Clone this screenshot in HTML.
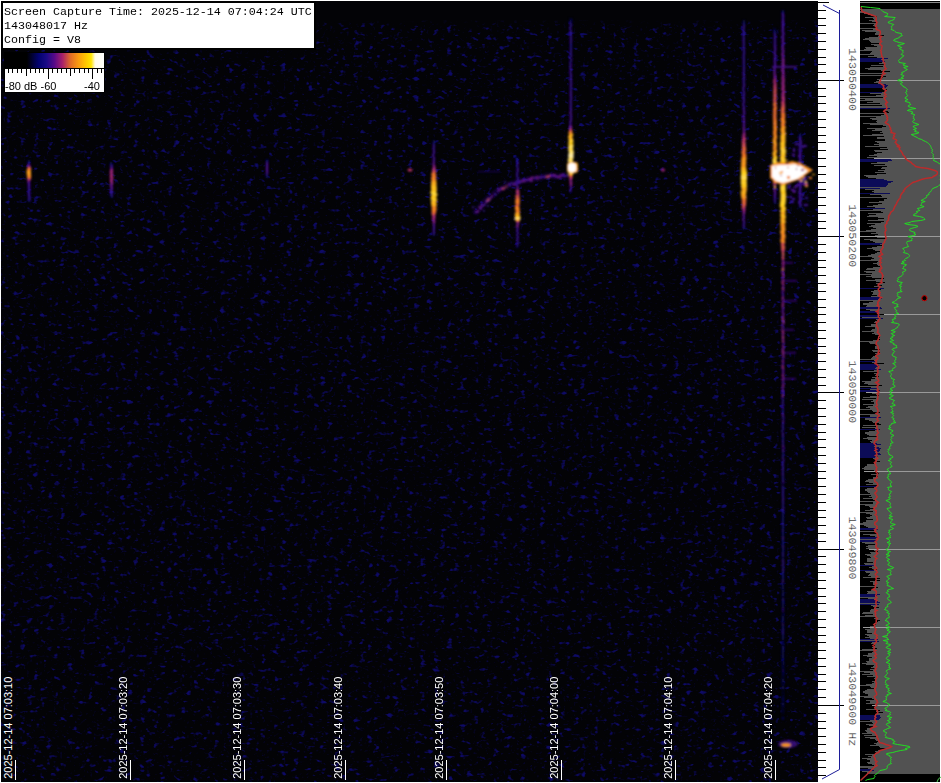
<!DOCTYPE html><html><head><meta charset="utf-8"><style>
html,body{margin:0;padding:0;width:941px;height:783px;overflow:hidden;background:#fff}
</style></head><body>
<svg width="941" height="783" viewBox="0 0 941 783" style="position:absolute;left:0;top:0;display:block"><defs>
<filter id="nz" x="1" y="12" width="817" height="770" filterUnits="userSpaceOnUse" color-interpolation-filters="sRGB">
<feTurbulence type="fractalNoise" baseFrequency="0.15 0.22" numOctaves="2" seed="3" result="t"/>
<feColorMatrix in="t" type="matrix" values="0 0 0 0 0  0 0 0 0 0  0 0 0 0 0  5.0 0 0 0 -3.1" result="a"/>
<feComponentTransfer in="a" result="b"><feFuncA type="table" tableValues="0 0.3 0.6 0.85 1"/></feComponentTransfer>
<feFlood flood-color="#0e0a66" result="f"/>
<feComposite in="f" in2="b" operator="in" result="c"/>
<feGaussianBlur in="c" stdDeviation="0.55" result="c2"/>
<feTurbulence type="fractalNoise" baseFrequency="0.3 0.38" numOctaves="1" seed="9" result="t2"/>
<feColorMatrix in="t2" type="matrix" values="0 0 0 0 0  0 0 0 0 0  0 0 0 0 0  4.0 0 0 0 -2.45" result="d"/>
<feFlood flood-color="#080634" result="f2"/>
<feComposite in="f2" in2="d" operator="in" result="e"/>
<feMerge><feMergeNode in="e"/><feMergeNode in="c2"/></feMerge>
</filter>
<linearGradient id="topfade" x1="0" y1="0" x2="0" y2="1">
<stop offset="0" stop-color="#030306" stop-opacity="1"/><stop offset="0.75" stop-color="#030306" stop-opacity="1"/><stop offset="1" stop-color="#030306" stop-opacity="0"/>
</linearGradient>
<filter id="b1" x="-20%" y="-20%" width="140%" height="140%"><feGaussianBlur stdDeviation="0.85"/></filter>
<filter id="b2" x="-20%" y="-20%" width="140%" height="140%"><feGaussianBlur stdDeviation="1.2"/></filter>
<linearGradient id="cbar" x1="0" y1="0" x2="1" y2="0">
<stop offset="0" stop-color="#000"/><stop offset="0.22" stop-color="#000"/>
<stop offset="0.34" stop-color="#020270"/><stop offset="0.42" stop-color="#1a0a86"/>
<stop offset="0.50" stop-color="#580a88"/><stop offset="0.58" stop-color="#a8206a"/>
<stop offset="0.66" stop-color="#e06a28"/><stop offset="0.74" stop-color="#fa9a10"/>
<stop offset="0.82" stop-color="#ffc800"/><stop offset="0.87" stop-color="#ffe400"/><stop offset="0.91" stop-color="#fffbe8"/><stop offset="1" stop-color="#fff"/>
</linearGradient>
</defs><rect x="0" y="0" width="941" height="783" fill="#fff"/><rect x="1" y="1" width="817" height="781" fill="#030306"/><rect x="1" y="12" width="817" height="770" fill="#000" filter="url(#nz)"/><rect x="1" y="1" width="817" height="25" fill="url(#topfade)"/><g filter="url(#b1)"><rect x="28.2" y="160" width="2.4" height="1" fill="#09093f"/><rect x="27.6" y="161" width="2.4" height="1" fill="#0d0d68"/><rect x="27.6" y="162" width="2.4" height="1" fill="#111082"/><rect x="27.8" y="163" width="2.4" height="1" fill="#27108d"/><rect x="27.2" y="164" width="2.4" height="1" fill="#3c1097"/><rect x="27.8" y="165" width="2.4" height="1" fill="#641598"/><rect x="27.5" y="166" width="2.9" height="1" fill="#932184"/><rect x="27.5" y="167" width="3.4" height="1" fill="#bd3866"/><rect x="27.0" y="168" width="3.9" height="1" fill="#eb7127"/><rect x="27.2" y="169" width="4.0" height="1" fill="#f07a20"/><rect x="26.5" y="170" width="4.1" height="1" fill="#f28620"/><rect x="26.6" y="171" width="4.4" height="1" fill="#f69e1f"/><rect x="26.6" y="172" width="4.4" height="1" fill="#f79f1f"/><rect x="26.5" y="173" width="4.4" height="1" fill="#f69e1f"/><rect x="26.9" y="174" width="4.2" height="1" fill="#f48d20"/><rect x="26.8" y="175" width="4.3" height="1" fill="#f4921f"/><rect x="27.1" y="176" width="4.1" height="1" fill="#f17e20"/><rect x="26.9" y="177" width="4.1" height="1" fill="#f17d20"/><rect x="27.5" y="178" width="3.6" height="1" fill="#d45547"/><rect x="27.2" y="179" width="3.2" height="1" fill="#b12a76"/><rect x="27.7" y="180" width="2.8" height="1" fill="#8d1f87"/><rect x="27.4" y="181" width="2.5" height="1" fill="#691696"/><rect x="27.5" y="182" width="2.4" height="1" fill="#5110a0"/><rect x="27.8" y="183" width="2.4" height="1" fill="#46109b"/><rect x="27.6" y="184" width="2.4" height="1" fill="#46109b"/><rect x="28.0" y="185" width="2.4" height="1" fill="#421099"/><rect x="27.9" y="186" width="2.4" height="1" fill="#381095"/><rect x="27.4" y="187" width="2.4" height="1" fill="#391095"/><rect x="28.0" y="188" width="2.4" height="1" fill="#371094"/><rect x="27.9" y="189" width="2.4" height="1" fill="#2e1090"/><rect x="28.0" y="190" width="2.4" height="1" fill="#321092"/><rect x="27.8" y="191" width="2.4" height="1" fill="#301091"/><rect x="27.5" y="192" width="2.4" height="1" fill="#321092"/><rect x="27.8" y="193" width="2.4" height="1" fill="#321092"/><rect x="27.6" y="194" width="2.4" height="1" fill="#311091"/><rect x="28.0" y="195" width="2.4" height="1" fill="#321092"/><rect x="28.0" y="196" width="2.4" height="1" fill="#2d108f"/><rect x="28.3" y="197" width="2.4" height="1" fill="#301091"/><rect x="28.1" y="198" width="2.4" height="1" fill="#26108c"/><rect x="27.8" y="199" width="2.4" height="1" fill="#2c108f"/><rect x="28.2" y="200" width="2.4" height="1" fill="#26108c"/><rect x="28.0" y="201" width="2.4" height="1" fill="#0d0d62"/><rect x="109.8" y="162" width="2.4" height="1" fill="#0a0a46"/><rect x="109.9" y="163" width="2.4" height="1" fill="#0d0d61"/><rect x="110.8" y="164" width="2.4" height="1" fill="#141084"/><rect x="109.8" y="165" width="2.4" height="1" fill="#2e1090"/><rect x="110.5" y="166" width="2.4" height="1" fill="#3b1096"/><rect x="110.4" y="167" width="2.4" height="1" fill="#53119f"/><rect x="110.4" y="168" width="2.4" height="1" fill="#641598"/><rect x="110.1" y="169" width="2.7" height="1" fill="#861d8a"/><rect x="110.2" y="170" width="2.9" height="1" fill="#a0247f"/><rect x="110.0" y="171" width="3.0" height="1" fill="#a6257c"/><rect x="109.6" y="172" width="2.9" height="1" fill="#a3257e"/><rect x="110.4" y="173" width="2.9" height="1" fill="#a1247e"/><rect x="109.6" y="174" width="2.9" height="1" fill="#a3257d"/><rect x="110.2" y="175" width="3.0" height="1" fill="#ac277a"/><rect x="110.0" y="176" width="3.1" height="1" fill="#b02977"/><rect x="109.6" y="177" width="2.9" height="1" fill="#a1247e"/><rect x="110.8" y="178" width="3.0" height="1" fill="#ac277a"/><rect x="109.9" y="179" width="2.9" height="1" fill="#9f247f"/><rect x="109.8" y="180" width="3.0" height="1" fill="#a8267c"/><rect x="110.0" y="181" width="2.8" height="1" fill="#982282"/><rect x="110.4" y="182" width="2.8" height="1" fill="#902085"/><rect x="110.4" y="183" width="2.7" height="1" fill="#851d8a"/><rect x="110.3" y="184" width="2.6" height="1" fill="#771a90"/><rect x="109.9" y="185" width="2.4" height="1" fill="#631598"/><rect x="110.1" y="186" width="2.5" height="1" fill="#6a1695"/><rect x="110.5" y="187" width="2.4" height="1" fill="#5e139a"/><rect x="110.5" y="188" width="2.4" height="1" fill="#58129d"/><rect x="110.3" y="189" width="2.4" height="1" fill="#4e109f"/><rect x="110.1" y="190" width="2.4" height="1" fill="#43109a"/><rect x="110.0" y="191" width="2.4" height="1" fill="#3e1098"/><rect x="110.3" y="192" width="2.4" height="1" fill="#381095"/><rect x="110.2" y="193" width="2.4" height="1" fill="#351094"/><rect x="110.3" y="194" width="2.4" height="1" fill="#29108e"/><rect x="110.6" y="195" width="2.4" height="1" fill="#2a108e"/><rect x="110.1" y="196" width="2.4" height="1" fill="#111082"/><rect x="110.9" y="197" width="2.4" height="1" fill="#0a0a4d"/><rect x="266.5" y="159" width="2.0" height="1" fill="#0b0b50"/><rect x="265.8" y="160" width="2.0" height="1" fill="#101082"/><rect x="266.1" y="161" width="2.0" height="1" fill="#22108a"/><rect x="266.2" y="162" width="2.0" height="1" fill="#3a1096"/><rect x="266.1" y="163" width="2.0" height="1" fill="#51109f"/><rect x="266.0" y="164" width="2.0" height="1" fill="#4b109e"/><rect x="266.0" y="165" width="2.0" height="1" fill="#4e109f"/><rect x="266.2" y="166" width="2.0" height="1" fill="#4f109f"/><rect x="266.1" y="167" width="2.0" height="1" fill="#55119e"/><rect x="266.0" y="168" width="2.0" height="1" fill="#52109f"/><rect x="266.0" y="169" width="2.0" height="1" fill="#4f109f"/><rect x="266.1" y="170" width="2.0" height="1" fill="#4e109f"/><rect x="266.2" y="171" width="2.0" height="1" fill="#5010a0"/><rect x="266.3" y="172" width="2.0" height="1" fill="#4c109e"/><rect x="265.8" y="173" width="2.0" height="1" fill="#3a1096"/><rect x="265.8" y="174" width="2.0" height="1" fill="#28108d"/><rect x="265.8" y="175" width="2.0" height="1" fill="#161085"/><rect x="265.7" y="176" width="2.0" height="1" fill="#0d0d62"/><rect x="266.0" y="177" width="2.0" height="1" fill="#0a0a4c"/><ellipse cx="410" cy="170" rx="2.5" ry="1.5" fill="#b9336b"/><rect x="432.9" y="140" width="1.9" height="1" fill="#0a0a4d"/><rect x="433.4" y="141" width="1.9" height="1" fill="#0c0c5d"/><rect x="433.0" y="142" width="1.9" height="1" fill="#0e0e72"/><rect x="432.4" y="143" width="1.9" height="1" fill="#201089"/><rect x="433.1" y="144" width="1.9" height="1" fill="#2a108e"/><rect x="432.9" y="145" width="1.9" height="1" fill="#361094"/><rect x="432.9" y="146" width="1.9" height="1" fill="#3b1096"/><rect x="432.8" y="147" width="1.9" height="1" fill="#391095"/><rect x="432.6" y="148" width="1.9" height="1" fill="#3d1097"/><rect x="432.7" y="149" width="1.9" height="1" fill="#3f1098"/><rect x="433.0" y="150" width="1.9" height="1" fill="#351093"/><rect x="433.1" y="151" width="1.9" height="1" fill="#49109d"/><rect x="433.1" y="152" width="1.9" height="1" fill="#3c1097"/><rect x="432.8" y="153" width="1.9" height="1" fill="#3f1098"/><rect x="432.2" y="154" width="1.9" height="1" fill="#44109a"/><rect x="432.5" y="155" width="1.9" height="1" fill="#46109c"/><rect x="432.4" y="156" width="1.9" height="1" fill="#43109a"/><rect x="432.6" y="157" width="1.9" height="1" fill="#3f1098"/><rect x="433.3" y="158" width="1.9" height="1" fill="#5010a0"/><rect x="433.2" y="159" width="1.9" height="1" fill="#4c109e"/><rect x="432.3" y="160" width="1.9" height="1" fill="#4d109e"/><rect x="433.0" y="161" width="1.9" height="1" fill="#52109f"/><rect x="432.9" y="162" width="1.9" height="1" fill="#56119e"/><rect x="432.5" y="163" width="2.1" height="1" fill="#6d1794"/><rect x="432.8" y="164" width="1.9" height="1" fill="#601499"/><rect x="432.5" y="165" width="2.3" height="1" fill="#7a1b8e"/><rect x="433.0" y="166" width="2.7" height="1" fill="#942184"/><rect x="432.7" y="167" width="2.6" height="1" fill="#8e1f86"/><rect x="432.5" y="168" width="3.1" height="1" fill="#a9267b"/><rect x="432.0" y="169" width="3.4" height="1" fill="#b7316e"/><rect x="432.6" y="170" width="3.5" height="1" fill="#c03c62"/><rect x="431.7" y="171" width="3.8" height="1" fill="#cc4b52"/><rect x="432.2" y="172" width="4.0" height="1" fill="#d65744"/><rect x="431.5" y="173" width="4.2" height="1" fill="#df6338"/><rect x="431.1" y="174" width="4.7" height="1" fill="#f17f20"/><rect x="431.5" y="175" width="4.6" height="1" fill="#f07820"/><rect x="432.0" y="176" width="4.4" height="1" fill="#e56a2f"/><rect x="431.1" y="177" width="4.8" height="1" fill="#f28320"/><rect x="431.2" y="178" width="4.9" height="1" fill="#f38d20"/><rect x="431.3" y="179" width="4.5" height="1" fill="#ec7325"/><rect x="431.5" y="180" width="5.1" height="1" fill="#f5951f"/><rect x="431.2" y="181" width="5.1" height="1" fill="#f69a1f"/><rect x="431.1" y="182" width="5.3" height="1" fill="#f7a51f"/><rect x="431.1" y="183" width="5.5" height="1" fill="#fab41f"/><rect x="431.2" y="184" width="5.5" height="1" fill="#f9af1f"/><rect x="430.9" y="185" width="5.3" height="1" fill="#f7a41f"/><rect x="430.9" y="186" width="5.9" height="1" fill="#fecc1e"/><rect x="431.1" y="187" width="5.6" height="1" fill="#fbba1f"/><rect x="431.0" y="188" width="5.7" height="1" fill="#fcbd1e"/><rect x="431.0" y="189" width="5.7" height="1" fill="#fcc01e"/><rect x="431.4" y="190" width="5.6" height="1" fill="#fbba1f"/><rect x="430.4" y="191" width="5.9" height="1" fill="#fecd1e"/><rect x="430.7" y="192" width="6.1" height="1" fill="#ffd429"/><rect x="430.3" y="193" width="6.2" height="1" fill="#ffd943"/><rect x="431.8" y="194" width="6.2" height="1" fill="#ffd940"/><rect x="431.0" y="195" width="5.8" height="1" fill="#fdc61e"/><rect x="430.9" y="196" width="5.9" height="1" fill="#fece1e"/><rect x="430.7" y="197" width="5.6" height="1" fill="#fab61f"/><rect x="430.8" y="198" width="6.0" height="1" fill="#ffcf1e"/><rect x="430.5" y="199" width="6.1" height="1" fill="#ffd632"/><rect x="431.8" y="200" width="5.8" height="1" fill="#fdc31e"/><rect x="430.8" y="201" width="5.5" height="1" fill="#fab31f"/><rect x="431.0" y="202" width="5.6" height="1" fill="#fbb81f"/><rect x="431.0" y="203" width="5.6" height="1" fill="#fbbb1f"/><rect x="431.3" y="204" width="5.2" height="1" fill="#f69d1f"/><rect x="431.3" y="205" width="5.7" height="1" fill="#fcc01e"/><rect x="431.5" y="206" width="4.5" height="1" fill="#ec7326"/><rect x="431.6" y="207" width="4.8" height="1" fill="#f28220"/><rect x="432.0" y="208" width="4.8" height="1" fill="#f28320"/><rect x="431.6" y="209" width="4.9" height="1" fill="#f38820"/><rect x="431.5" y="210" width="4.6" height="1" fill="#ef7622"/><rect x="432.0" y="211" width="4.5" height="1" fill="#ea7028"/><rect x="431.5" y="212" width="4.3" height="1" fill="#e26633"/><rect x="431.7" y="213" width="4.2" height="1" fill="#df6337"/><rect x="431.7" y="214" width="3.7" height="1" fill="#c94756"/><rect x="431.9" y="215" width="3.4" height="1" fill="#ba356a"/><rect x="432.7" y="216" width="2.8" height="1" fill="#962283"/><rect x="432.1" y="217" width="3.2" height="1" fill="#b12a76"/><rect x="432.4" y="218" width="3.1" height="1" fill="#ab277a"/><rect x="431.7" y="219" width="2.8" height="1" fill="#982282"/><rect x="432.7" y="220" width="2.5" height="1" fill="#871e89"/><rect x="433.0" y="221" width="2.7" height="1" fill="#932184"/><rect x="432.2" y="222" width="2.5" height="1" fill="#871e89"/><rect x="433.0" y="223" width="1.9" height="1" fill="#52109f"/><rect x="433.1" y="224" width="1.9" height="1" fill="#621598"/><rect x="432.9" y="225" width="1.9" height="1" fill="#56129d"/><rect x="433.0" y="226" width="1.9" height="1" fill="#45109b"/><rect x="433.0" y="227" width="1.9" height="1" fill="#47109c"/><rect x="432.8" y="228" width="1.9" height="1" fill="#48109c"/><rect x="432.8" y="229" width="1.9" height="1" fill="#42109a"/><rect x="433.0" y="230" width="1.9" height="1" fill="#411099"/><rect x="432.7" y="231" width="1.9" height="1" fill="#341093"/><rect x="432.8" y="232" width="1.9" height="1" fill="#3e1098"/><rect x="433.0" y="233" width="1.9" height="1" fill="#351093"/><rect x="432.6" y="234" width="1.9" height="1" fill="#26108c"/><rect x="432.9" y="235" width="1.9" height="1" fill="#0d0d6a"/><rect x="516.2" y="157" width="1.9" height="1" fill="#0d0d68"/><rect x="516.5" y="158" width="1.9" height="1" fill="#0c0c60"/><rect x="515.8" y="159" width="1.9" height="1" fill="#24108b"/><rect x="516.4" y="160" width="1.9" height="1" fill="#201089"/><rect x="516.4" y="161" width="1.9" height="1" fill="#2b108e"/><rect x="517.0" y="162" width="1.9" height="1" fill="#351093"/><rect x="516.7" y="163" width="1.9" height="1" fill="#351093"/><rect x="516.3" y="164" width="1.9" height="1" fill="#361094"/><rect x="516.5" y="165" width="1.9" height="1" fill="#391095"/><rect x="516.5" y="166" width="1.9" height="1" fill="#28108d"/><rect x="516.8" y="167" width="1.9" height="1" fill="#301091"/><rect x="516.4" y="168" width="1.9" height="1" fill="#331092"/><rect x="516.8" y="169" width="1.9" height="1" fill="#47109c"/><rect x="516.7" y="170" width="1.9" height="1" fill="#45109b"/><rect x="516.4" y="171" width="1.9" height="1" fill="#341093"/><rect x="516.8" y="172" width="1.9" height="1" fill="#321092"/><rect x="516.1" y="173" width="1.9" height="1" fill="#381095"/><rect x="516.1" y="174" width="1.9" height="1" fill="#361094"/><rect x="516.2" y="175" width="1.9" height="1" fill="#391095"/><rect x="516.6" y="176" width="1.9" height="1" fill="#28108d"/><rect x="516.1" y="177" width="1.9" height="1" fill="#371094"/><rect x="517.2" y="178" width="1.9" height="1" fill="#42109a"/><rect x="517.1" y="179" width="1.9" height="1" fill="#26108d"/><rect x="516.4" y="180" width="1.9" height="1" fill="#311092"/><rect x="516.1" y="181" width="1.9" height="1" fill="#381095"/><rect x="516.7" y="182" width="1.9" height="1" fill="#4c109e"/><rect x="516.5" y="183" width="1.9" height="1" fill="#321092"/><rect x="516.4" y="184" width="1.9" height="1" fill="#29108e"/><rect x="516.0" y="185" width="1.9" height="1" fill="#49109d"/><rect x="516.6" y="186" width="1.9" height="1" fill="#42109a"/><rect x="516.9" y="187" width="2.1" height="1" fill="#6e1893"/><rect x="516.3" y="188" width="1.9" height="1" fill="#5f149a"/><rect x="516.1" y="189" width="2.5" height="1" fill="#891e88"/><rect x="516.6" y="190" width="2.5" height="1" fill="#8b1f87"/><rect x="515.8" y="191" width="3.5" height="1" fill="#c84656"/><rect x="516.1" y="192" width="3.2" height="1" fill="#b62f70"/><rect x="516.2" y="193" width="2.7" height="1" fill="#962283"/><rect x="516.7" y="194" width="3.1" height="1" fill="#b12976"/><rect x="515.6" y="195" width="3.8" height="1" fill="#d75942"/><rect x="514.9" y="196" width="3.6" height="1" fill="#cc4c51"/><rect x="516.0" y="197" width="4.1" height="1" fill="#e36732"/><rect x="515.9" y="198" width="3.7" height="1" fill="#ce4e4f"/><rect x="514.9" y="199" width="4.3" height="1" fill="#ee7622"/><rect x="515.7" y="200" width="4.5" height="1" fill="#f28320"/><rect x="515.4" y="201" width="4.3" height="1" fill="#ec7326"/><rect x="514.8" y="202" width="4.5" height="1" fill="#f28220"/><rect x="515.7" y="203" width="4.2" height="1" fill="#eb7226"/><rect x="515.9" y="204" width="3.8" height="1" fill="#d45547"/><rect x="514.8" y="205" width="4.1" height="1" fill="#e46931"/><rect x="515.1" y="206" width="4.2" height="1" fill="#ea7128"/><rect x="515.0" y="207" width="4.4" height="1" fill="#f17c20"/><rect x="514.9" y="208" width="4.7" height="1" fill="#f4901f"/><rect x="515.1" y="209" width="4.4" height="1" fill="#f18020"/><rect x="515.8" y="210" width="4.2" height="1" fill="#ea7128"/><rect x="515.1" y="211" width="4.5" height="1" fill="#f38720"/><rect x="515.8" y="212" width="4.1" height="1" fill="#e76d2d"/><rect x="514.9" y="213" width="5.0" height="1" fill="#f8a81f"/><rect x="514.7" y="214" width="5.0" height="1" fill="#f7a51f"/><rect x="514.9" y="215" width="4.8" height="1" fill="#f5981f"/><rect x="514.8" y="216" width="5.5" height="1" fill="#fece1e"/><rect x="515.0" y="217" width="5.4" height="1" fill="#fdc51e"/><rect x="514.4" y="218" width="6.2" height="1" fill="#ffe991"/><rect x="514.6" y="219" width="5.5" height="1" fill="#fece1e"/><rect x="515.5" y="220" width="4.3" height="1" fill="#f07820"/><rect x="516.0" y="221" width="3.6" height="1" fill="#ca4855"/><rect x="516.8" y="222" width="2.3" height="1" fill="#801c8c"/><rect x="516.3" y="223" width="2.3" height="1" fill="#7d1b8d"/><rect x="516.7" y="224" width="1.9" height="1" fill="#601499"/><rect x="516.5" y="225" width="2.6" height="1" fill="#922085"/><rect x="515.9" y="226" width="2.2" height="1" fill="#791a8f"/><rect x="516.4" y="227" width="1.9" height="1" fill="#4a109d"/><rect x="516.9" y="228" width="1.9" height="1" fill="#401099"/><rect x="516.5" y="229" width="1.9" height="1" fill="#47109c"/><rect x="516.3" y="230" width="1.9" height="1" fill="#43109a"/><rect x="516.3" y="231" width="1.9" height="1" fill="#301091"/><rect x="516.7" y="232" width="1.9" height="1" fill="#411099"/><rect x="516.9" y="233" width="1.9" height="1" fill="#411099"/><rect x="516.4" y="234" width="1.9" height="1" fill="#27108d"/><rect x="516.1" y="235" width="1.9" height="1" fill="#391095"/><rect x="516.9" y="236" width="1.9" height="1" fill="#2f1090"/><rect x="516.9" y="237" width="1.9" height="1" fill="#43109a"/><rect x="516.5" y="238" width="1.9" height="1" fill="#341093"/><rect x="516.4" y="239" width="1.9" height="1" fill="#401098"/><rect x="516.9" y="240" width="1.9" height="1" fill="#351093"/><rect x="516.4" y="241" width="1.9" height="1" fill="#2b108f"/><rect x="516.7" y="242" width="1.9" height="1" fill="#2e1090"/><rect x="516.6" y="243" width="1.9" height="1" fill="#331093"/><rect x="516.1" y="244" width="1.9" height="1" fill="#331092"/><rect x="516.6" y="245" width="1.9" height="1" fill="#201089"/><rect x="516.1" y="246" width="1.9" height="1" fill="#1e1088"/><rect x="516.3" y="247" width="1.9" height="1" fill="#0a0a4d"/><rect x="569.5" y="18" width="1.9" height="1" fill="#09093b"/><rect x="570.4" y="19" width="1.9" height="1" fill="#0b0b55"/><rect x="570.2" y="20" width="1.9" height="1" fill="#0d0d61"/><rect x="569.5" y="21" width="1.9" height="1" fill="#0f0f7c"/><rect x="569.6" y="22" width="1.9" height="1" fill="#121083"/><rect x="569.5" y="23" width="1.9" height="1" fill="#26108c"/><rect x="570.0" y="24" width="1.9" height="1" fill="#361094"/><rect x="570.1" y="25" width="1.9" height="1" fill="#161085"/><rect x="569.6" y="26" width="1.9" height="1" fill="#391095"/><rect x="569.3" y="27" width="1.9" height="1" fill="#341093"/><rect x="569.4" y="28" width="1.9" height="1" fill="#2d1090"/><rect x="569.3" y="29" width="1.9" height="1" fill="#301091"/><rect x="570.0" y="30" width="1.9" height="1" fill="#121083"/><rect x="569.7" y="31" width="1.9" height="1" fill="#411099"/><rect x="569.9" y="32" width="1.9" height="1" fill="#341093"/><rect x="570.0" y="33" width="1.9" height="1" fill="#29108e"/><rect x="569.5" y="34" width="1.9" height="1" fill="#3c1097"/><rect x="570.0" y="35" width="1.9" height="1" fill="#321092"/><rect x="570.3" y="36" width="1.9" height="1" fill="#1f1089"/><rect x="569.6" y="37" width="1.9" height="1" fill="#401098"/><rect x="569.9" y="38" width="1.9" height="1" fill="#3e1098"/><rect x="570.3" y="39" width="1.9" height="1" fill="#2c108f"/><rect x="569.9" y="40" width="1.9" height="1" fill="#301091"/><rect x="570.2" y="41" width="1.9" height="1" fill="#3d1097"/><rect x="569.4" y="42" width="1.9" height="1" fill="#371094"/><rect x="570.2" y="43" width="1.9" height="1" fill="#201089"/><rect x="569.9" y="44" width="1.9" height="1" fill="#26108c"/><rect x="569.8" y="45" width="1.9" height="1" fill="#25108c"/><rect x="570.3" y="46" width="1.9" height="1" fill="#23108b"/><rect x="569.8" y="47" width="1.9" height="1" fill="#26108c"/><rect x="570.2" y="48" width="1.9" height="1" fill="#2e1090"/><rect x="569.8" y="49" width="1.9" height="1" fill="#23108b"/><rect x="570.0" y="50" width="1.9" height="1" fill="#2f1090"/><rect x="569.7" y="51" width="1.9" height="1" fill="#351093"/><rect x="569.7" y="52" width="1.9" height="1" fill="#331093"/><rect x="569.8" y="53" width="1.9" height="1" fill="#361094"/><rect x="569.8" y="54" width="1.9" height="1" fill="#2b108f"/><rect x="570.5" y="55" width="1.9" height="1" fill="#351094"/><rect x="569.9" y="56" width="1.9" height="1" fill="#2d1090"/><rect x="569.2" y="57" width="1.9" height="1" fill="#401099"/><rect x="569.5" y="58" width="1.9" height="1" fill="#22108a"/><rect x="570.6" y="59" width="1.9" height="1" fill="#321092"/><rect x="570.2" y="60" width="1.9" height="1" fill="#371094"/><rect x="569.1" y="61" width="1.9" height="1" fill="#311092"/><rect x="570.2" y="62" width="1.9" height="1" fill="#1d1088"/><rect x="569.5" y="63" width="1.9" height="1" fill="#361094"/><rect x="569.4" y="64" width="1.9" height="1" fill="#3f1098"/><rect x="570.3" y="65" width="1.9" height="1" fill="#3f1098"/><rect x="569.5" y="66" width="1.9" height="1" fill="#2d1090"/><rect x="569.5" y="67" width="1.9" height="1" fill="#3d1097"/><rect x="569.5" y="68" width="1.9" height="1" fill="#3d1097"/><rect x="569.9" y="69" width="1.9" height="1" fill="#3d1097"/><rect x="569.6" y="70" width="1.9" height="1" fill="#311092"/><rect x="569.3" y="71" width="1.9" height="1" fill="#381095"/><rect x="569.7" y="72" width="1.9" height="1" fill="#331093"/><rect x="569.5" y="73" width="1.9" height="1" fill="#3d1097"/><rect x="569.8" y="74" width="1.9" height="1" fill="#47109c"/><rect x="570.3" y="75" width="1.9" height="1" fill="#2c108f"/><rect x="569.8" y="76" width="1.9" height="1" fill="#47109c"/><rect x="569.9" y="77" width="1.9" height="1" fill="#2f1090"/><rect x="569.8" y="78" width="1.9" height="1" fill="#311091"/><rect x="570.0" y="79" width="1.9" height="1" fill="#47109c"/><rect x="570.0" y="80" width="1.9" height="1" fill="#391095"/><rect x="570.1" y="81" width="1.9" height="1" fill="#381095"/><rect x="569.7" y="82" width="1.9" height="1" fill="#411099"/><rect x="570.6" y="83" width="1.9" height="1" fill="#3a1096"/><rect x="569.8" y="84" width="1.9" height="1" fill="#3d1097"/><rect x="569.9" y="85" width="1.9" height="1" fill="#4d109f"/><rect x="570.1" y="86" width="1.9" height="1" fill="#2f1090"/><rect x="569.7" y="87" width="1.9" height="1" fill="#311091"/><rect x="569.8" y="88" width="1.9" height="1" fill="#3d1097"/><rect x="569.7" y="89" width="1.9" height="1" fill="#331092"/><rect x="570.2" y="90" width="1.9" height="1" fill="#351093"/><rect x="569.7" y="91" width="1.9" height="1" fill="#341093"/><rect x="569.7" y="92" width="1.9" height="1" fill="#4e109f"/><rect x="570.2" y="93" width="1.9" height="1" fill="#49109d"/><rect x="569.4" y="94" width="1.9" height="1" fill="#3a1096"/><rect x="570.1" y="95" width="1.9" height="1" fill="#401098"/><rect x="569.9" y="96" width="1.9" height="1" fill="#45109b"/><rect x="570.3" y="97" width="1.9" height="1" fill="#48109c"/><rect x="570.3" y="98" width="1.9" height="1" fill="#321092"/><rect x="569.7" y="99" width="1.9" height="1" fill="#3e1098"/><rect x="570.4" y="100" width="1.9" height="1" fill="#3a1096"/><rect x="569.3" y="101" width="1.9" height="1" fill="#47109c"/><rect x="569.8" y="102" width="1.9" height="1" fill="#3f1098"/><rect x="569.7" y="103" width="1.9" height="1" fill="#3d1097"/><rect x="570.1" y="104" width="1.9" height="1" fill="#321092"/><rect x="569.7" y="105" width="1.9" height="1" fill="#381095"/><rect x="569.6" y="106" width="1.9" height="1" fill="#3c1096"/><rect x="570.0" y="107" width="1.9" height="1" fill="#49109d"/><rect x="569.6" y="108" width="1.9" height="1" fill="#3c1097"/><rect x="570.1" y="109" width="1.9" height="1" fill="#3f1098"/><rect x="569.9" y="110" width="1.9" height="1" fill="#46109b"/><rect x="569.8" y="111" width="1.9" height="1" fill="#421099"/><rect x="569.3" y="112" width="1.9" height="1" fill="#48109c"/><rect x="569.6" y="113" width="1.9" height="1" fill="#5c139b"/><rect x="570.3" y="114" width="1.9" height="1" fill="#421099"/><rect x="569.9" y="115" width="1.9" height="1" fill="#4a109d"/><rect x="569.4" y="116" width="1.9" height="1" fill="#43109a"/><rect x="570.2" y="117" width="1.9" height="1" fill="#4c109e"/><rect x="570.3" y="118" width="1.9" height="1" fill="#421099"/><rect x="569.6" y="119" width="1.9" height="1" fill="#411099"/><rect x="569.9" y="120" width="1.9" height="1" fill="#52109f"/><rect x="569.6" y="121" width="1.9" height="1" fill="#57129d"/><rect x="569.3" y="122" width="1.9" height="1" fill="#44109a"/><rect x="569.5" y="123" width="1.9" height="1" fill="#43109a"/><rect x="569.9" y="124" width="1.9" height="1" fill="#421099"/><rect x="569.3" y="125" width="1.9" height="1" fill="#4a109d"/><rect x="569.3" y="126" width="2.5" height="1" fill="#962283"/><rect x="570.2" y="127" width="2.0" height="1" fill="#6d1794"/><rect x="569.0" y="128" width="2.8" height="1" fill="#b22a76"/><rect x="569.2" y="129" width="2.6" height="1" fill="#9c2380"/><rect x="569.0" y="130" width="3.4" height="1" fill="#d85a41"/><rect x="569.1" y="131" width="3.3" height="1" fill="#d1524a"/><rect x="568.4" y="132" width="4.0" height="1" fill="#f48f1f"/><rect x="568.5" y="133" width="3.8" height="1" fill="#f17c20"/><rect x="569.1" y="134" width="4.5" height="1" fill="#fbb81f"/><rect x="568.6" y="135" width="4.4" height="1" fill="#f9ac1f"/><rect x="568.0" y="136" width="4.4" height="1" fill="#fab21f"/><rect x="568.2" y="137" width="4.5" height="1" fill="#fab61f"/><rect x="568.5" y="138" width="4.2" height="1" fill="#f7a21f"/><rect x="568.7" y="139" width="4.6" height="1" fill="#fcc01e"/><rect x="568.4" y="140" width="4.9" height="1" fill="#ffd940"/><rect x="568.7" y="141" width="4.6" height="1" fill="#fcc21e"/><rect x="568.8" y="142" width="4.8" height="1" fill="#ffd322"/><rect x="567.7" y="143" width="4.6" height="1" fill="#fdc61e"/><rect x="569.1" y="144" width="4.8" height="1" fill="#ffd11e"/><rect x="568.3" y="145" width="5.0" height="1" fill="#ffdb4d"/><rect x="568.4" y="146" width="5.1" height="1" fill="#ffe066"/><rect x="568.1" y="147" width="5.0" height="1" fill="#ffdd56"/><rect x="568.4" y="148" width="5.0" height="1" fill="#ffda48"/><rect x="568.1" y="149" width="4.8" height="1" fill="#ffd42a"/><rect x="568.6" y="150" width="5.0" height="1" fill="#ffdd55"/><rect x="568.4" y="151" width="5.1" height="1" fill="#ffe372"/><rect x="569.0" y="152" width="5.1" height="1" fill="#ffe270"/><rect x="568.6" y="153" width="5.1" height="1" fill="#ffe169"/><rect x="568.1" y="154" width="5.5" height="1" fill="#fff2c0"/><rect x="568.5" y="155" width="5.1" height="1" fill="#ffe373"/><rect x="568.2" y="156" width="5.5" height="1" fill="#fff2bd"/><rect x="568.2" y="157" width="5.2" height="1" fill="#ffe681"/><rect x="568.7" y="158" width="4.9" height="1" fill="#ffd83b"/><rect x="567.7" y="159" width="5.1" height="1" fill="#ffe26d"/><rect x="567.7" y="160" width="5.2" height="1" fill="#ffe477"/><rect x="568.3" y="161" width="5.0" height="1" fill="#ffdd53"/><rect x="568.6" y="162" width="5.0" height="1" fill="#ffdf5d"/><rect x="568.4" y="163" width="5.0" height="1" fill="#ffda48"/><rect x="568.5" y="164" width="5.4" height="1" fill="#ffefaf"/><rect x="568.1" y="165" width="5.5" height="1" fill="#fff4c6"/><rect x="568.1" y="166" width="5.3" height="1" fill="#ffeda3"/><rect x="567.8" y="167" width="5.6" height="1" fill="#fff8db"/><rect x="568.0" y="168" width="5.5" height="1" fill="#fff3c3"/><rect x="568.0" y="169" width="5.5" height="1" fill="#fff1bb"/><rect x="567.7" y="170" width="5.9" height="1" fill="#ffffff"/><rect x="568.1" y="171" width="5.5" height="1" fill="#fff4c6"/><rect x="568.1" y="172" width="5.6" height="1" fill="#fff8dd"/><rect x="568.6" y="173" width="5.1" height="1" fill="#ffe066"/><rect x="568.7" y="174" width="4.2" height="1" fill="#f69e1f"/><rect x="569.0" y="175" width="3.8" height="1" fill="#ef7721"/><rect x="568.9" y="176" width="3.3" height="1" fill="#d1514b"/><rect x="569.7" y="177" width="3.1" height="1" fill="#c13d61"/><rect x="569.5" y="178" width="2.7" height="1" fill="#a9267b"/><rect x="569.1" y="179" width="2.8" height="1" fill="#ad2779"/><rect x="569.7" y="180" width="1.9" height="1" fill="#641598"/><rect x="570.1" y="181" width="2.2" height="1" fill="#7a1a8f"/><rect x="569.1" y="182" width="2.6" height="1" fill="#9b2381"/><rect x="570.0" y="183" width="2.5" height="1" fill="#962283"/><rect x="569.9" y="184" width="2.0" height="1" fill="#6e1893"/><rect x="569.7" y="185" width="2.3" height="1" fill="#801c8c"/><rect x="569.9" y="186" width="1.9" height="1" fill="#48109c"/><rect x="570.0" y="187" width="1.9" height="1" fill="#3a1096"/><rect x="570.0" y="188" width="1.9" height="1" fill="#411099"/><rect x="569.5" y="189" width="1.9" height="1" fill="#401098"/><rect x="569.5" y="190" width="1.9" height="1" fill="#43109a"/><rect x="569.4" y="191" width="1.9" height="1" fill="#20108a"/><rect x="569.6" y="192" width="1.9" height="1" fill="#0c0c5f"/><rect x="567" y="162" width="11" height="11" rx="3" fill="#f9ab1f"/><rect x="568" y="163" width="8" height="9" rx="3" fill="#fff"/><polyline points="474,214 484,202 496,192 504,187.5 510,184.4 520,181.3 530,179 539,178 547,175.5 556,176.5 566,176" fill="none" stroke="#2a108e" stroke-width="6" opacity="0.25"/><rect x="475" y="211.0" width="2.5" height="2" fill="#4f10a0"/><rect x="472" y="206.5" width="2" height="1.5" fill="#3a1096"/><rect x="477" y="210.4" width="2.1" height="2" fill="#711892"/><rect x="479" y="206.4" width="2.4" height="2" fill="#751991"/><rect x="480" y="207.6" width="2.1" height="2" fill="#58129d"/><rect x="481" y="204.4" width="2.6" height="2" fill="#611499"/><rect x="483" y="204.4" width="1.2" height="2" fill="#45109b"/><rect x="483" y="210.0" width="2" height="1.5" fill="#311092"/><rect x="484" y="203.9" width="1.5" height="2" fill="#4a109d"/><rect x="485" y="200.9" width="2.4" height="2" fill="#721892"/><rect x="485" y="200.4" width="2" height="1.5" fill="#46109b"/><rect x="486" y="200.1" width="2.5" height="2" fill="#3d1097"/><rect x="487" y="199.5" width="1.1" height="2" fill="#df6337"/><rect x="487" y="196.8" width="2" height="1.5" fill="#331092"/><rect x="488" y="198.7" width="2.2" height="2" fill="#c74558"/><rect x="490" y="196.8" width="1.5" height="2" fill="#4c109e"/><rect x="488" y="200.1" width="2" height="1.5" fill="#3d1097"/><rect x="491" y="195.4" width="1.8" height="2" fill="#721892"/><rect x="494" y="193.2" width="1.8" height="2" fill="#44109a"/><rect x="487" y="205.1" width="2" height="1.5" fill="#351093"/><rect x="497" y="188.2" width="2.6" height="2" fill="#4c109e"/><rect x="498" y="189.8" width="1.7" height="2" fill="#6e1893"/><rect x="495" y="194.0" width="2" height="1.5" fill="#311091"/><rect x="500" y="187.8" width="1.7" height="2" fill="#6c1794"/><rect x="501" y="187.2" width="1.5" height="2" fill="#56119e"/><rect x="502" y="187.7" width="2.3" height="2" fill="#c4415d"/><rect x="504" y="186.6" width="1.1" height="2" fill="#ba356a"/><rect x="504" y="181.0" width="2" height="1.5" fill="#2c108f"/><rect x="506" y="185.6" width="1.0" height="2" fill="#c5425b"/><rect x="508" y="183.2" width="2.3" height="2" fill="#5b139b"/><rect x="509" y="184.4" width="2.2" height="2" fill="#381095"/><rect x="511" y="182.3" width="1.6" height="2" fill="#43109a"/><rect x="513" y="183.6" width="2.4" height="2" fill="#691696"/><rect x="514" y="182.5" width="2.2" height="2" fill="#4f109f"/><rect x="515" y="181.5" width="1.0" height="2" fill="#44109a"/><rect x="517" y="181.0" width="2.8" height="2" fill="#43109a"/><rect x="518" y="181.4" width="3.0" height="2" fill="#4f10a0"/><rect x="519" y="180.3" width="1.6" height="2" fill="#401098"/><rect x="521" y="180.2" width="1.1" height="2" fill="#701893"/><rect x="522" y="179.9" width="1.9" height="2" fill="#621499"/><rect x="523" y="179.6" width="1.2" height="2" fill="#781a8f"/><rect x="524" y="179.7" width="1.8" height="2" fill="#6b1795"/><rect x="526" y="179.1" width="2.6" height="2" fill="#49109d"/><rect x="527" y="178.4" width="1.3" height="2" fill="#611499"/><rect x="529" y="178.0" width="2.6" height="2" fill="#721892"/><rect x="530" y="180.0" width="2.4" height="2" fill="#6b1795"/><rect x="531" y="176.8" width="2.6" height="2" fill="#7d1b8d"/><rect x="534" y="177.2" width="1.3" height="2" fill="#43109a"/><rect x="535" y="177.1" width="1.6" height="2" fill="#381095"/><rect x="536" y="176.0" width="1.8" height="2" fill="#771a90"/><rect x="537" y="177.6" width="1.5" height="2" fill="#721992"/><rect x="539" y="176.0" width="2.1" height="2" fill="#5c139b"/><rect x="540" y="176.7" width="1.5" height="2" fill="#45109b"/><rect x="542" y="175.7" width="2.3" height="2" fill="#48109c"/><rect x="544" y="176.1" width="2.7" height="2" fill="#3c1096"/><rect x="546" y="175.8" width="3.0" height="2" fill="#c6445a"/><rect x="548" y="175.5" width="1.3" height="2" fill="#bc3768"/><rect x="549" y="174.9" width="1.4" height="2" fill="#c03c62"/><rect x="550" y="173.9" width="2.3" height="2" fill="#45109b"/><rect x="551" y="175.2" width="1.7" height="2" fill="#421099"/><rect x="552" y="174.5" width="2.4" height="2" fill="#4f109f"/><rect x="553" y="174.1" width="2.5" height="2" fill="#691695"/><rect x="554" y="174.7" width="1.7" height="2" fill="#7b1b8e"/><rect x="555" y="175.6" width="2.4" height="2" fill="#52109f"/><rect x="557" y="175.7" width="1.6" height="2" fill="#681696"/><rect x="558" y="176.1" width="2.8" height="2" fill="#781a8f"/><rect x="560" y="174.1" width="1.2" height="2" fill="#731991"/><rect x="561" y="174.5" width="2.9" height="2" fill="#43109a"/><rect x="562" y="173.4" width="2.3" height="2" fill="#5d139b"/><rect x="563" y="174.7" width="2.0" height="2" fill="#3d1097"/><rect x="564" y="175.1" width="1.7" height="2" fill="#46109b"/><rect x="566" y="174.7" width="2.1" height="2" fill="#421099"/><rect x="478" y="171" width="22" height="1.2" fill="#2a108e" opacity="0.6"/><rect x="743.0" y="20" width="1.9" height="1" fill="#09093e"/><rect x="743.0" y="21" width="1.9" height="1" fill="#0c0c5c"/><rect x="742.4" y="22" width="1.9" height="1" fill="#0d0d66"/><rect x="743.3" y="23" width="1.9" height="1" fill="#111082"/><rect x="742.8" y="24" width="1.9" height="1" fill="#25108c"/><rect x="743.3" y="25" width="1.9" height="1" fill="#24108b"/><rect x="742.9" y="26" width="1.9" height="1" fill="#391095"/><rect x="742.6" y="27" width="1.9" height="1" fill="#351093"/><rect x="742.6" y="28" width="1.9" height="1" fill="#341093"/><rect x="742.8" y="29" width="1.9" height="1" fill="#2f1091"/><rect x="742.2" y="30" width="1.9" height="1" fill="#2d1090"/><rect x="742.9" y="31" width="1.9" height="1" fill="#2b108f"/><rect x="742.7" y="32" width="1.9" height="1" fill="#301091"/><rect x="743.1" y="33" width="1.9" height="1" fill="#341093"/><rect x="742.6" y="34" width="1.9" height="1" fill="#361094"/><rect x="742.7" y="35" width="1.9" height="1" fill="#311092"/><rect x="742.4" y="36" width="1.9" height="1" fill="#2c108f"/><rect x="742.6" y="37" width="1.9" height="1" fill="#311091"/><rect x="742.8" y="38" width="1.9" height="1" fill="#3f1098"/><rect x="742.7" y="39" width="1.9" height="1" fill="#301091"/><rect x="742.6" y="40" width="1.9" height="1" fill="#3e1097"/><rect x="742.6" y="41" width="1.9" height="1" fill="#311091"/><rect x="742.8" y="42" width="1.9" height="1" fill="#311092"/><rect x="742.4" y="43" width="1.9" height="1" fill="#391095"/><rect x="743.3" y="44" width="1.9" height="1" fill="#321092"/><rect x="742.8" y="45" width="1.9" height="1" fill="#2f1091"/><rect x="742.1" y="46" width="1.9" height="1" fill="#2d1090"/><rect x="743.2" y="47" width="1.9" height="1" fill="#321092"/><rect x="742.3" y="48" width="1.9" height="1" fill="#301091"/><rect x="742.9" y="49" width="1.9" height="1" fill="#351093"/><rect x="743.1" y="50" width="1.9" height="1" fill="#391095"/><rect x="743.0" y="51" width="1.9" height="1" fill="#311092"/><rect x="743.2" y="52" width="1.9" height="1" fill="#28108d"/><rect x="743.2" y="53" width="1.9" height="1" fill="#351093"/><rect x="742.8" y="54" width="1.9" height="1" fill="#3a1096"/><rect x="742.6" y="55" width="1.9" height="1" fill="#331092"/><rect x="742.8" y="56" width="1.9" height="1" fill="#27108d"/><rect x="742.5" y="57" width="1.9" height="1" fill="#351093"/><rect x="742.9" y="58" width="1.9" height="1" fill="#391095"/><rect x="742.6" y="59" width="1.9" height="1" fill="#371094"/><rect x="743.1" y="60" width="1.9" height="1" fill="#29108e"/><rect x="742.8" y="61" width="1.9" height="1" fill="#381095"/><rect x="742.8" y="62" width="1.9" height="1" fill="#321092"/><rect x="742.7" y="63" width="1.9" height="1" fill="#341093"/><rect x="743.1" y="64" width="1.9" height="1" fill="#28108d"/><rect x="742.7" y="65" width="1.9" height="1" fill="#2b108f"/><rect x="742.9" y="66" width="1.9" height="1" fill="#331092"/><rect x="743.2" y="67" width="1.9" height="1" fill="#2b108f"/><rect x="743.1" y="68" width="1.9" height="1" fill="#3a1095"/><rect x="742.6" y="69" width="1.9" height="1" fill="#3e1097"/><rect x="742.9" y="70" width="1.9" height="1" fill="#22108a"/><rect x="743.2" y="71" width="1.9" height="1" fill="#3e1098"/><rect x="742.8" y="72" width="1.9" height="1" fill="#321092"/><rect x="742.3" y="73" width="1.9" height="1" fill="#381095"/><rect x="742.7" y="74" width="1.9" height="1" fill="#321092"/><rect x="742.7" y="75" width="1.9" height="1" fill="#401099"/><rect x="742.9" y="76" width="1.9" height="1" fill="#411099"/><rect x="743.5" y="77" width="1.9" height="1" fill="#2c108f"/><rect x="743.0" y="78" width="1.9" height="1" fill="#311091"/><rect x="742.7" y="79" width="1.9" height="1" fill="#421099"/><rect x="743.2" y="80" width="1.9" height="1" fill="#2f1091"/><rect x="742.5" y="81" width="1.9" height="1" fill="#381095"/><rect x="742.7" y="82" width="1.9" height="1" fill="#301091"/><rect x="742.8" y="83" width="1.9" height="1" fill="#3e1097"/><rect x="743.3" y="84" width="1.9" height="1" fill="#3c1096"/><rect x="743.3" y="85" width="1.9" height="1" fill="#401098"/><rect x="742.4" y="86" width="1.9" height="1" fill="#401098"/><rect x="742.9" y="87" width="1.9" height="1" fill="#401098"/><rect x="742.5" y="88" width="1.9" height="1" fill="#371094"/><rect x="742.5" y="89" width="1.9" height="1" fill="#2e1090"/><rect x="742.5" y="90" width="1.9" height="1" fill="#381095"/><rect x="742.7" y="91" width="1.9" height="1" fill="#331093"/><rect x="742.8" y="92" width="1.9" height="1" fill="#3d1097"/><rect x="743.2" y="93" width="1.9" height="1" fill="#381095"/><rect x="743.0" y="94" width="1.9" height="1" fill="#371094"/><rect x="742.9" y="95" width="1.9" height="1" fill="#321092"/><rect x="742.9" y="96" width="1.9" height="1" fill="#3a1096"/><rect x="742.5" y="97" width="1.9" height="1" fill="#361094"/><rect x="742.7" y="98" width="1.9" height="1" fill="#371094"/><rect x="743.1" y="99" width="1.9" height="1" fill="#401099"/><rect x="743.0" y="100" width="1.9" height="1" fill="#321092"/><rect x="743.0" y="101" width="1.9" height="1" fill="#381095"/><rect x="742.4" y="102" width="1.9" height="1" fill="#391095"/><rect x="743.0" y="103" width="1.9" height="1" fill="#43109a"/><rect x="742.3" y="104" width="1.9" height="1" fill="#361094"/><rect x="742.5" y="105" width="1.9" height="1" fill="#3b1096"/><rect x="743.0" y="106" width="1.9" height="1" fill="#3d1097"/><rect x="742.7" y="107" width="1.9" height="1" fill="#4a109d"/><rect x="743.2" y="108" width="1.9" height="1" fill="#4b109d"/><rect x="742.3" y="109" width="1.9" height="1" fill="#401099"/><rect x="743.0" y="110" width="1.9" height="1" fill="#49109d"/><rect x="743.3" y="111" width="1.9" height="1" fill="#57129d"/><rect x="743.4" y="112" width="1.9" height="1" fill="#4b109e"/><rect x="742.9" y="113" width="1.9" height="1" fill="#401099"/><rect x="743.4" y="114" width="1.9" height="1" fill="#46109b"/><rect x="741.9" y="115" width="1.9" height="1" fill="#4d109e"/><rect x="742.6" y="116" width="1.9" height="1" fill="#55119e"/><rect x="742.7" y="117" width="1.9" height="1" fill="#5010a0"/><rect x="743.0" y="118" width="1.9" height="1" fill="#4e109f"/><rect x="742.6" y="119" width="1.9" height="1" fill="#4e109f"/><rect x="743.0" y="120" width="1.9" height="1" fill="#5e139a"/><rect x="743.1" y="121" width="1.9" height="1" fill="#4f10a0"/><rect x="743.4" y="122" width="1.9" height="1" fill="#4d109f"/><rect x="743.0" y="123" width="1.9" height="1" fill="#55119e"/><rect x="742.6" y="124" width="1.9" height="1" fill="#59129c"/><rect x="742.9" y="125" width="1.9" height="1" fill="#4c109e"/><rect x="743.3" y="126" width="1.9" height="1" fill="#5d139b"/><rect x="742.5" y="127" width="1.9" height="1" fill="#601499"/><rect x="743.1" y="128" width="1.9" height="1" fill="#631598"/><rect x="742.8" y="129" width="2.2" height="1" fill="#711892"/><rect x="743.2" y="130" width="1.9" height="1" fill="#60149a"/><rect x="742.9" y="131" width="2.1" height="1" fill="#6e1893"/><rect x="743.0" y="132" width="2.1" height="1" fill="#6d1794"/><rect x="742.9" y="133" width="2.4" height="1" fill="#801c8c"/><rect x="742.6" y="134" width="3.1" height="1" fill="#a7267c"/><rect x="742.2" y="135" width="2.6" height="1" fill="#8d1f86"/><rect x="742.6" y="136" width="2.8" height="1" fill="#9a2281"/><rect x="742.2" y="137" width="3.2" height="1" fill="#b12977"/><rect x="742.3" y="138" width="3.4" height="1" fill="#b8316e"/><rect x="742.5" y="139" width="3.6" height="1" fill="#c23e60"/><rect x="742.1" y="140" width="3.6" height="1" fill="#c23e5f"/><rect x="741.8" y="141" width="3.3" height="1" fill="#b42d72"/><rect x="741.7" y="142" width="3.6" height="1" fill="#c23e5f"/><rect x="742.2" y="143" width="3.8" height="1" fill="#cd4c50"/><rect x="741.8" y="144" width="3.8" height="1" fill="#ca4954"/><rect x="741.9" y="145" width="3.8" height="1" fill="#cc4b51"/><rect x="742.0" y="146" width="3.9" height="1" fill="#cf4f4d"/><rect x="741.9" y="147" width="4.1" height="1" fill="#da5c3f"/><rect x="741.7" y="148" width="4.3" height="1" fill="#e16535"/><rect x="742.2" y="149" width="4.2" height="1" fill="#de6139"/><rect x="741.9" y="150" width="4.2" height="1" fill="#df6337"/><rect x="741.5" y="151" width="4.3" height="1" fill="#e36832"/><rect x="741.4" y="152" width="4.3" height="1" fill="#e16634"/><rect x="741.4" y="153" width="4.4" height="1" fill="#e86f2a"/><rect x="742.0" y="154" width="4.4" height="1" fill="#e76d2c"/><rect x="741.9" y="155" width="4.5" height="1" fill="#ed7424"/><rect x="741.7" y="156" width="4.7" height="1" fill="#f17d20"/><rect x="741.6" y="157" width="4.6" height="1" fill="#ee7622"/><rect x="741.4" y="158" width="5.3" height="1" fill="#f7a41f"/><rect x="741.4" y="159" width="5.0" height="1" fill="#f4931f"/><rect x="740.9" y="160" width="5.1" height="1" fill="#f5951f"/><rect x="741.5" y="161" width="4.8" height="1" fill="#f28320"/><rect x="741.1" y="162" width="5.2" height="1" fill="#f69d1f"/><rect x="741.2" y="163" width="5.0" height="1" fill="#f5941f"/><rect x="740.9" y="164" width="5.1" height="1" fill="#f5981f"/><rect x="741.3" y="165" width="4.9" height="1" fill="#f38c20"/><rect x="741.0" y="166" width="5.0" height="1" fill="#f48f1f"/><rect x="740.8" y="167" width="5.3" height="1" fill="#f7a31f"/><rect x="740.9" y="168" width="5.5" height="1" fill="#fab51f"/><rect x="740.7" y="169" width="5.6" height="1" fill="#fbb71f"/><rect x="741.2" y="170" width="5.5" height="1" fill="#fab51f"/><rect x="740.7" y="171" width="5.9" height="1" fill="#feca1e"/><rect x="740.9" y="172" width="6.0" height="1" fill="#ffd01e"/><rect x="741.3" y="173" width="6.0" height="1" fill="#ffd322"/><rect x="740.9" y="174" width="6.0" height="1" fill="#ffd220"/><rect x="740.6" y="175" width="6.3" height="1" fill="#ffdb4b"/><rect x="741.0" y="176" width="6.1" height="1" fill="#ffd428"/><rect x="740.6" y="177" width="6.4" height="1" fill="#ffe066"/><rect x="740.6" y="178" width="6.3" height="1" fill="#ffdd53"/><rect x="740.8" y="179" width="6.1" height="1" fill="#ffd52b"/><rect x="740.9" y="180" width="5.8" height="1" fill="#fdc71e"/><rect x="740.8" y="181" width="5.8" height="1" fill="#fdc71e"/><rect x="740.6" y="182" width="6.2" height="1" fill="#ffd83e"/><rect x="741.0" y="183" width="5.9" height="1" fill="#fecb1e"/><rect x="740.7" y="184" width="5.9" height="1" fill="#feca1e"/><rect x="741.3" y="185" width="5.8" height="1" fill="#fdc41e"/><rect x="741.0" y="186" width="5.9" height="1" fill="#fecd1e"/><rect x="741.2" y="187" width="5.5" height="1" fill="#f9b11f"/><rect x="741.2" y="188" width="5.4" height="1" fill="#f9ab1f"/><rect x="741.7" y="189" width="5.4" height="1" fill="#f8a91f"/><rect x="741.6" y="190" width="5.2" height="1" fill="#f69e1f"/><rect x="740.4" y="191" width="5.6" height="1" fill="#fbb91f"/><rect x="741.5" y="192" width="5.3" height="1" fill="#f8a81f"/><rect x="740.5" y="193" width="5.5" height="1" fill="#fab51f"/><rect x="740.9" y="194" width="5.2" height="1" fill="#f69b1f"/><rect x="741.1" y="195" width="5.0" height="1" fill="#f4911f"/><rect x="741.1" y="196" width="5.4" height="1" fill="#f9ac1f"/><rect x="741.3" y="197" width="4.9" height="1" fill="#f38820"/><rect x="741.5" y="198" width="4.9" height="1" fill="#f38a20"/><rect x="742.0" y="199" width="4.4" height="1" fill="#e86e2b"/><rect x="741.6" y="200" width="4.2" height="1" fill="#e06436"/><rect x="742.1" y="201" width="4.4" height="1" fill="#e76d2c"/><rect x="741.8" y="202" width="4.1" height="1" fill="#d95b3f"/><rect x="741.8" y="203" width="4.3" height="1" fill="#e26634"/><rect x="742.0" y="204" width="4.1" height="1" fill="#d95c3f"/><rect x="742.1" y="205" width="3.8" height="1" fill="#cb4953"/><rect x="741.9" y="206" width="3.8" height="1" fill="#ca4954"/><rect x="741.3" y="207" width="3.7" height="1" fill="#c84657"/><rect x="742.7" y="208" width="3.0" height="1" fill="#a6257c"/><rect x="742.0" y="209" width="3.1" height="1" fill="#aa277a"/><rect x="742.7" y="210" width="2.9" height="1" fill="#9e247f"/><rect x="742.7" y="211" width="2.5" height="1" fill="#881e89"/><rect x="742.5" y="212" width="2.4" height="1" fill="#821c8b"/><rect x="743.0" y="213" width="2.3" height="1" fill="#771a90"/><rect x="742.7" y="214" width="1.9" height="1" fill="#5f149a"/><rect x="742.4" y="215" width="2.0" height="1" fill="#691696"/><rect x="743.0" y="216" width="1.9" height="1" fill="#4c109e"/><rect x="742.8" y="217" width="1.9" height="1" fill="#54119e"/><rect x="742.5" y="218" width="1.9" height="1" fill="#5010a0"/><rect x="742.5" y="219" width="2.0" height="1" fill="#6a1795"/><rect x="742.4" y="220" width="1.9" height="1" fill="#45109b"/><rect x="743.3" y="221" width="1.9" height="1" fill="#421099"/><rect x="743.0" y="222" width="1.9" height="1" fill="#411099"/><rect x="743.4" y="223" width="1.9" height="1" fill="#3a1096"/><rect x="742.5" y="224" width="1.9" height="1" fill="#3b1096"/><rect x="742.7" y="225" width="1.9" height="1" fill="#3b1096"/><rect x="742.9" y="226" width="1.9" height="1" fill="#371094"/><rect x="742.9" y="227" width="1.9" height="1" fill="#1e1089"/><rect x="742.4" y="228" width="1.9" height="1" fill="#0d0d66"/><rect x="742.8" y="229" width="1.9" height="1" fill="#0b0b54"/><rect x="773.7" y="28" width="2.0" height="1" fill="#090941"/><rect x="773.5" y="29" width="2.0" height="1" fill="#09093e"/><rect x="773.6" y="30" width="2.0" height="1" fill="#0f0f7c"/><rect x="773.4" y="31" width="2.0" height="1" fill="#101080"/><rect x="773.8" y="32" width="2.0" height="1" fill="#1b1087"/><rect x="773.9" y="33" width="2.0" height="1" fill="#2a108e"/><rect x="773.7" y="34" width="2.0" height="1" fill="#351093"/><rect x="774.0" y="35" width="2.0" height="1" fill="#3a1096"/><rect x="774.4" y="36" width="2.0" height="1" fill="#3a1095"/><rect x="773.9" y="37" width="2.0" height="1" fill="#3c1097"/><rect x="774.2" y="38" width="2.0" height="1" fill="#371094"/><rect x="773.4" y="39" width="2.0" height="1" fill="#361094"/><rect x="774.1" y="40" width="2.0" height="1" fill="#371094"/><rect x="774.3" y="41" width="2.0" height="1" fill="#361094"/><rect x="773.4" y="42" width="2.0" height="1" fill="#3e1098"/><rect x="774.4" y="43" width="2.0" height="1" fill="#3d1097"/><rect x="773.5" y="44" width="2.0" height="1" fill="#3a1096"/><rect x="774.3" y="45" width="2.0" height="1" fill="#43109a"/><rect x="773.8" y="46" width="2.0" height="1" fill="#47109c"/><rect x="774.0" y="47" width="2.0" height="1" fill="#42109a"/><rect x="774.5" y="48" width="2.0" height="1" fill="#49109d"/><rect x="774.3" y="49" width="2.0" height="1" fill="#421099"/><rect x="774.1" y="50" width="2.0" height="1" fill="#411099"/><rect x="773.6" y="51" width="2.0" height="1" fill="#3e1097"/><rect x="773.6" y="52" width="2.0" height="1" fill="#47109c"/><rect x="773.7" y="53" width="2.0" height="1" fill="#4b109d"/><rect x="773.9" y="54" width="2.0" height="1" fill="#46109b"/><rect x="773.9" y="55" width="2.0" height="1" fill="#44109a"/><rect x="774.8" y="56" width="2.0" height="1" fill="#4e109f"/><rect x="774.0" y="57" width="2.0" height="1" fill="#401098"/><rect x="773.6" y="58" width="2.0" height="1" fill="#47109c"/><rect x="773.6" y="59" width="2.0" height="1" fill="#4b109d"/><rect x="774.3" y="60" width="2.0" height="1" fill="#49109d"/><rect x="774.0" y="61" width="2.0" height="1" fill="#3d1097"/><rect x="773.6" y="62" width="2.0" height="1" fill="#4d109f"/><rect x="774.0" y="63" width="2.0" height="1" fill="#4f109f"/><rect x="774.2" y="64" width="2.0" height="1" fill="#4a109d"/><rect x="774.1" y="65" width="2.0" height="1" fill="#44109a"/><rect x="773.6" y="66" width="2.0" height="1" fill="#4c109e"/><rect x="773.8" y="67" width="2.0" height="1" fill="#4d109e"/><rect x="773.4" y="68" width="2.0" height="1" fill="#57129d"/><rect x="773.7" y="69" width="2.0" height="1" fill="#4e109f"/><rect x="773.5" y="70" width="2.0" height="1" fill="#621598"/><rect x="773.3" y="71" width="2.0" height="1" fill="#631598"/><rect x="773.8" y="72" width="2.0" height="1" fill="#621598"/><rect x="773.6" y="73" width="2.1" height="1" fill="#6a1795"/><rect x="773.4" y="74" width="2.0" height="1" fill="#56119e"/><rect x="773.8" y="75" width="2.3" height="1" fill="#841d8a"/><rect x="774.1" y="76" width="2.2" height="1" fill="#721892"/><rect x="773.5" y="77" width="2.2" height="1" fill="#7b1b8e"/><rect x="774.1" y="78" width="2.3" height="1" fill="#7c1b8d"/><rect x="773.2" y="79" width="2.7" height="1" fill="#aa277a"/><rect x="773.9" y="80" width="2.6" height="1" fill="#9d2380"/><rect x="772.7" y="81" width="2.9" height="1" fill="#b8326d"/><rect x="773.7" y="82" width="2.7" height="1" fill="#ab277a"/><rect x="773.7" y="83" width="2.6" height="1" fill="#9f247f"/><rect x="773.6" y="84" width="2.9" height="1" fill="#b8326d"/><rect x="773.6" y="85" width="2.9" height="1" fill="#b6306f"/><rect x="773.6" y="86" width="2.9" height="1" fill="#bc3768"/><rect x="773.2" y="87" width="3.0" height="1" fill="#c4415c"/><rect x="773.9" y="88" width="2.9" height="1" fill="#b8316e"/><rect x="773.5" y="89" width="3.2" height="1" fill="#d0504c"/><rect x="773.3" y="90" width="3.0" height="1" fill="#c13e60"/><rect x="773.4" y="91" width="3.3" height="1" fill="#d85a41"/><rect x="773.4" y="92" width="3.0" height="1" fill="#c33f5e"/><rect x="773.2" y="93" width="3.2" height="1" fill="#cd4d50"/><rect x="773.7" y="94" width="3.1" height="1" fill="#c5425b"/><rect x="773.2" y="95" width="3.3" height="1" fill="#d55646"/><rect x="773.2" y="96" width="3.0" height="1" fill="#c23f5f"/><rect x="773.5" y="97" width="3.2" height="1" fill="#d25349"/><rect x="773.6" y="98" width="3.2" height="1" fill="#d0504b"/><rect x="773.0" y="99" width="3.3" height="1" fill="#d75843"/><rect x="773.0" y="100" width="3.0" height="1" fill="#bd3966"/><rect x="773.3" y="101" width="3.1" height="1" fill="#cb4953"/><rect x="773.6" y="102" width="3.4" height="1" fill="#dd603a"/><rect x="772.9" y="103" width="3.3" height="1" fill="#db5e3c"/><rect x="773.1" y="104" width="3.7" height="1" fill="#f17c20"/><rect x="773.1" y="105" width="3.4" height="1" fill="#dc5f3b"/><rect x="773.4" y="106" width="3.2" height="1" fill="#d45547"/><rect x="773.6" y="107" width="3.5" height="1" fill="#e56a2f"/><rect x="773.3" y="108" width="3.6" height="1" fill="#ed7524"/><rect x="773.0" y="109" width="3.6" height="1" fill="#f07820"/><rect x="773.1" y="110" width="3.4" height="1" fill="#e26733"/><rect x="773.2" y="111" width="3.4" height="1" fill="#dc5e3c"/><rect x="773.3" y="112" width="3.5" height="1" fill="#e56a30"/><rect x="772.6" y="113" width="3.5" height="1" fill="#e86e2b"/><rect x="773.5" y="114" width="3.5" height="1" fill="#e97029"/><rect x="773.0" y="115" width="3.3" height="1" fill="#d95b40"/><rect x="772.7" y="116" width="3.5" height="1" fill="#eb7127"/><rect x="773.2" y="117" width="3.5" height="1" fill="#e66c2e"/><rect x="773.3" y="118" width="3.4" height="1" fill="#e06436"/><rect x="772.7" y="119" width="3.6" height="1" fill="#f07820"/><rect x="773.4" y="120" width="3.6" height="1" fill="#ed7523"/><rect x="773.2" y="121" width="3.6" height="1" fill="#ec7325"/><rect x="773.0" y="122" width="3.7" height="1" fill="#f17e20"/><rect x="773.1" y="123" width="3.7" height="1" fill="#f28420"/><rect x="773.3" y="124" width="3.5" height="1" fill="#e76d2c"/><rect x="773.3" y="125" width="3.7" height="1" fill="#f28420"/><rect x="773.2" y="126" width="3.6" height="1" fill="#ec7226"/><rect x="773.1" y="127" width="3.8" height="1" fill="#f38d20"/><rect x="773.4" y="128" width="3.8" height="1" fill="#f38b20"/><rect x="773.3" y="129" width="3.7" height="1" fill="#f17d20"/><rect x="773.4" y="130" width="3.6" height="1" fill="#f07a20"/><rect x="772.9" y="131" width="3.7" height="1" fill="#f17e20"/><rect x="773.0" y="132" width="3.7" height="1" fill="#f18020"/><rect x="773.2" y="133" width="3.7" height="1" fill="#f28620"/><rect x="772.9" y="134" width="3.6" height="1" fill="#ec7425"/><rect x="773.2" y="135" width="3.8" height="1" fill="#f38820"/><rect x="773.8" y="136" width="3.7" height="1" fill="#f28520"/><rect x="772.9" y="137" width="3.9" height="1" fill="#f5931f"/><rect x="773.4" y="138" width="3.8" height="1" fill="#f48f1f"/><rect x="772.5" y="139" width="3.8" height="1" fill="#f38c20"/><rect x="773.0" y="140" width="3.8" height="1" fill="#f38920"/><rect x="772.3" y="141" width="4.0" height="1" fill="#f7a41f"/><rect x="772.9" y="142" width="4.0" height="1" fill="#f69e1f"/><rect x="772.9" y="143" width="3.9" height="1" fill="#f5971f"/><rect x="773.3" y="144" width="3.8" height="1" fill="#f48e20"/><rect x="773.3" y="145" width="3.8" height="1" fill="#f48e20"/><rect x="772.9" y="146" width="3.8" height="1" fill="#f38d20"/><rect x="772.8" y="147" width="3.8" height="1" fill="#f38c20"/><rect x="773.4" y="148" width="3.8" height="1" fill="#f48e20"/><rect x="772.5" y="149" width="3.7" height="1" fill="#f28220"/><rect x="773.5" y="150" width="3.9" height="1" fill="#f4921f"/><rect x="773.3" y="151" width="4.1" height="1" fill="#f8a61f"/><rect x="772.6" y="152" width="4.1" height="1" fill="#f9b01f"/><rect x="772.1" y="153" width="4.1" height="1" fill="#f8a81f"/><rect x="773.1" y="154" width="4.0" height="1" fill="#f8a61f"/><rect x="772.3" y="155" width="4.0" height="1" fill="#f7a01f"/><rect x="772.9" y="156" width="4.1" height="1" fill="#f8aa1f"/><rect x="773.5" y="157" width="4.5" height="1" fill="#ffd11e"/><rect x="772.2" y="158" width="4.5" height="1" fill="#ffd735"/><rect x="772.9" y="159" width="4.2" height="1" fill="#fab21f"/><rect x="772.1" y="160" width="4.6" height="1" fill="#ffdb4c"/><rect x="772.5" y="161" width="4.5" height="1" fill="#ffd42a"/><rect x="772.5" y="162" width="4.6" height="1" fill="#ffdb4d"/><rect x="772.9" y="163" width="4.8" height="1" fill="#ffe26e"/><rect x="772.8" y="164" width="4.8" height="1" fill="#ffe371"/><rect x="772.1" y="165" width="5.1" height="1" fill="#fff2c0"/><rect x="772.7" y="166" width="4.7" height="1" fill="#ffde5c"/><rect x="772.5" y="167" width="5.0" height="1" fill="#fff1b7"/><rect x="772.4" y="168" width="4.9" height="1" fill="#ffeb9c"/><rect x="772.3" y="169" width="4.9" height="1" fill="#ffea94"/><rect x="772.6" y="170" width="4.9" height="1" fill="#ffe88a"/><rect x="772.9" y="171" width="4.8" height="1" fill="#ffe57f"/><rect x="772.3" y="172" width="4.9" height="1" fill="#ffe992"/><rect x="772.0" y="173" width="4.9" height="1" fill="#ffe88a"/><rect x="773.3" y="174" width="4.9" height="1" fill="#ffe88b"/><rect x="772.7" y="175" width="4.8" height="1" fill="#ffe47a"/><rect x="772.8" y="176" width="4.7" height="1" fill="#ffe168"/><rect x="772.8" y="177" width="4.7" height="1" fill="#ffdd56"/><rect x="772.5" y="178" width="4.7" height="1" fill="#ffde59"/><rect x="772.7" y="179" width="4.4" height="1" fill="#feca1e"/><rect x="773.6" y="180" width="3.8" height="1" fill="#f48d20"/><rect x="772.6" y="181" width="3.7" height="1" fill="#f18120"/><rect x="773.2" y="182" width="3.5" height="1" fill="#e56a2f"/><rect x="773.6" y="183" width="3.0" height="1" fill="#c33f5e"/><rect x="772.8" y="184" width="2.6" height="1" fill="#992282"/><rect x="773.9" y="185" width="2.3" height="1" fill="#801c8c"/><rect x="773.5" y="186" width="2.4" height="1" fill="#871e89"/><rect x="774.0" y="187" width="2.2" height="1" fill="#721892"/><rect x="773.8" y="188" width="2.1" height="1" fill="#6b1795"/><rect x="773.6" y="189" width="2.1" height="1" fill="#6b1795"/><rect x="773.6" y="190" width="2.2" height="1" fill="#751991"/><rect x="773.8" y="191" width="2.0" height="1" fill="#5c139b"/><rect x="774.1" y="192" width="2.0" height="1" fill="#4e109f"/><rect x="774.4" y="193" width="2.0" height="1" fill="#5a139c"/><rect x="773.8" y="194" width="2.0" height="1" fill="#4f10a0"/><rect x="773.5" y="195" width="2.0" height="1" fill="#4e109f"/><rect x="774.1" y="196" width="2.0" height="1" fill="#45109b"/><rect x="773.6" y="197" width="2.0" height="1" fill="#45109b"/><rect x="774.4" y="198" width="2.0" height="1" fill="#341093"/><rect x="773.4" y="199" width="2.0" height="1" fill="#371094"/><rect x="773.9" y="200" width="2.0" height="1" fill="#2f1091"/><rect x="773.9" y="201" width="2.0" height="1" fill="#27108d"/><rect x="774.0" y="202" width="2.0" height="1" fill="#101082"/><rect x="774.2" y="203" width="2.0" height="1" fill="#0b0b51"/><rect x="782.0" y="10" width="2.2" height="1" fill="#09093b"/><rect x="781.7" y="11" width="2.2" height="1" fill="#0c0c60"/><rect x="781.7" y="12" width="2.2" height="1" fill="#181086"/><rect x="781.7" y="13" width="2.2" height="1" fill="#29108e"/><rect x="781.8" y="14" width="2.2" height="1" fill="#3d1097"/><rect x="781.9" y="15" width="2.2" height="1" fill="#45109b"/><rect x="782.4" y="16" width="2.2" height="1" fill="#3f1098"/><rect x="781.6" y="17" width="2.2" height="1" fill="#2d1090"/><rect x="781.9" y="18" width="2.2" height="1" fill="#2f1090"/><rect x="782.1" y="19" width="2.2" height="1" fill="#44109a"/><rect x="781.7" y="20" width="2.2" height="1" fill="#43109a"/><rect x="782.0" y="21" width="2.2" height="1" fill="#4e109f"/><rect x="781.6" y="22" width="2.2" height="1" fill="#411099"/><rect x="781.8" y="23" width="2.2" height="1" fill="#46109c"/><rect x="782.0" y="24" width="2.2" height="1" fill="#421099"/><rect x="781.7" y="25" width="2.2" height="1" fill="#47109c"/><rect x="781.6" y="26" width="2.2" height="1" fill="#4e109f"/><rect x="782.0" y="27" width="2.2" height="1" fill="#3f1098"/><rect x="781.9" y="28" width="2.2" height="1" fill="#48109c"/><rect x="781.9" y="29" width="2.2" height="1" fill="#45109b"/><rect x="781.4" y="30" width="2.2" height="1" fill="#45109b"/><rect x="781.6" y="31" width="2.2" height="1" fill="#4e109f"/><rect x="782.1" y="32" width="2.2" height="1" fill="#49109d"/><rect x="782.7" y="33" width="2.2" height="1" fill="#4b109e"/><rect x="781.7" y="34" width="2.2" height="1" fill="#43109a"/><rect x="782.3" y="35" width="2.2" height="1" fill="#4d109f"/><rect x="781.5" y="36" width="2.2" height="1" fill="#4c109e"/><rect x="781.6" y="37" width="2.2" height="1" fill="#5a129c"/><rect x="782.2" y="38" width="2.2" height="1" fill="#4d109f"/><rect x="781.8" y="39" width="2.2" height="1" fill="#4b109e"/><rect x="781.8" y="40" width="2.2" height="1" fill="#56129d"/><rect x="781.6" y="41" width="2.2" height="1" fill="#55119e"/><rect x="781.6" y="42" width="2.2" height="1" fill="#52109f"/><rect x="782.4" y="43" width="2.2" height="1" fill="#49109c"/><rect x="782.2" y="44" width="2.2" height="1" fill="#5c139b"/><rect x="781.9" y="45" width="2.2" height="1" fill="#4e109f"/><rect x="781.5" y="46" width="2.2" height="1" fill="#57129d"/><rect x="781.7" y="47" width="2.2" height="1" fill="#611499"/><rect x="781.4" y="48" width="2.2" height="1" fill="#5a129c"/><rect x="782.1" y="49" width="2.3" height="1" fill="#6a1695"/><rect x="781.6" y="50" width="2.2" height="1" fill="#641598"/><rect x="782.3" y="51" width="2.2" height="1" fill="#5a139c"/><rect x="782.0" y="52" width="2.2" height="1" fill="#5f149a"/><rect x="781.5" y="53" width="2.2" height="1" fill="#661597"/><rect x="781.2" y="54" width="2.5" height="1" fill="#781a8f"/><rect x="781.8" y="55" width="2.3" height="1" fill="#6a1695"/><rect x="782.0" y="56" width="2.2" height="1" fill="#55119e"/><rect x="781.8" y="57" width="2.4" height="1" fill="#701893"/><rect x="782.0" y="58" width="2.2" height="1" fill="#621499"/><rect x="781.8" y="59" width="2.5" height="1" fill="#7a1b8e"/><rect x="781.9" y="60" width="2.6" height="1" fill="#831d8b"/><rect x="782.2" y="61" width="2.5" height="1" fill="#791a8f"/><rect x="781.7" y="62" width="2.3" height="1" fill="#6a1695"/><rect x="781.9" y="63" width="2.5" height="1" fill="#791a8f"/><rect x="782.0" y="64" width="2.7" height="1" fill="#871e89"/><rect x="781.8" y="65" width="2.5" height="1" fill="#781a8f"/><rect x="781.7" y="66" width="2.4" height="1" fill="#741991"/><rect x="782.1" y="67" width="2.4" height="1" fill="#741991"/><rect x="781.7" y="68" width="2.5" height="1" fill="#751990"/><rect x="781.6" y="69" width="2.6" height="1" fill="#7e1c8d"/><rect x="781.1" y="70" width="2.5" height="1" fill="#7b1b8e"/><rect x="781.6" y="71" width="2.7" height="1" fill="#841d8a"/><rect x="781.8" y="72" width="2.6" height="1" fill="#831d8b"/><rect x="782.6" y="73" width="2.3" height="1" fill="#6d1794"/><rect x="781.7" y="74" width="2.7" height="1" fill="#861e89"/><rect x="782.0" y="75" width="2.4" height="1" fill="#711892"/><rect x="781.5" y="76" width="2.8" height="1" fill="#8d1f87"/><rect x="782.0" y="77" width="2.8" height="1" fill="#8d1f87"/><rect x="781.4" y="78" width="2.7" height="1" fill="#871e89"/><rect x="781.6" y="79" width="3.0" height="1" fill="#9d2380"/><rect x="782.3" y="80" width="2.8" height="1" fill="#8d1f87"/><rect x="781.6" y="81" width="2.8" height="1" fill="#922184"/><rect x="781.5" y="82" width="2.9" height="1" fill="#952183"/><rect x="781.6" y="83" width="2.9" height="1" fill="#962283"/><rect x="781.6" y="84" width="2.8" height="1" fill="#8d1f87"/><rect x="781.7" y="85" width="2.9" height="1" fill="#9a2381"/><rect x="781.8" y="86" width="3.0" height="1" fill="#9f247f"/><rect x="781.7" y="87" width="3.0" height="1" fill="#9c2380"/><rect x="781.5" y="88" width="2.9" height="1" fill="#962283"/><rect x="780.9" y="89" width="3.1" height="1" fill="#a9267b"/><rect x="782.5" y="90" width="3.1" height="1" fill="#a2257e"/><rect x="782.1" y="91" width="2.7" height="1" fill="#891e88"/><rect x="781.8" y="92" width="2.8" height="1" fill="#8c1f87"/><rect x="781.8" y="93" width="3.3" height="1" fill="#b42d72"/><rect x="781.2" y="94" width="2.9" height="1" fill="#992282"/><rect x="781.8" y="95" width="2.9" height="1" fill="#942184"/><rect x="781.5" y="96" width="3.1" height="1" fill="#a5257d"/><rect x="781.5" y="97" width="3.3" height="1" fill="#b12976"/><rect x="781.4" y="98" width="3.4" height="1" fill="#b7316e"/><rect x="781.9" y="99" width="3.1" height="1" fill="#a5257d"/><rect x="781.9" y="100" width="3.0" height="1" fill="#9c2380"/><rect x="781.3" y="101" width="3.4" height="1" fill="#b8326d"/><rect x="781.2" y="102" width="3.5" height="1" fill="#bc3767"/><rect x="781.1" y="103" width="3.6" height="1" fill="#c4415c"/><rect x="781.5" y="104" width="3.5" height="1" fill="#be3a65"/><rect x="781.6" y="105" width="3.6" height="1" fill="#c64459"/><rect x="780.9" y="106" width="3.8" height="1" fill="#ce4e4f"/><rect x="781.3" y="107" width="3.9" height="1" fill="#d75942"/><rect x="781.0" y="108" width="3.8" height="1" fill="#ce4e4e"/><rect x="780.6" y="109" width="4.2" height="1" fill="#e76d2c"/><rect x="781.1" y="110" width="3.9" height="1" fill="#d65843"/><rect x="780.3" y="111" width="3.9" height="1" fill="#d55645"/><rect x="781.2" y="112" width="3.8" height="1" fill="#d35348"/><rect x="781.1" y="113" width="4.3" height="1" fill="#ea7029"/><rect x="780.5" y="114" width="4.2" height="1" fill="#e97029"/><rect x="781.2" y="115" width="4.3" height="1" fill="#ee7523"/><rect x="781.2" y="116" width="4.1" height="1" fill="#e36832"/><rect x="781.0" y="117" width="4.2" height="1" fill="#e86e2b"/><rect x="780.4" y="118" width="4.4" height="1" fill="#f07920"/><rect x="780.5" y="119" width="4.6" height="1" fill="#f38a20"/><rect x="780.7" y="120" width="4.4" height="1" fill="#f07920"/><rect x="780.9" y="121" width="4.5" height="1" fill="#f28220"/><rect x="781.2" y="122" width="4.5" height="1" fill="#f18020"/><rect x="780.6" y="123" width="4.5" height="1" fill="#f28620"/><rect x="780.9" y="124" width="4.1" height="1" fill="#df6238"/><rect x="780.5" y="125" width="4.5" height="1" fill="#f28420"/><rect x="781.0" y="126" width="4.4" height="1" fill="#f17f20"/><rect x="781.2" y="127" width="4.8" height="1" fill="#f69a1f"/><rect x="780.4" y="128" width="4.8" height="1" fill="#f69e1f"/><rect x="780.2" y="129" width="4.7" height="1" fill="#f5961f"/><rect x="780.7" y="130" width="4.8" height="1" fill="#f69e1f"/><rect x="780.7" y="131" width="4.7" height="1" fill="#f4901f"/><rect x="780.4" y="132" width="4.7" height="1" fill="#f5971f"/><rect x="781.4" y="133" width="5.0" height="1" fill="#f9ae1f"/><rect x="780.8" y="134" width="5.0" height="1" fill="#f8aa1f"/><rect x="780.5" y="135" width="4.9" height="1" fill="#f7a51f"/><rect x="780.3" y="136" width="5.3" height="1" fill="#fcc11e"/><rect x="780.5" y="137" width="5.0" height="1" fill="#f9ad1f"/><rect x="780.5" y="138" width="5.1" height="1" fill="#fab21f"/><rect x="780.1" y="139" width="5.1" height="1" fill="#fab51f"/><rect x="780.9" y="140" width="5.0" height="1" fill="#f9af1f"/><rect x="780.3" y="141" width="4.9" height="1" fill="#f8a51f"/><rect x="780.5" y="142" width="5.3" height="1" fill="#fdc71e"/><rect x="779.7" y="143" width="5.3" height="1" fill="#fdc61e"/><rect x="780.0" y="144" width="5.2" height="1" fill="#fbbd1e"/><rect x="780.6" y="145" width="5.0" height="1" fill="#f9ac1f"/><rect x="779.8" y="146" width="5.4" height="1" fill="#ffcf1e"/><rect x="780.3" y="147" width="5.1" height="1" fill="#fab51f"/><rect x="780.0" y="148" width="5.3" height="1" fill="#fdc41e"/><rect x="780.3" y="149" width="5.7" height="1" fill="#ffda48"/><rect x="780.2" y="150" width="5.3" height="1" fill="#fcc11e"/><rect x="780.8" y="151" width="5.7" height="1" fill="#ffdb4c"/><rect x="780.5" y="152" width="5.3" height="1" fill="#fcc01e"/><rect x="779.9" y="153" width="5.5" height="1" fill="#ffd52b"/><rect x="780.8" y="154" width="5.2" height="1" fill="#fcbf1e"/><rect x="780.3" y="155" width="5.2" height="1" fill="#fcbe1e"/><rect x="780.2" y="156" width="5.1" height="1" fill="#fab61f"/><rect x="780.0" y="157" width="5.5" height="1" fill="#ffd11e"/><rect x="780.2" y="158" width="5.1" height="1" fill="#fbb71f"/><rect x="780.2" y="159" width="5.6" height="1" fill="#ffd93f"/><rect x="780.4" y="160" width="5.3" height="1" fill="#fcc11e"/><rect x="780.3" y="161" width="5.4" height="1" fill="#fece1e"/><rect x="780.6" y="162" width="5.1" height="1" fill="#fab11f"/><rect x="780.6" y="163" width="5.3" height="1" fill="#fdc61e"/><rect x="780.7" y="164" width="5.2" height="1" fill="#fbb81f"/><rect x="779.8" y="165" width="5.3" height="1" fill="#fdc31e"/><rect x="780.1" y="166" width="5.6" height="1" fill="#ffd634"/><rect x="780.2" y="167" width="5.4" height="1" fill="#fecf1e"/><rect x="780.6" y="168" width="5.6" height="1" fill="#ffd52e"/><rect x="780.4" y="169" width="5.6" height="1" fill="#ffd52f"/><rect x="779.9" y="170" width="5.1" height="1" fill="#fab61f"/><rect x="780.0" y="171" width="5.4" height="1" fill="#fecd1e"/><rect x="780.3" y="172" width="5.5" height="1" fill="#ffd11e"/><rect x="780.1" y="173" width="5.2" height="1" fill="#fbb91f"/><rect x="780.1" y="174" width="5.2" height="1" fill="#fbbd1e"/><rect x="780.5" y="175" width="5.4" height="1" fill="#fec91e"/><rect x="779.9" y="176" width="5.6" height="1" fill="#ffd83b"/><rect x="780.8" y="177" width="5.3" height="1" fill="#fdc51e"/><rect x="780.3" y="178" width="5.6" height="1" fill="#ffd52d"/><rect x="780.2" y="179" width="5.0" height="1" fill="#f9ae1f"/><rect x="780.1" y="180" width="5.4" height="1" fill="#ffcf1e"/><rect x="780.2" y="181" width="5.7" height="1" fill="#ffdd53"/><rect x="779.9" y="182" width="5.5" height="1" fill="#ffd11e"/><rect x="780.2" y="183" width="5.3" height="1" fill="#fcc01e"/><rect x="780.3" y="184" width="5.3" height="1" fill="#fdc61e"/><rect x="780.3" y="185" width="5.5" height="1" fill="#ffd321"/><rect x="779.8" y="186" width="5.6" height="1" fill="#ffd736"/><rect x="780.3" y="187" width="5.5" height="1" fill="#ffd11e"/><rect x="780.1" y="188" width="5.7" height="1" fill="#ffdb4a"/><rect x="780.0" y="189" width="5.5" height="1" fill="#ffd322"/><rect x="780.4" y="190" width="5.5" height="1" fill="#ffd325"/><rect x="780.2" y="191" width="5.4" height="1" fill="#fdc81e"/><rect x="780.4" y="192" width="5.4" height="1" fill="#ffd01e"/><rect x="780.6" y="193" width="5.3" height="1" fill="#fcc11e"/><rect x="780.9" y="194" width="5.4" height="1" fill="#fecc1e"/><rect x="780.0" y="195" width="5.7" height="1" fill="#ffdb4a"/><rect x="781.1" y="196" width="5.4" height="1" fill="#fdc91e"/><rect x="780.4" y="197" width="5.6" height="1" fill="#ffd631"/><rect x="780.3" y="198" width="5.4" height="1" fill="#fecc1e"/><rect x="780.4" y="199" width="5.6" height="1" fill="#ffd737"/><rect x="780.7" y="200" width="5.3" height="1" fill="#fdc71e"/><rect x="780.0" y="201" width="5.5" height="1" fill="#ffd322"/><rect x="780.2" y="202" width="5.6" height="1" fill="#ffd633"/><rect x="780.1" y="203" width="5.5" height="1" fill="#ffd426"/><rect x="779.8" y="204" width="5.4" height="1" fill="#fece1e"/><rect x="779.8" y="205" width="5.4" height="1" fill="#fecc1e"/><rect x="779.6" y="206" width="5.3" height="1" fill="#fdc71e"/><rect x="780.6" y="207" width="5.3" height="1" fill="#fcc11e"/><rect x="780.7" y="208" width="5.3" height="1" fill="#fdc61e"/><rect x="780.9" y="209" width="5.1" height="1" fill="#f9b01f"/><rect x="779.9" y="210" width="5.5" height="1" fill="#ffd01e"/><rect x="780.3" y="211" width="5.0" height="1" fill="#f9af1f"/><rect x="780.5" y="212" width="5.1" height="1" fill="#fab71f"/><rect x="780.8" y="213" width="4.7" height="1" fill="#f5951f"/><rect x="780.2" y="214" width="5.0" height="1" fill="#f9af1f"/><rect x="780.3" y="215" width="5.2" height="1" fill="#fbbd1e"/><rect x="780.6" y="216" width="5.2" height="1" fill="#fbbd1e"/><rect x="780.9" y="217" width="5.0" height="1" fill="#f8a81f"/><rect x="780.3" y="218" width="5.1" height="1" fill="#fab41f"/><rect x="780.5" y="219" width="4.7" height="1" fill="#f4921f"/><rect x="780.4" y="220" width="5.0" height="1" fill="#f9ad1f"/><rect x="780.5" y="221" width="5.2" height="1" fill="#fbba1f"/><rect x="780.7" y="222" width="4.9" height="1" fill="#f7a31f"/><rect x="780.6" y="223" width="4.7" height="1" fill="#f4931f"/><rect x="779.9" y="224" width="4.7" height="1" fill="#f5931f"/><rect x="781.0" y="225" width="4.5" height="1" fill="#f28320"/><rect x="780.6" y="226" width="4.7" height="1" fill="#f4921f"/><rect x="780.6" y="227" width="4.5" height="1" fill="#f28220"/><rect x="780.6" y="228" width="4.8" height="1" fill="#f69d1f"/><rect x="781.2" y="229" width="4.6" height="1" fill="#f38a20"/><rect x="780.6" y="230" width="4.6" height="1" fill="#f48e20"/><rect x="780.1" y="231" width="4.8" height="1" fill="#f69b1f"/><rect x="780.3" y="232" width="4.7" height="1" fill="#f4911f"/><rect x="780.6" y="233" width="4.4" height="1" fill="#f17d20"/><rect x="780.8" y="234" width="4.5" height="1" fill="#f38720"/><rect x="780.8" y="235" width="4.5" height="1" fill="#f38720"/><rect x="781.2" y="236" width="4.7" height="1" fill="#f5931f"/><rect x="780.9" y="237" width="4.6" height="1" fill="#f38820"/><rect x="780.5" y="238" width="4.4" height="1" fill="#f07820"/><rect x="780.8" y="239" width="4.5" height="1" fill="#f28220"/><rect x="780.2" y="240" width="4.5" height="1" fill="#f28320"/><rect x="780.3" y="241" width="4.7" height="1" fill="#f5941f"/><rect x="781.2" y="242" width="4.2" height="1" fill="#e76d2c"/><rect x="780.9" y="243" width="3.9" height="1" fill="#d65744"/><rect x="780.7" y="244" width="3.7" height="1" fill="#cb4a53"/><rect x="781.2" y="245" width="3.6" height="1" fill="#c74558"/><rect x="780.9" y="246" width="3.9" height="1" fill="#d75942"/><rect x="781.4" y="247" width="4.0" height="1" fill="#dc5f3c"/><rect x="781.1" y="248" width="3.7" height="1" fill="#cb4a52"/><rect x="781.1" y="249" width="3.6" height="1" fill="#c4415c"/><rect x="781.2" y="250" width="3.8" height="1" fill="#ce4e4e"/><rect x="781.9" y="251" width="2.2" height="1" fill="#aa267b"/><rect x="781.7" y="252" width="2.4" height="1" fill="#ce4d4f"/><rect x="781.8" y="253" width="2.3" height="1" fill="#c23f5f"/><rect x="782.1" y="254" width="2.6" height="1" fill="#ec7226"/><rect x="782.0" y="255" width="1.8" height="1" fill="#651597"/><rect x="781.7" y="256" width="2.4" height="1" fill="#cd4c50"/><rect x="781.9" y="257" width="2.4" height="1" fill="#cf4f4d"/><rect x="781.8" y="258" width="2.3" height="1" fill="#c4415c"/><rect x="782.0" y="259" width="2.2" height="1" fill="#b6306f"/><rect x="781.8" y="260" width="1.8" height="1" fill="#55119e"/><rect x="782.6" y="261" width="1.8" height="1" fill="#6b1795"/><rect x="782.0" y="262" width="2.2" height="1" fill="#b12977"/><rect x="781.8" y="263" width="2.1" height="1" fill="#a7267c"/><rect x="782.3" y="264" width="1.9" height="1" fill="#731991"/><rect x="782.5" y="265" width="2.0" height="1" fill="#851d8a"/><rect x="782.0" y="266" width="2.1" height="1" fill="#a1247e"/><rect x="782.0" y="267" width="2.0" height="1" fill="#881e89"/><rect x="782.4" y="268" width="2.0" height="1" fill="#932184"/><rect x="781.3" y="269" width="2.7" height="1" fill="#f28220"/><rect x="782.2" y="270" width="2.1" height="1" fill="#9a2381"/><rect x="781.9" y="271" width="1.8" height="1" fill="#5a139c"/><rect x="781.3" y="272" width="1.9" height="1" fill="#711892"/><rect x="781.9" y="273" width="2.2" height="1" fill="#ac277a"/><rect x="782.0" y="274" width="2.0" height="1" fill="#831d8b"/><rect x="782.7" y="275" width="2.0" height="1" fill="#942184"/><rect x="782.2" y="276" width="2.0" height="1" fill="#8f2086"/><rect x="782.2" y="277" width="1.8" height="1" fill="#681696"/><rect x="782.0" y="278" width="1.9" height="1" fill="#721892"/><rect x="781.9" y="279" width="1.8" height="1" fill="#5110a0"/><rect x="782.2" y="280" width="2.1" height="1" fill="#992281"/><rect x="781.8" y="281" width="2.1" height="1" fill="#982282"/><rect x="781.2" y="282" width="2.0" height="1" fill="#8f2086"/><rect x="781.9" y="283" width="2.2" height="1" fill="#b02878"/><rect x="782.4" y="284" width="2.0" height="1" fill="#8b1f88"/><rect x="782.4" y="285" width="1.8" height="1" fill="#641598"/><rect x="782.3" y="286" width="1.8" height="1" fill="#621499"/><rect x="782.2" y="287" width="1.8" height="1" fill="#631598"/><rect x="781.7" y="288" width="2.3" height="1" fill="#c13d61"/><rect x="782.0" y="289" width="1.8" height="1" fill="#55119e"/><rect x="782.8" y="290" width="2.0" height="1" fill="#851d8a"/><rect x="781.5" y="291" width="1.8" height="1" fill="#55119e"/><rect x="781.6" y="292" width="1.8" height="1" fill="#5010a0"/><rect x="782.1" y="293" width="1.8" height="1" fill="#54119f"/><rect x="781.9" y="294" width="1.8" height="1" fill="#46109b"/><rect x="782.2" y="295" width="1.8" height="1" fill="#2b108f"/><rect x="782.4" y="296" width="1.8" height="1" fill="#4b109d"/><rect x="781.7" y="297" width="2.1" height="1" fill="#a6267c"/><rect x="782.1" y="298" width="1.8" height="1" fill="#58129d"/><rect x="781.5" y="299" width="2.0" height="1" fill="#942184"/><rect x="782.7" y="300" width="1.8" height="1" fill="#661597"/><rect x="782.2" y="301" width="1.8" height="1" fill="#651597"/><rect x="781.7" y="302" width="1.8" height="1" fill="#691695"/><rect x="782.0" y="303" width="2.1" height="1" fill="#9d2380"/><rect x="782.3" y="304" width="1.9" height="1" fill="#721892"/><rect x="781.4" y="305" width="2.0" height="1" fill="#932184"/><rect x="781.9" y="306" width="2.0" height="1" fill="#831d8b"/><rect x="781.9" y="307" width="1.9" height="1" fill="#711892"/><rect x="782.4" y="308" width="1.8" height="1" fill="#44109a"/><rect x="782.0" y="309" width="1.8" height="1" fill="#671696"/><rect x="782.1" y="310" width="1.8" height="1" fill="#58129d"/><rect x="781.4" y="311" width="1.8" height="1" fill="#671697"/><rect x="782.0" y="312" width="1.8" height="1" fill="#43109a"/><rect x="782.4" y="313" width="2.0" height="1" fill="#902085"/><rect x="782.7" y="314" width="1.8" height="1" fill="#411099"/><rect x="782.2" y="315" width="1.9" height="1" fill="#6c1794"/><rect x="781.9" y="316" width="1.8" height="1" fill="#4d109f"/><rect x="781.8" y="317" width="2.2" height="1" fill="#b42c73"/><rect x="782.5" y="318" width="1.8" height="1" fill="#611499"/><rect x="781.4" y="319" width="2.3" height="1" fill="#bf3b63"/><rect x="782.1" y="320" width="1.8" height="1" fill="#5c139b"/><rect x="782.6" y="321" width="2.3" height="1" fill="#c33f5e"/><rect x="782.2" y="322" width="1.8" height="1" fill="#641598"/><rect x="782.3" y="323" width="2.1" height="1" fill="#952183"/><rect x="782.4" y="324" width="1.8" height="1" fill="#55119e"/><rect x="781.3" y="325" width="1.8" height="1" fill="#48109c"/><rect x="782.2" y="326" width="1.8" height="1" fill="#341093"/><rect x="781.3" y="327" width="2.0" height="1" fill="#902085"/><rect x="782.1" y="328" width="1.8" height="1" fill="#27108d"/><rect x="782.3" y="329" width="1.8" height="1" fill="#0c0c5b"/><rect x="781.1" y="330" width="2.1" height="1" fill="#9d2380"/><rect x="782.0" y="331" width="2.0" height="1" fill="#8f2086"/><rect x="782.0" y="332" width="2.2" height="1" fill="#b22a76"/><rect x="782.2" y="333" width="1.8" height="1" fill="#58129d"/><rect x="782.1" y="334" width="2.1" height="1" fill="#982282"/><rect x="781.7" y="335" width="1.8" height="1" fill="#671696"/><rect x="782.1" y="336" width="1.9" height="1" fill="#7f1c8c"/><rect x="781.9" y="337" width="2.3" height="1" fill="#c33f5e"/><rect x="782.0" y="338" width="1.8" height="1" fill="#601499"/><rect x="782.0" y="339" width="2.0" height="1" fill="#8c1f87"/><rect x="782.6" y="340" width="1.8" height="1" fill="#46109c"/><rect x="781.8" y="341" width="2.3" height="1" fill="#c03c62"/><rect x="782.5" y="342" width="1.8" height="1" fill="#3d1097"/><rect x="783.0" y="343" width="1.8" height="1" fill="#42109a"/><rect x="782.4" y="344" width="1.8" height="1" fill="#5c139b"/><rect x="782.1" y="345" width="1.8" height="1" fill="#351093"/><rect x="782.1" y="346" width="2.1" height="1" fill="#9e247f"/><rect x="782.9" y="347" width="1.8" height="1" fill="#4b109d"/><rect x="782.0" y="348" width="2.0" height="1" fill="#8b1f88"/><rect x="782.1" y="349" width="1.8" height="1" fill="#48109c"/><rect x="781.7" y="350" width="2.2" height="1" fill="#ab277a"/><rect x="781.9" y="351" width="1.8" height="1" fill="#641598"/><rect x="781.9" y="352" width="2.1" height="1" fill="#a6257c"/><rect x="782.2" y="353" width="2.0" height="1" fill="#902085"/><rect x="782.4" y="354" width="1.8" height="1" fill="#48109c"/><rect x="781.7" y="355" width="2.0" height="1" fill="#942184"/><rect x="783.1" y="356" width="2.0" height="1" fill="#871e89"/><rect x="782.3" y="357" width="1.8" height="1" fill="#5010a0"/><rect x="782.3" y="358" width="1.8" height="1" fill="#321092"/><rect x="782.4" y="359" width="1.8" height="1" fill="#47109c"/><rect x="781.8" y="360" width="1.8" height="1" fill="#5d139b"/><rect x="781.9" y="361" width="2.1" height="1" fill="#9b2381"/><rect x="782.2" y="362" width="1.8" height="1" fill="#3b1096"/><rect x="782.3" y="363" width="1.8" height="1" fill="#3c1097"/><rect x="782.0" y="364" width="1.8" height="1" fill="#5b139b"/><rect x="781.7" y="365" width="2.0" height="1" fill="#821d8b"/><rect x="781.4" y="366" width="2.0" height="1" fill="#932184"/><rect x="782.0" y="367" width="2.2" height="1" fill="#b42d73"/><rect x="781.9" y="368" width="1.8" height="1" fill="#4f10a0"/><rect x="782.0" y="369" width="1.9" height="1" fill="#7b1b8e"/><rect x="782.5" y="370" width="1.8" height="1" fill="#53119f"/><rect x="782.1" y="371" width="1.8" height="1" fill="#4a109d"/><rect x="782.4" y="372" width="1.9" height="1" fill="#741991"/><rect x="782.2" y="373" width="1.8" height="1" fill="#54119e"/><rect x="782.4" y="374" width="1.8" height="1" fill="#5e149a"/><rect x="781.7" y="375" width="2.2" height="1" fill="#ad2779"/><rect x="782.1" y="376" width="1.8" height="1" fill="#54119e"/><rect x="782.5" y="377" width="1.9" height="1" fill="#7b1b8e"/><rect x="782.2" y="378" width="1.8" height="1" fill="#59129c"/><rect x="781.6" y="379" width="2.1" height="1" fill="#982282"/><rect x="782.0" y="380" width="1.8" height="1" fill="#3f1098"/><rect x="782.2" y="381" width="1.8" height="1" fill="#59129c"/><rect x="782.7" y="382" width="1.8" height="1" fill="#46109b"/><rect x="782.1" y="383" width="1.8" height="1" fill="#401099"/><rect x="782.3" y="384" width="2.0" height="1" fill="#942184"/><rect x="782.3" y="385" width="1.8" height="1" fill="#57129d"/><rect x="782.1" y="386" width="2.0" height="1" fill="#801c8c"/><rect x="781.8" y="387" width="1.9" height="1" fill="#721992"/><rect x="781.6" y="388" width="1.8" height="1" fill="#4f109f"/><rect x="781.8" y="389" width="1.8" height="1" fill="#301091"/><rect x="781.9" y="390" width="2.0" height="1" fill="#841d8a"/><rect x="781.9" y="391" width="1.8" height="1" fill="#4d109f"/><rect x="782.1" y="392" width="1.8" height="1" fill="#3c1097"/><rect x="782.4" y="393" width="1.8" height="1" fill="#26108d"/><rect x="782.3" y="394" width="1.8" height="1" fill="#0f0f7b"/><rect x="781.7" y="395" width="2.2" height="1" fill="#b7306f"/><rect x="781.7" y="396" width="1.8" height="1" fill="#381095"/><rect x="781.6" y="397" width="1.8" height="1" fill="#341093"/><rect x="782.0" y="398" width="1.8" height="1" fill="#44109b"/><rect x="781.7" y="399" width="1.8" height="1" fill="#0c0c5a"/><rect x="782.0" y="400" width="1.8" height="1" fill="#0d0d63"/><rect x="782.0" y="401" width="1.8" height="1" fill="#45109b"/><rect x="781.9" y="402" width="1.8" height="1" fill="#0f0f76"/><rect x="781.4" y="403" width="1.8" height="1" fill="#2f1091"/><rect x="782.2" y="404" width="1.8" height="1" fill="#3c1097"/><rect x="782.5" y="405" width="1.8" height="1" fill="#080832"/><rect x="782.1" y="406" width="1.8" height="1" fill="#0c0c5c"/><rect x="781.6" y="407" width="1.8" height="1" fill="#4d109e"/><rect x="781.8" y="408" width="1.8" height="1" fill="#0b0b50"/><rect x="782.1" y="409" width="1.8" height="1" fill="#0f0f77"/><rect x="782.0" y="410" width="1.8" height="1" fill="#1a1087"/><rect x="782.1" y="411" width="1.8" height="1" fill="#1b1087"/><rect x="782.2" y="412" width="1.8" height="1" fill="#101081"/><rect x="781.8" y="413" width="1.8" height="1" fill="#29108e"/><rect x="781.7" y="414" width="1.8" height="1" fill="#6a1795"/><rect x="781.9" y="415" width="1.8" height="1" fill="#3e1098"/><rect x="782.3" y="416" width="1.8" height="1" fill="#331092"/><rect x="782.5" y="417" width="1.8" height="1" fill="#411099"/><rect x="783.0" y="418" width="1.8" height="1" fill="#101081"/><rect x="781.9" y="419" width="1.8" height="1" fill="#341093"/><rect x="782.8" y="420" width="1.8" height="1" fill="#0d0d66"/><rect x="782.1" y="421" width="1.8" height="1" fill="#601499"/><rect x="782.5" y="422" width="1.8" height="1" fill="#3e1098"/><rect x="782.0" y="423" width="1.8" height="1" fill="#2b108f"/><rect x="782.4" y="424" width="1.8" height="1" fill="#27108d"/><rect x="781.7" y="425" width="1.8" height="1" fill="#28108d"/><rect x="781.6" y="426" width="1.8" height="1" fill="#3e1097"/><rect x="782.5" y="427" width="1.8" height="1" fill="#111083"/><rect x="782.2" y="428" width="1.8" height="1" fill="#2e1090"/><rect x="782.4" y="429" width="1.8" height="1" fill="#2a108e"/><rect x="781.5" y="430" width="1.8" height="1" fill="#26108c"/><rect x="781.2" y="431" width="1.8" height="1" fill="#2e1090"/><rect x="782.6" y="432" width="1.8" height="1" fill="#090940"/><rect x="782.0" y="433" width="1.8" height="1" fill="#45109b"/><rect x="782.1" y="434" width="1.8" height="1" fill="#24108b"/><rect x="781.9" y="435" width="1.8" height="1" fill="#44109a"/><rect x="781.9" y="436" width="1.8" height="1" fill="#0f0f7b"/><rect x="782.2" y="437" width="1.8" height="1" fill="#2a108e"/><rect x="782.4" y="438" width="1.8" height="1" fill="#1a1087"/><rect x="782.1" y="439" width="1.8" height="1" fill="#0e0e73"/><rect x="781.8" y="440" width="1.8" height="1" fill="#111082"/><rect x="782.0" y="441" width="1.8" height="1" fill="#49109d"/><rect x="782.1" y="442" width="1.8" height="1" fill="#0e0e73"/><rect x="782.3" y="443" width="1.8" height="1" fill="#0e0e73"/><rect x="782.4" y="444" width="1.8" height="1" fill="#3e1097"/><rect x="782.1" y="445" width="1.8" height="1" fill="#0e0e6f"/><rect x="782.1" y="446" width="1.8" height="1" fill="#641598"/><rect x="782.6" y="447" width="1.8" height="1" fill="#49109d"/><rect x="782.5" y="448" width="1.8" height="1" fill="#0c0c5e"/><rect x="782.4" y="449" width="1.8" height="1" fill="#3a1096"/><rect x="782.3" y="450" width="1.8" height="1" fill="#5a139c"/><rect x="782.3" y="451" width="1.8" height="1" fill="#26108c"/><rect x="782.3" y="452" width="1.8" height="1" fill="#191086"/><rect x="782.7" y="453" width="1.8" height="1" fill="#09093c"/><rect x="782.3" y="454" width="1.8" height="1" fill="#131084"/><rect x="782.2" y="455" width="1.8" height="1" fill="#2c108f"/><rect x="782.1" y="456" width="1.8" height="1" fill="#26108c"/><rect x="782.0" y="457" width="1.8" height="1" fill="#0b0b4e"/><rect x="781.8" y="458" width="1.8" height="1" fill="#46109b"/><rect x="782.8" y="459" width="1.8" height="1" fill="#0e0e6b"/><rect x="782.6" y="460" width="1.8" height="1" fill="#46109b"/><rect x="782.2" y="461" width="1.8" height="1" fill="#22108a"/><rect x="782.3" y="462" width="1.8" height="1" fill="#381095"/><rect x="781.7" y="463" width="1.8" height="1" fill="#1f1089"/><rect x="781.7" y="464" width="1.8" height="1" fill="#0f0f7b"/><rect x="782.0" y="465" width="1.8" height="1" fill="#4f10a0"/><rect x="782.2" y="466" width="1.8" height="1" fill="#1c1087"/><rect x="782.3" y="467" width="1.8" height="1" fill="#21108a"/><rect x="781.7" y="468" width="1.8" height="1" fill="#10107f"/><rect x="781.9" y="469" width="1.8" height="1" fill="#57129d"/><rect x="781.9" y="470" width="1.8" height="1" fill="#121083"/><rect x="782.1" y="471" width="1.8" height="1" fill="#101081"/><rect x="781.8" y="472" width="1.8" height="1" fill="#351093"/><rect x="781.9" y="473" width="1.8" height="1" fill="#28108d"/><rect x="781.7" y="474" width="1.8" height="1" fill="#42109a"/><rect x="782.3" y="475" width="1.8" height="1" fill="#22108a"/><rect x="782.1" y="476" width="1.8" height="1" fill="#0b0b55"/><rect x="781.9" y="477" width="1.8" height="1" fill="#23108b"/><rect x="782.4" y="478" width="1.8" height="1" fill="#181086"/><rect x="782.0" y="479" width="1.8" height="1" fill="#25108c"/><rect x="782.2" y="480" width="1.8" height="1" fill="#181086"/><rect x="782.3" y="481" width="1.8" height="1" fill="#42109a"/><rect x="782.6" y="482" width="1.8" height="1" fill="#331092"/><rect x="781.7" y="483" width="1.8" height="1" fill="#0a0a4a"/><rect x="782.4" y="484" width="1.8" height="1" fill="#060624"/><rect x="782.1" y="485" width="1.8" height="1" fill="#060623"/><rect x="781.7" y="486" width="1.8" height="1" fill="#321092"/><rect x="782.0" y="487" width="1.8" height="1" fill="#0f0f75"/><rect x="781.6" y="488" width="1.8" height="1" fill="#311092"/><rect x="782.3" y="489" width="1.8" height="1" fill="#25108c"/><rect x="782.2" y="490" width="1.8" height="1" fill="#201089"/><rect x="782.2" y="491" width="1.8" height="1" fill="#401098"/><rect x="782.0" y="492" width="1.8" height="1" fill="#1a1087"/><rect x="782.0" y="493" width="1.8" height="1" fill="#2e1090"/><rect x="782.1" y="494" width="1.8" height="1" fill="#2e1090"/><rect x="781.9" y="495" width="1.8" height="1" fill="#3b1096"/><rect x="782.2" y="496" width="1.8" height="1" fill="#1d1088"/><rect x="782.4" y="497" width="1.8" height="1" fill="#26108c"/><rect x="782.4" y="498" width="1.8" height="1" fill="#25108c"/><rect x="782.4" y="499" width="1.8" height="1" fill="#55119e"/><rect x="781.7" y="500" width="1.8" height="1" fill="#0c0c5d"/><rect x="782.0" y="501" width="1.8" height="1" fill="#2d1090"/><rect x="782.0" y="502" width="1.8" height="1" fill="#22108a"/><rect x="782.5" y="503" width="1.8" height="1" fill="#3f1098"/><rect x="782.2" y="504" width="1.8" height="1" fill="#0c0c59"/><rect x="781.7" y="505" width="1.8" height="1" fill="#101082"/><rect x="782.1" y="506" width="1.8" height="1" fill="#2b108f"/><rect x="782.8" y="507" width="1.8" height="1" fill="#25108c"/><rect x="782.4" y="508" width="1.8" height="1" fill="#3f1098"/><rect x="781.7" y="509" width="1.8" height="1" fill="#0f0f7c"/><rect x="782.0" y="510" width="1.8" height="1" fill="#3c1097"/><rect x="782.0" y="511" width="1.8" height="1" fill="#191086"/><rect x="782.8" y="512" width="1.8" height="1" fill="#1b1087"/><rect x="782.0" y="513" width="1.8" height="1" fill="#10107f"/><rect x="782.2" y="514" width="1.8" height="1" fill="#1d1088"/><rect x="781.6" y="515" width="1.8" height="1" fill="#0b0b52"/><rect x="782.0" y="516" width="1.8" height="1" fill="#0e0e71"/><rect x="781.8" y="517" width="1.8" height="1" fill="#0d0d66"/><rect x="782.0" y="518" width="1.8" height="1" fill="#0c0c5e"/><rect x="781.6" y="519" width="1.8" height="1" fill="#131083"/><rect x="782.2" y="520" width="1.8" height="1" fill="#0e0e71"/><rect x="781.7" y="521" width="1.8" height="1" fill="#121083"/><rect x="782.1" y="522" width="1.8" height="1" fill="#0f0f79"/><rect x="781.6" y="523" width="1.8" height="1" fill="#2b108f"/><rect x="782.0" y="524" width="1.8" height="1" fill="#28108d"/><rect x="782.3" y="525" width="1.8" height="1" fill="#1a1087"/><rect x="781.8" y="526" width="1.8" height="1" fill="#0c0c5d"/><rect x="782.3" y="527" width="1.8" height="1" fill="#111082"/><rect x="781.7" y="528" width="1.8" height="1" fill="#0e0e6d"/><rect x="782.2" y="529" width="1.8" height="1" fill="#0d0d65"/><rect x="781.9" y="530" width="1.8" height="1" fill="#341093"/><rect x="782.0" y="531" width="1.8" height="1" fill="#0f0f76"/><rect x="781.8" y="532" width="1.8" height="1" fill="#10107f"/><rect x="782.2" y="533" width="1.8" height="1" fill="#0e0e6f"/><rect x="782.1" y="534" width="1.8" height="1" fill="#151084"/><rect x="781.9" y="535" width="1.8" height="1" fill="#0b0b52"/><rect x="782.4" y="536" width="1.8" height="1" fill="#0c0c60"/><rect x="782.2" y="537" width="1.8" height="1" fill="#3b1096"/><rect x="782.0" y="538" width="1.8" height="1" fill="#3f1098"/><rect x="781.7" y="539" width="1.8" height="1" fill="#0f0f74"/><rect x="782.0" y="540" width="1.8" height="1" fill="#171085"/><rect x="782.2" y="541" width="1.8" height="1" fill="#131083"/><rect x="781.8" y="542" width="1.8" height="1" fill="#0f0f76"/><rect x="782.1" y="543" width="1.8" height="1" fill="#10107f"/><rect x="782.3" y="544" width="1.8" height="1" fill="#101082"/><rect x="782.0" y="545" width="1.8" height="1" fill="#0f0f76"/><rect x="782.4" y="546" width="1.8" height="1" fill="#411099"/><rect x="781.8" y="547" width="1.8" height="1" fill="#0f0f7c"/><rect x="782.2" y="548" width="1.8" height="1" fill="#0d0d69"/><rect x="782.8" y="549" width="1.8" height="1" fill="#27108d"/><rect x="782.1" y="550" width="1.8" height="1" fill="#0e0e73"/><rect x="782.1" y="551" width="1.8" height="1" fill="#0e0e6d"/><rect x="781.8" y="552" width="1.8" height="1" fill="#0e0e6c"/><rect x="782.1" y="553" width="1.8" height="1" fill="#2b108f"/><rect x="781.9" y="554" width="1.8" height="1" fill="#331092"/><rect x="782.3" y="555" width="1.8" height="1" fill="#151084"/><rect x="781.7" y="556" width="1.8" height="1" fill="#060620"/><rect x="782.1" y="557" width="1.8" height="1" fill="#23108b"/><rect x="781.9" y="558" width="1.8" height="1" fill="#060621"/><rect x="782.0" y="559" width="1.8" height="1" fill="#0a0a48"/><rect x="781.9" y="560" width="1.8" height="1" fill="#391095"/><rect x="782.0" y="561" width="1.8" height="1" fill="#46109c"/><rect x="782.6" y="562" width="1.8" height="1" fill="#0c0c57"/><rect x="782.5" y="563" width="1.8" height="1" fill="#27108d"/><rect x="782.4" y="564" width="1.8" height="1" fill="#44109a"/><rect x="781.6" y="565" width="1.8" height="1" fill="#2f1091"/><rect x="782.2" y="566" width="1.8" height="1" fill="#0b0b52"/><rect x="782.3" y="567" width="1.8" height="1" fill="#121083"/><rect x="782.4" y="568" width="1.8" height="1" fill="#0d0d63"/><rect x="782.3" y="569" width="1.8" height="1" fill="#45109b"/><rect x="782.3" y="570" width="1.8" height="1" fill="#23108b"/><rect x="782.2" y="571" width="1.8" height="1" fill="#26108c"/><rect x="782.2" y="572" width="1.8" height="1" fill="#0c0c60"/><rect x="781.7" y="573" width="1.8" height="1" fill="#10107f"/><rect x="782.1" y="574" width="1.8" height="1" fill="#111083"/><rect x="782.0" y="575" width="1.8" height="1" fill="#111082"/><rect x="782.3" y="576" width="1.8" height="1" fill="#181086"/><rect x="782.2" y="577" width="1.8" height="1" fill="#0b0b54"/><rect x="782.3" y="578" width="1.8" height="1" fill="#20108a"/><rect x="781.8" y="579" width="1.8" height="1" fill="#0a0a48"/><rect x="781.8" y="580" width="1.8" height="1" fill="#0f0f77"/><rect x="781.9" y="581" width="1.8" height="1" fill="#5010a0"/><rect x="782.3" y="582" width="1.8" height="1" fill="#0a0a4c"/><rect x="781.4" y="583" width="1.8" height="1" fill="#0c0c5c"/><rect x="781.8" y="584" width="1.8" height="1" fill="#0e0e6b"/><rect x="781.6" y="585" width="1.8" height="1" fill="#0c0c58"/><rect x="782.0" y="586" width="1.8" height="1" fill="#090944"/><rect x="781.8" y="587" width="1.8" height="1" fill="#0e0e6c"/><rect x="781.8" y="588" width="1.8" height="1" fill="#0a0a4b"/><rect x="782.0" y="589" width="1.8" height="1" fill="#0f0f75"/><rect x="782.3" y="590" width="1.8" height="1" fill="#07072f"/><rect x="782.2" y="591" width="1.8" height="1" fill="#0a0a4a"/><rect x="782.2" y="592" width="1.8" height="1" fill="#09093e"/><rect x="782.1" y="593" width="1.8" height="1" fill="#0d0d66"/><rect x="782.2" y="594" width="1.8" height="1" fill="#111083"/><rect x="782.1" y="595" width="1.8" height="1" fill="#0e0e73"/><rect x="782.1" y="596" width="1.8" height="1" fill="#07072b"/><rect x="781.4" y="597" width="1.8" height="1" fill="#030306"/><rect x="782.0" y="598" width="1.8" height="1" fill="#0c0c5a"/><rect x="782.3" y="599" width="1.8" height="1" fill="#2c108f"/><rect x="782.0" y="600" width="1.8" height="1" fill="#21108a"/><rect x="782.4" y="601" width="1.8" height="1" fill="#10107e"/><rect x="782.2" y="602" width="1.8" height="1" fill="#101082"/><rect x="781.8" y="603" width="1.8" height="1" fill="#0e0e6d"/><rect x="781.7" y="604" width="1.8" height="1" fill="#09093b"/><rect x="782.0" y="605" width="1.8" height="1" fill="#0f0f7c"/><rect x="782.2" y="606" width="1.8" height="1" fill="#0a0a45"/><rect x="782.4" y="607" width="1.8" height="1" fill="#0a0a4a"/><rect x="782.2" y="608" width="1.8" height="1" fill="#371094"/><rect x="781.6" y="609" width="1.8" height="1" fill="#090943"/><rect x="782.2" y="610" width="1.8" height="1" fill="#391095"/><rect x="782.4" y="611" width="1.8" height="1" fill="#07072a"/><rect x="782.0" y="612" width="1.8" height="1" fill="#040411"/><rect x="782.0" y="613" width="1.8" height="1" fill="#0c0c59"/><rect x="782.8" y="614" width="1.8" height="1" fill="#07072b"/><rect x="782.2" y="615" width="1.8" height="1" fill="#0b0b50"/><rect x="781.6" y="616" width="1.8" height="1" fill="#0d0d65"/><rect x="782.2" y="617" width="1.8" height="1" fill="#0a0a47"/><rect x="782.0" y="618" width="1.8" height="1" fill="#191086"/><rect x="782.0" y="619" width="1.8" height="1" fill="#0f0f74"/><rect x="781.4" y="620" width="1.8" height="1" fill="#10107f"/><rect x="781.9" y="621" width="1.8" height="1" fill="#10107f"/><rect x="781.2" y="622" width="1.8" height="1" fill="#090944"/><rect x="782.3" y="623" width="1.8" height="1" fill="#07072b"/><rect x="781.9" y="624" width="1.8" height="1" fill="#3f1098"/><rect x="782.2" y="625" width="1.8" height="1" fill="#09093e"/><rect x="781.9" y="626" width="1.8" height="1" fill="#0e0e6e"/><rect x="782.0" y="627" width="1.8" height="1" fill="#0b0b56"/><rect x="782.3" y="628" width="1.8" height="1" fill="#10107d"/><rect x="782.4" y="629" width="1.8" height="1" fill="#2e1090"/><rect x="782.1" y="630" width="1.8" height="1" fill="#10107f"/><rect x="781.8" y="631" width="1.8" height="1" fill="#161085"/><rect x="782.2" y="632" width="1.8" height="1" fill="#391095"/><rect x="781.9" y="633" width="1.8" height="1" fill="#23108b"/><rect x="782.2" y="634" width="1.8" height="1" fill="#181086"/><rect x="781.9" y="635" width="1.8" height="1" fill="#0b0b52"/><rect x="782.6" y="636" width="1.8" height="1" fill="#07072f"/><rect x="782.1" y="637" width="1.8" height="1" fill="#1d1088"/><rect x="781.9" y="638" width="1.8" height="1" fill="#0d0d64"/><rect x="781.6" y="639" width="1.8" height="1" fill="#030306"/><rect x="782.1" y="640" width="1.8" height="1" fill="#09093b"/><rect x="782.3" y="641" width="1.8" height="1" fill="#05051e"/><rect x="782.1" y="642" width="1.8" height="1" fill="#0e0e73"/><rect x="782.0" y="643" width="1.8" height="1" fill="#030306"/><rect x="781.7" y="644" width="1.8" height="1" fill="#0b0b56"/><rect x="782.7" y="645" width="1.8" height="1" fill="#030306"/><rect x="782.0" y="646" width="1.8" height="1" fill="#0f0f76"/><rect x="782.4" y="647" width="1.8" height="1" fill="#25108c"/><rect x="782.2" y="648" width="1.8" height="1" fill="#0e0e6c"/><rect x="782.5" y="649" width="1.8" height="1" fill="#0f0f7d"/><rect x="782.0" y="650" width="1.8" height="1" fill="#0c0c58"/><rect x="781.3" y="651" width="1.8" height="1" fill="#0e0e72"/><rect x="782.0" y="652" width="1.8" height="1" fill="#0c0c58"/><rect x="782.0" y="653" width="1.8" height="1" fill="#0b0b53"/><rect x="782.1" y="654" width="1.8" height="1" fill="#0d0d64"/><rect x="782.1" y="655" width="1.8" height="1" fill="#0b0b56"/><rect x="781.9" y="656" width="1.8" height="1" fill="#0d0d69"/><rect x="781.6" y="657" width="1.8" height="1" fill="#111082"/><rect x="782.2" y="658" width="1.8" height="1" fill="#0c0c5c"/><rect x="782.0" y="659" width="1.8" height="1" fill="#040410"/><rect x="782.1" y="660" width="1.8" height="1" fill="#1a1087"/><rect x="781.2" y="661" width="1.8" height="1" fill="#060623"/><rect x="782.1" y="662" width="1.8" height="1" fill="#0d0d61"/><rect x="782.7" y="663" width="1.8" height="1" fill="#0e0e6e"/><rect x="782.1" y="664" width="1.8" height="1" fill="#0b0b4e"/><rect x="782.1" y="665" width="1.8" height="1" fill="#07072b"/><rect x="782.3" y="666" width="1.8" height="1" fill="#0a0a4c"/><rect x="781.9" y="667" width="1.8" height="1" fill="#0d0d69"/><rect x="782.5" y="668" width="1.8" height="1" fill="#080835"/><rect x="782.3" y="669" width="1.8" height="1" fill="#05051c"/><rect x="782.3" y="670" width="1.8" height="1" fill="#20108a"/><rect x="782.5" y="671" width="1.8" height="1" fill="#0c0c58"/><rect x="782.1" y="672" width="1.8" height="1" fill="#0c0c5d"/><rect x="782.4" y="673" width="1.8" height="1" fill="#090940"/><rect x="782.6" y="674" width="1.8" height="1" fill="#0e0e6d"/><rect x="782.0" y="675" width="1.8" height="1" fill="#080839"/><rect x="782.2" y="676" width="1.8" height="1" fill="#080833"/><rect x="782.4" y="677" width="1.8" height="1" fill="#060626"/><rect x="781.8" y="678" width="1.8" height="1" fill="#0c0c59"/><rect x="781.6" y="679" width="1.8" height="1" fill="#030306"/><rect x="782.1" y="680" width="1.8" height="1" fill="#181086"/><rect x="782.0" y="681" width="1.8" height="1" fill="#0b0b4e"/><rect x="781.5" y="682" width="1.8" height="1" fill="#0c0c5a"/><rect x="781.6" y="683" width="1.8" height="1" fill="#030306"/><rect x="782.3" y="684" width="1.8" height="1" fill="#0a0a49"/><rect x="782.1" y="685" width="1.8" height="1" fill="#0c0c5d"/><rect x="782.3" y="686" width="1.8" height="1" fill="#030306"/><rect x="782.1" y="687" width="1.8" height="1" fill="#080836"/><rect x="782.0" y="688" width="1.8" height="1" fill="#090940"/><rect x="781.9" y="689" width="1.8" height="1" fill="#06061e"/><rect x="782.2" y="690" width="1.8" height="1" fill="#030306"/><rect x="782.4" y="691" width="1.8" height="1" fill="#080839"/><rect x="782.5" y="692" width="1.8" height="1" fill="#030306"/><rect x="782.0" y="693" width="1.8" height="1" fill="#09093e"/><rect x="781.9" y="694" width="1.8" height="1" fill="#050518"/><rect x="782.4" y="695" width="1.8" height="1" fill="#030306"/><rect x="782.3" y="696" width="1.8" height="1" fill="#080835"/><rect x="781.9" y="697" width="1.8" height="1" fill="#0d0d69"/><rect x="782.0" y="698" width="1.8" height="1" fill="#080833"/><rect x="782.1" y="699" width="1.8" height="1" fill="#0e0e73"/><rect x="782.3" y="700" width="1.8" height="1" fill="#0a0a47"/><rect x="782.7" y="701" width="1.8" height="1" fill="#080839"/><rect x="782.5" y="702" width="1.8" height="1" fill="#04040c"/><rect x="781.8" y="703" width="1.8" height="1" fill="#101081"/><rect x="782.2" y="704" width="1.8" height="1" fill="#0d0d64"/><rect x="781.7" y="705" width="1.8" height="1" fill="#0d0d63"/><rect x="781.8" y="706" width="1.8" height="1" fill="#090942"/><rect x="782.5" y="707" width="1.8" height="1" fill="#060624"/><rect x="781.4" y="708" width="1.8" height="1" fill="#07072c"/><rect x="781.8" y="709" width="1.8" height="1" fill="#030306"/><rect x="781.9" y="710" width="1.8" height="1" fill="#0d0d64"/><rect x="782.4" y="711" width="1.8" height="1" fill="#030306"/><rect x="782.2" y="712" width="1.8" height="1" fill="#08083a"/><rect x="782.5" y="713" width="1.8" height="1" fill="#030306"/><rect x="781.5" y="714" width="1.8" height="1" fill="#060624"/><rect x="781.8" y="715" width="1.8" height="1" fill="#030306"/><rect x="782.3" y="716" width="1.8" height="1" fill="#060620"/><rect x="781.9" y="717" width="1.8" height="1" fill="#030306"/><rect x="782.1" y="718" width="1.8" height="1" fill="#1b1087"/><rect x="782.1" y="719" width="1.8" height="1" fill="#030309"/><rect x="784" y="262" width="9" height="1.5" fill="#43109a" opacity="0.8"/><rect x="784" y="280" width="13" height="1.5" fill="#43109a" opacity="0.8"/><rect x="784" y="300" width="13" height="1.5" fill="#43109a" opacity="0.8"/><rect x="784" y="329" width="10" height="1.5" fill="#43109a" opacity="0.8"/><rect x="784" y="352" width="12" height="1.5" fill="#43109a" opacity="0.8"/><rect x="784" y="378" width="12" height="1.5" fill="#43109a" opacity="0.8"/><rect x="799.3" y="133" width="2.5" height="1" fill="#09093b"/><rect x="799.0" y="134" width="2.5" height="1" fill="#0c0c5a"/><rect x="798.7" y="135" width="2.5" height="1" fill="#0f0f75"/><rect x="799.0" y="136" width="2.5" height="1" fill="#171085"/><rect x="798.9" y="137" width="2.5" height="1" fill="#2b108f"/><rect x="798.6" y="138" width="2.5" height="1" fill="#391095"/><rect x="799.1" y="139" width="2.5" height="1" fill="#3b1096"/><rect x="798.7" y="140" width="2.5" height="1" fill="#3e1097"/><rect x="799.5" y="141" width="2.5" height="1" fill="#3e1097"/><rect x="799.6" y="142" width="2.5" height="1" fill="#3d1097"/><rect x="799.3" y="143" width="2.5" height="1" fill="#3e1098"/><rect x="799.3" y="144" width="2.5" height="1" fill="#3b1096"/><rect x="799.0" y="145" width="2.5" height="1" fill="#391095"/><rect x="798.4" y="146" width="2.5" height="1" fill="#3c1096"/><rect x="799.3" y="147" width="2.5" height="1" fill="#381095"/><rect x="799.3" y="148" width="2.5" height="1" fill="#3e1098"/><rect x="798.1" y="149" width="2.5" height="1" fill="#3d1097"/><rect x="798.8" y="150" width="2.5" height="1" fill="#3e1097"/><rect x="798.8" y="151" width="2.5" height="1" fill="#3b1096"/><rect x="798.7" y="152" width="2.5" height="1" fill="#3a1096"/><rect x="799.1" y="153" width="2.5" height="1" fill="#411099"/><rect x="798.8" y="154" width="2.5" height="1" fill="#3b1096"/><rect x="799.1" y="155" width="2.5" height="1" fill="#401098"/><rect x="798.6" y="156" width="2.5" height="1" fill="#3d1097"/><rect x="798.6" y="157" width="2.5" height="1" fill="#3b1096"/><rect x="799.2" y="158" width="2.5" height="1" fill="#371094"/><rect x="798.8" y="159" width="2.5" height="1" fill="#3c1096"/><rect x="799.2" y="160" width="2.5" height="1" fill="#3a1096"/><rect x="799.1" y="161" width="2.5" height="1" fill="#43109a"/><rect x="798.6" y="162" width="2.5" height="1" fill="#401098"/><rect x="799.0" y="163" width="2.5" height="1" fill="#3d1097"/><rect x="799.0" y="164" width="2.5" height="1" fill="#421099"/><rect x="798.9" y="165" width="2.5" height="1" fill="#3a1096"/><rect x="799.4" y="166" width="2.5" height="1" fill="#3b1096"/><rect x="799.0" y="167" width="2.5" height="1" fill="#3f1098"/><rect x="799.2" y="168" width="2.5" height="1" fill="#3d1097"/><rect x="798.7" y="169" width="2.5" height="1" fill="#3b1096"/><rect x="799.3" y="170" width="2.5" height="1" fill="#371094"/><rect x="799.1" y="171" width="2.5" height="1" fill="#3e1098"/><rect x="799.4" y="172" width="2.5" height="1" fill="#3d1097"/><rect x="799.3" y="173" width="2.5" height="1" fill="#3a1096"/><rect x="798.8" y="174" width="2.5" height="1" fill="#3a1096"/><rect x="799.0" y="175" width="2.5" height="1" fill="#391095"/><rect x="799.1" y="176" width="2.5" height="1" fill="#3c1097"/><rect x="798.5" y="177" width="2.5" height="1" fill="#3b1096"/><rect x="799.3" y="178" width="2.5" height="1" fill="#3f1098"/><rect x="798.9" y="179" width="2.5" height="1" fill="#3f1098"/><rect x="798.4" y="180" width="2.5" height="1" fill="#3e1098"/><rect x="799.3" y="181" width="2.5" height="1" fill="#3c1096"/><rect x="798.7" y="182" width="2.5" height="1" fill="#3e1098"/><rect x="798.9" y="183" width="2.5" height="1" fill="#3f1098"/><rect x="798.5" y="184" width="2.5" height="1" fill="#3f1098"/><rect x="799.0" y="185" width="2.5" height="1" fill="#3b1096"/><rect x="799.1" y="186" width="2.5" height="1" fill="#3e1097"/><rect x="798.9" y="187" width="2.5" height="1" fill="#3d1097"/><rect x="799.2" y="188" width="2.5" height="1" fill="#3e1098"/><rect x="798.8" y="189" width="2.5" height="1" fill="#381095"/><rect x="799.0" y="190" width="2.5" height="1" fill="#3c1097"/><rect x="798.5" y="191" width="2.5" height="1" fill="#401098"/><rect x="798.4" y="192" width="2.5" height="1" fill="#3e1098"/><rect x="798.8" y="193" width="2.5" height="1" fill="#3a1096"/><rect x="798.8" y="194" width="2.5" height="1" fill="#3c1097"/><rect x="798.8" y="195" width="2.5" height="1" fill="#3b1096"/><rect x="798.4" y="196" width="2.5" height="1" fill="#3c1097"/><rect x="798.8" y="197" width="2.5" height="1" fill="#381095"/><rect x="799.2" y="198" width="2.5" height="1" fill="#3e1098"/><rect x="799.0" y="199" width="2.5" height="1" fill="#46109b"/><rect x="799.0" y="200" width="2.5" height="1" fill="#3a1096"/><rect x="799.0" y="201" width="2.5" height="1" fill="#3f1098"/><rect x="798.9" y="202" width="2.5" height="1" fill="#391095"/><rect x="798.5" y="203" width="2.5" height="1" fill="#3d1097"/><rect x="799.3" y="204" width="2.5" height="1" fill="#391095"/><rect x="799.0" y="205" width="2.5" height="1" fill="#361094"/><rect x="799.4" y="206" width="2.5" height="1" fill="#1b1087"/><rect x="798.7" y="207" width="2.5" height="1" fill="#0c0c60"/><rect x="772" y="66" width="25" height="1.5" fill="#4a109d"/><rect x="797" y="168" width="2" height="2" fill="#4c109e"/><rect x="796" y="184" width="3" height="2" fill="#4e109f"/><rect x="804" y="172" width="3" height="2" fill="#5b139c"/><rect x="805" y="197" width="3" height="2" fill="#331093"/><rect x="804" y="182" width="4" height="2" fill="#301091"/><rect x="789" y="196" width="3" height="2" fill="#371094"/><rect x="795" y="168" width="4" height="2" fill="#3e1098"/><rect x="792" y="198" width="3" height="2" fill="#42109a"/><rect x="792" y="154" width="3" height="2" fill="#4f10a0"/><rect x="802" y="179" width="4" height="2" fill="#391095"/><rect x="790" y="164" width="3" height="2" fill="#371094"/><rect x="793" y="148" width="2" height="2" fill="#311091"/><rect x="788" y="165" width="2" height="2" fill="#5e149a"/><rect x="788" y="179" width="4" height="2" fill="#2a108e"/><rect x="799" y="181" width="4" height="2" fill="#371094"/><rect x="795" y="143" width="3" height="2" fill="#49109d"/><rect x="802" y="146" width="2" height="2" fill="#321092"/><rect x="804" y="204" width="4" height="2" fill="#3e1098"/><rect x="803" y="177" width="4" height="2" fill="#4b109d"/><rect x="793" y="150" width="2" height="2" fill="#4f109f"/><rect x="790" y="201" width="4" height="2" fill="#391095"/><rect x="802" y="194" width="2" height="2" fill="#3d1097"/><rect x="798" y="201" width="3" height="2" fill="#361094"/><rect x="788" y="185" width="2" height="2" fill="#4b109e"/><rect x="788" y="187" width="2" height="2" fill="#42109a"/><rect x="797" y="178" width="2" height="2" fill="#44109a"/><rect x="794" y="186" width="3" height="2" fill="#56129d"/><rect x="794" y="190" width="2" height="2" fill="#47109c"/><rect x="795" y="171" width="4" height="2" fill="#3e1097"/><rect x="797" y="171" width="3" height="2" fill="#54119e"/><rect x="791" y="189" width="3" height="2" fill="#55119e"/><rect x="803" y="145" width="3" height="2" fill="#5b139b"/><rect x="802" y="183" width="4" height="2" fill="#53119f"/><rect x="798" y="155" width="2" height="2" fill="#48109c"/><rect x="788" y="185" width="3" height="2" fill="#381095"/><rect x="786" y="164" width="2" height="2" fill="#47109c"/><rect x="799" y="167" width="2" height="2" fill="#2e1090"/><rect x="793" y="191" width="2" height="2" fill="#5c139b"/><rect x="804" y="145" width="3" height="2" fill="#3b1096"/><rect x="797" y="143" width="2" height="2" fill="#2e1090"/><ellipse cx="663" cy="170" rx="2" ry="1.5" fill="#9e247f"/><path d="M770 165 L778 162 L786 163 L792 161 L800 163 L806 166 L813 170 L807 174 L801 179 L792 182 L784 185 L776 183 L770 178 Z" fill="#f4921f"/><path d="M772 166 L780 165 L788 165 L794 164 L801 166 L805 169 L808 171 L803 175 L797 179 L790 181 L783 183 L776 181 L772 177 Z" fill="#fff"/><rect x="805" y="186" width="3" height="1" fill="#f7a41f"/><rect x="800" y="180" width="3" height="1" fill="#fcbe1e"/><rect x="775" y="167" width="1" height="2" fill="#c5425c"/><rect x="805" y="181" width="2" height="2" fill="#fab41f"/><rect x="797" y="165" width="2" height="1" fill="#9f247f"/><rect x="787" y="177" width="3" height="2" fill="#f5951f"/><rect x="781" y="184" width="1" height="2" fill="#bf3a64"/><rect x="809" y="177" width="3" height="2" fill="#f18020"/><rect x="770" y="174" width="2" height="2" fill="#f38b20"/><rect x="779" y="172" width="3" height="2" fill="#fbb91f"/><rect x="780" y="175" width="2" height="1" fill="#ba356a"/><rect x="786" y="160" width="2" height="1" fill="#fab31f"/><rect x="783" y="164" width="1" height="1" fill="#ee7623"/><rect x="787" y="176" width="3" height="1" fill="#eb7127"/><rect x="787" y="167" width="2" height="1" fill="#c94756"/><rect x="801" y="169" width="3" height="2" fill="#a6257c"/><rect x="800" y="181" width="1" height="1" fill="#d65843"/><rect x="781" y="171" width="2" height="2" fill="#f4911f"/><rect x="774" y="186" width="2" height="2" fill="#f8a81f"/><rect x="805" y="184" width="3" height="2" fill="#c74558"/><rect x="801" y="177" width="3" height="1" fill="#fab31f"/><rect x="770" y="173" width="1" height="2" fill="#eb7227"/><rect x="786" y="163" width="3" height="1" fill="#c74459"/><rect x="812" y="174" width="3" height="1" fill="#fab61f"/><rect x="796" y="168" width="1" height="2" fill="#a3257e"/><ellipse cx="788" cy="744" rx="10" ry="4" fill="#4a109d" opacity="0.7"/><ellipse cx="786" cy="745" rx="5" ry="2" fill="#f4921f"/></g><rect x="1" y="1" width="315" height="49" fill="#000"/><rect x="3" y="3" width="311" height="45" fill="#fff"/><text x="4" y="15.0" font-family="Liberation Mono" font-size="11.67" fill="#000">Screen Capture Time: 2025-12-14 07:04:24 UTC</text><text x="4" y="28.8" font-family="Liberation Mono" font-size="11.67" fill="#000">143048017 Hz</text><text x="4" y="42.6" font-family="Liberation Mono" font-size="11.67" fill="#000">Config = V8</text><rect x="4" y="52" width="101" height="41" fill="#000"/><rect x="5" y="53" width="99" height="39" fill="#fff"/><rect x="5" y="53" width="99" height="15" fill="url(#cbar)"/><rect x="5" y="68" width="99" height="1" fill="#000"/><rect x="8" y="68" width="1" height="5" fill="#000"/><rect x="12" y="68" width="1" height="5" fill="#000"/><rect x="17" y="68" width="1" height="5" fill="#000"/><rect x="21" y="68" width="1" height="5" fill="#000"/><rect x="26" y="68" width="1" height="8" fill="#000"/><rect x="30" y="68" width="1" height="5" fill="#000"/><rect x="35" y="68" width="1" height="5" fill="#000"/><rect x="39" y="68" width="1" height="5" fill="#000"/><rect x="43" y="68" width="1" height="5" fill="#000"/><rect x="48" y="68" width="1" height="11" fill="#000"/><rect x="52" y="68" width="1" height="5" fill="#000"/><rect x="57" y="68" width="1" height="5" fill="#000"/><rect x="61" y="68" width="1" height="5" fill="#000"/><rect x="66" y="68" width="1" height="5" fill="#000"/><rect x="70" y="68" width="1" height="8" fill="#000"/><rect x="74" y="68" width="1" height="5" fill="#000"/><rect x="79" y="68" width="1" height="5" fill="#000"/><rect x="84" y="68" width="1" height="5" fill="#000"/><rect x="88" y="68" width="1" height="5" fill="#000"/><rect x="92" y="68" width="1" height="11" fill="#000"/><rect x="97" y="68" width="1" height="5" fill="#000"/><rect x="101" y="68" width="1" height="5" fill="#000"/><text x="5" y="89.5" font-family="Liberation Sans" font-size="11" fill="#000">-80 dB -60</text><text x="84" y="89.5" font-family="Liberation Sans" font-size="11" fill="#000">-40</text><text transform="translate(11.8,778.8) rotate(-90)" font-family="Liberation Sans" font-size="11" fill="#fff">2025-12-14 07:03:10</text><rect x="15" y="760" width="1" height="20" fill="#fff"/><text transform="translate(126.8,778.8) rotate(-90)" font-family="Liberation Sans" font-size="11" fill="#fff">2025-12-14 07:03:20</text><rect x="130" y="760" width="1" height="20" fill="#fff"/><text transform="translate(240.8,778.8) rotate(-90)" font-family="Liberation Sans" font-size="11" fill="#fff">2025-12-14 07:03:30</text><rect x="244" y="760" width="1" height="20" fill="#fff"/><text transform="translate(341.8,778.8) rotate(-90)" font-family="Liberation Sans" font-size="11" fill="#fff">2025-12-14 07:03:40</text><rect x="345" y="760" width="1" height="20" fill="#fff"/><text transform="translate(442.8,778.8) rotate(-90)" font-family="Liberation Sans" font-size="11" fill="#fff">2025-12-14 07:03:50</text><rect x="446" y="760" width="1" height="20" fill="#fff"/><text transform="translate(557.8,778.8) rotate(-90)" font-family="Liberation Sans" font-size="11" fill="#fff">2025-12-14 07:04:00</text><rect x="561" y="760" width="1" height="20" fill="#fff"/><text transform="translate(671.8,778.8) rotate(-90)" font-family="Liberation Sans" font-size="11" fill="#fff">2025-12-14 07:04:10</text><rect x="675" y="760" width="1" height="20" fill="#fff"/><text transform="translate(771.8,778.8) rotate(-90)" font-family="Liberation Sans" font-size="11" fill="#fff">2025-12-14 07:04:20</text><rect x="775" y="760" width="1" height="20" fill="#fff"/><rect x="818" y="0" width="42" height="783" fill="#fff"/><rect x="818" y="2" width="8" height="1" fill="#000"/><rect x="818" y="10" width="8" height="1" fill="#000"/><rect x="818" y="18" width="8" height="1" fill="#000"/><rect x="818" y="25" width="8" height="1" fill="#000"/><rect x="818" y="33" width="8" height="1" fill="#000"/><rect x="818" y="41" width="8" height="1" fill="#000"/><rect x="818" y="49" width="8" height="1" fill="#000"/><rect x="818" y="57" width="8" height="1" fill="#000"/><rect x="818" y="64" width="8" height="1" fill="#000"/><rect x="818" y="72" width="8" height="1" fill="#000"/><rect x="818" y="80" width="26" height="1" fill="#000"/><rect x="818" y="88" width="8" height="1" fill="#000"/><rect x="818" y="96" width="8" height="1" fill="#000"/><rect x="818" y="103" width="8" height="1" fill="#000"/><rect x="818" y="111" width="8" height="1" fill="#000"/><rect x="818" y="119" width="8" height="1" fill="#000"/><rect x="818" y="127" width="8" height="1" fill="#000"/><rect x="818" y="135" width="8" height="1" fill="#000"/><rect x="818" y="142" width="8" height="1" fill="#000"/><rect x="818" y="150" width="8" height="1" fill="#000"/><rect x="818" y="158" width="8" height="1" fill="#000"/><rect x="818" y="166" width="8" height="1" fill="#000"/><rect x="818" y="174" width="8" height="1" fill="#000"/><rect x="818" y="182" width="8" height="1" fill="#000"/><rect x="818" y="189" width="8" height="1" fill="#000"/><rect x="818" y="197" width="8" height="1" fill="#000"/><rect x="818" y="205" width="8" height="1" fill="#000"/><rect x="818" y="213" width="8" height="1" fill="#000"/><rect x="818" y="221" width="8" height="1" fill="#000"/><rect x="818" y="228" width="8" height="1" fill="#000"/><rect x="818" y="236" width="26" height="1" fill="#000"/><rect x="818" y="244" width="8" height="1" fill="#000"/><rect x="818" y="252" width="8" height="1" fill="#000"/><rect x="818" y="260" width="8" height="1" fill="#000"/><rect x="818" y="267" width="8" height="1" fill="#000"/><rect x="818" y="275" width="8" height="1" fill="#000"/><rect x="818" y="283" width="8" height="1" fill="#000"/><rect x="818" y="291" width="8" height="1" fill="#000"/><rect x="818" y="299" width="8" height="1" fill="#000"/><rect x="818" y="307" width="8" height="1" fill="#000"/><rect x="818" y="314" width="8" height="1" fill="#000"/><rect x="818" y="322" width="8" height="1" fill="#000"/><rect x="818" y="330" width="8" height="1" fill="#000"/><rect x="818" y="338" width="8" height="1" fill="#000"/><rect x="818" y="346" width="8" height="1" fill="#000"/><rect x="818" y="353" width="8" height="1" fill="#000"/><rect x="818" y="361" width="8" height="1" fill="#000"/><rect x="818" y="369" width="8" height="1" fill="#000"/><rect x="818" y="377" width="8" height="1" fill="#000"/><rect x="818" y="385" width="8" height="1" fill="#000"/><rect x="818" y="392" width="26" height="1" fill="#000"/><rect x="818" y="400" width="8" height="1" fill="#000"/><rect x="818" y="408" width="8" height="1" fill="#000"/><rect x="818" y="416" width="8" height="1" fill="#000"/><rect x="818" y="424" width="8" height="1" fill="#000"/><rect x="818" y="432" width="8" height="1" fill="#000"/><rect x="818" y="439" width="8" height="1" fill="#000"/><rect x="818" y="447" width="8" height="1" fill="#000"/><rect x="818" y="455" width="8" height="1" fill="#000"/><rect x="818" y="463" width="8" height="1" fill="#000"/><rect x="818" y="471" width="8" height="1" fill="#000"/><rect x="818" y="478" width="8" height="1" fill="#000"/><rect x="818" y="486" width="8" height="1" fill="#000"/><rect x="818" y="494" width="8" height="1" fill="#000"/><rect x="818" y="502" width="8" height="1" fill="#000"/><rect x="818" y="510" width="8" height="1" fill="#000"/><rect x="818" y="517" width="8" height="1" fill="#000"/><rect x="818" y="525" width="8" height="1" fill="#000"/><rect x="818" y="533" width="8" height="1" fill="#000"/><rect x="818" y="541" width="8" height="1" fill="#000"/><rect x="818" y="549" width="26" height="1" fill="#000"/><rect x="818" y="556" width="8" height="1" fill="#000"/><rect x="818" y="564" width="8" height="1" fill="#000"/><rect x="818" y="572" width="8" height="1" fill="#000"/><rect x="818" y="580" width="8" height="1" fill="#000"/><rect x="818" y="588" width="8" height="1" fill="#000"/><rect x="818" y="596" width="8" height="1" fill="#000"/><rect x="818" y="603" width="8" height="1" fill="#000"/><rect x="818" y="611" width="8" height="1" fill="#000"/><rect x="818" y="619" width="8" height="1" fill="#000"/><rect x="818" y="627" width="8" height="1" fill="#000"/><rect x="818" y="635" width="8" height="1" fill="#000"/><rect x="818" y="642" width="8" height="1" fill="#000"/><rect x="818" y="650" width="8" height="1" fill="#000"/><rect x="818" y="658" width="8" height="1" fill="#000"/><rect x="818" y="666" width="8" height="1" fill="#000"/><rect x="818" y="674" width="8" height="1" fill="#000"/><rect x="818" y="681" width="8" height="1" fill="#000"/><rect x="818" y="689" width="8" height="1" fill="#000"/><rect x="818" y="697" width="8" height="1" fill="#000"/><rect x="818" y="705" width="26" height="1" fill="#000"/><rect x="818" y="713" width="8" height="1" fill="#000"/><rect x="818" y="721" width="8" height="1" fill="#000"/><rect x="818" y="728" width="8" height="1" fill="#000"/><rect x="818" y="736" width="8" height="1" fill="#000"/><rect x="818" y="744" width="8" height="1" fill="#000"/><rect x="818" y="752" width="8" height="1" fill="#000"/><rect x="818" y="760" width="8" height="1" fill="#000"/><rect x="818" y="767" width="8" height="1" fill="#000"/><rect x="818" y="775" width="8" height="1" fill="#000"/><rect x="818" y="2" width="11" height="1" fill="#000"/><path d="M823 5 L839.5 13.5 M839.5 10 V769.5 L822 779" stroke="#1c1c98" stroke-width="1" fill="none"/><text transform="translate(848.5,48.0) rotate(90)" font-family="Liberation Mono" font-size="11.67" fill="#222" stroke="#fff" stroke-width="0.22">143050400</text><text transform="translate(848.5,204.2) rotate(90)" font-family="Liberation Mono" font-size="11.67" fill="#222" stroke="#fff" stroke-width="0.22">143050200</text><text transform="translate(848.5,360.4) rotate(90)" font-family="Liberation Mono" font-size="11.67" fill="#222" stroke="#fff" stroke-width="0.22">143050000</text><text transform="translate(848.5,516.6) rotate(90)" font-family="Liberation Mono" font-size="11.67" fill="#222" stroke="#fff" stroke-width="0.22">143049800</text><text transform="translate(848.5,662.3) rotate(90)" font-family="Liberation Mono" font-size="11.67" fill="#222" stroke="#fff" stroke-width="0.22">143049600 Hz</text><rect x="860" y="1" width="80" height="781" fill="#525252"/><rect x="860" y="1" width="80" height="1" fill="#000"/><rect x="860" y="2" width="80" height="1" fill="#888"/><rect x="860" y="3" width="80" height="6" fill="#000"/><rect x="860" y="774" width="80" height="8" fill="#000"/><rect x="860" y="80" width="80" height="1" fill="#9a9a9a"/><rect x="860" y="158" width="80" height="1" fill="#9a9a9a"/><rect x="860" y="236" width="80" height="1" fill="#9a9a9a"/><rect x="860" y="314" width="80" height="1" fill="#9a9a9a"/><rect x="860" y="392" width="80" height="1" fill="#9a9a9a"/><rect x="860" y="471" width="80" height="1" fill="#9a9a9a"/><rect x="860" y="549" width="80" height="1" fill="#9a9a9a"/><rect x="860" y="627" width="80" height="1" fill="#9a9a9a"/><rect x="860" y="705" width="80" height="1" fill="#9a9a9a"/><path d="M860 10h1v1h-1zM860 13h4v1h-4zM860 14h8v1h-8zM860 15h11v1h-11zM860 16h17v1h-17zM860 17h5v1h-5zM860 18h13v1h-13zM860 19h14v1h-14zM860 20h9v1h-9zM860 21h12v1h-12zM860 22h17v1h-17zM860 24h14v1h-14zM860 25h13v1h-13zM860 26h16v1h-16zM860 27h18v1h-18zM860 29h13v1h-13zM860 30h2v1h-2zM860 31h5v1h-5zM860 32h16v1h-16zM860 33h15v1h-15zM860 34h15v1h-15zM860 35h24v1h-24zM860 36h18v1h-18zM860 37h9v1h-9zM860 38h5v1h-5zM860 39h3v1h-3zM860 40h9v1h-9zM860 41h10v1h-10zM860 42h11v1h-11zM860 43h19v1h-19zM860 44h11v1h-11zM860 45h14v1h-14zM860 46h17v1h-17zM860 47h5v1h-5zM860 48h6v1h-6zM860 49h4v1h-4zM860 51h12v1h-12zM860 52h11v1h-11zM860 53h10v1h-10zM860 55h14v1h-14zM860 56h8v1h-8zM860 57h17v1h-17zM860 62h22v1h-22zM860 63h19v1h-19zM860 64h24v1h-24zM860 65h11v1h-11zM860 66h23v1h-23zM860 67h10v1h-10zM860 68h5v1h-5zM860 69h8v1h-8zM860 70h21v1h-21zM860 71h30v1h-30zM860 72h23v1h-23zM860 74h24v1h-24zM860 76h26v1h-26zM860 77h23v1h-23zM860 78h22v1h-22zM860 79h17v1h-17zM860 80h19v1h-19zM860 81h16v1h-16zM860 82h14v1h-14zM860 83h18v1h-18zM860 88h24v1h-24zM860 89h27v1h-27zM860 90h25v1h-25zM860 91h25v1h-25zM860 93h10v1h-10zM860 94h21v1h-21zM860 95h16v1h-16zM860 97h23v1h-23zM860 99h5v1h-5zM860 101h13v1h-13zM860 102h7v1h-7zM860 103h20v1h-20zM860 105h22v1h-22zM860 109h26v1h-26zM860 110h25v1h-25zM860 111h28v1h-28zM860 112h29v1h-29zM860 114h24v1h-24zM860 115h21v1h-21zM860 117h16v1h-16zM860 118h10v1h-10zM860 119h12v1h-12zM860 120h17v1h-17zM860 121h16v1h-16zM860 122h17v1h-17zM860 123h3v1h-3zM860 124h10v1h-10zM860 125h23v1h-23zM860 126h26v1h-26zM860 127h22v1h-22zM860 128h7v1h-7zM860 129h15v1h-15zM860 130h12v1h-12zM860 131h22v1h-22zM860 132h20v1h-20zM860 133h23v1h-23zM860 134h12v1h-12zM860 135h3v1h-3zM860 136h24v1h-24zM860 137h17v1h-17zM860 138h17v1h-17zM860 139h25v1h-25zM860 140h25v1h-25zM860 141h15v1h-15zM860 142h17v1h-17zM860 143h19v1h-19zM860 144h14v1h-14zM860 145h19v1h-19zM860 146h5v1h-5zM860 147h27v1h-27zM860 148h20v1h-20zM860 149h28v1h-28zM860 150h14v1h-14zM860 151h15v1h-15zM860 152h22v1h-22zM860 153h17v1h-17zM860 154h14v1h-14zM860 155h9v1h-9zM860 156h17v1h-17zM860 157h7v1h-7zM860 158h14v1h-14zM860 162h17v1h-17zM860 163h11v1h-11zM860 164h25v1h-25zM860 165h14v1h-14zM860 166h27v1h-27zM860 167h22v1h-22zM860 168h21v1h-21zM860 169h25v1h-25zM860 170h18v1h-18zM860 171h24v1h-24zM860 172h15v1h-15zM860 173h26v1h-26zM860 174h17v1h-17zM860 175h4v1h-4zM860 176h6v1h-6zM860 177h8v1h-8zM860 178h16v1h-16zM860 189h5v1h-5zM860 190h14v1h-14zM860 191h12v1h-12zM860 192h14v1h-14zM860 194h10v1h-10zM860 195h21v1h-21zM860 196h22v1h-22zM860 198h27v1h-27zM860 199h24v1h-24zM860 200h24v1h-24zM860 201h19v1h-19zM860 202h9v1h-9zM860 203h22v1h-22zM860 204h18v1h-18zM860 205h13v1h-13zM860 206h7v1h-7zM860 207h15v1h-15zM860 209h13v1h-13zM860 211h21v1h-21zM860 212h23v1h-23zM860 213h8v1h-8zM860 214h16v1h-16zM860 215h9v1h-9zM860 216h7v1h-7zM860 217h18v1h-18zM860 218h24v1h-24zM860 219h18v1h-18zM860 220h8v1h-8zM860 221h24v1h-24zM860 222h21v1h-21zM860 223h7v1h-7zM860 224h15v1h-15zM860 225h11v1h-11zM860 226h9v1h-9zM860 227h13v1h-13zM860 228h16v1h-16zM860 229h11v1h-11zM860 230h6v1h-6zM860 232h16v1h-16zM860 233h11v1h-11zM860 234h18v1h-18zM860 235h15v1h-15zM860 237h17v1h-17zM860 238h27v1h-27zM860 239h4v1h-4zM860 240h10v1h-10zM860 241h13v1h-13zM860 242h15v1h-15zM860 245h22v1h-22zM860 246h17v1h-17zM860 247h12v1h-12zM860 248h7v1h-7zM860 249h13v1h-13zM860 250h15v1h-15zM860 251h20v1h-20zM860 252h17v1h-17zM860 253h15v1h-15zM860 254h11v1h-11zM860 255h8v1h-8zM860 257h12v1h-12zM860 258h14v1h-14zM860 259h11v1h-11zM860 261h18v1h-18zM860 262h17v1h-17zM860 263h13v1h-13zM860 264h17v1h-17zM860 265h18v1h-18zM860 266h20v1h-20zM860 267h13v1h-13zM860 268h7v1h-7zM860 269h6v1h-6zM860 270h15v1h-15zM860 271h4v1h-4zM860 272h6v1h-6zM860 273h12v1h-12zM860 275h11v1h-11zM860 276h6v1h-6zM860 277h12v1h-12zM860 278h24v1h-24zM860 279h15v1h-15zM860 280h6v1h-6zM860 281h16v1h-16zM860 282h25v1h-25zM860 283h16v1h-16zM860 284h19v1h-19zM860 285h22v1h-22zM860 286h14v1h-14zM860 287h20v1h-20zM860 289h21v1h-21zM860 290h14v1h-14zM860 291h11v1h-11zM860 292h13v1h-13zM860 293h13v1h-13zM860 294h12v1h-12zM860 295h17v1h-17zM860 296h11v1h-11zM860 301h13v1h-13zM860 302h9v1h-9zM860 303h3v1h-3zM860 304h3v1h-3zM860 305h7v1h-7zM860 306h6v1h-6zM860 309h6v1h-6zM860 310h10v1h-10zM860 313h17v1h-17zM860 314h24v1h-24zM860 317h2v1h-2zM860 319h16v1h-16zM860 320h17v1h-17zM860 321h15v1h-15zM860 322h14v1h-14zM860 323h16v1h-16zM860 324h11v1h-11zM860 325h11v1h-11zM860 326h5v1h-5zM860 327h15v1h-15zM860 328h15v1h-15zM860 329h12v1h-12zM860 330h11v1h-11zM860 331h2v1h-2zM860 332h14v1h-14zM860 333h12v1h-12zM860 334h15v1h-15zM860 335h19v1h-19zM860 336h18v1h-18zM860 337h20v1h-20zM860 338h18v1h-18zM860 339h20v1h-20zM860 340h13v1h-13zM860 342h9v1h-9zM860 343h10v1h-10zM860 344h16v1h-16zM860 345h18v1h-18zM860 346h15v1h-15zM860 347h15v1h-15zM860 348h15v1h-15zM860 349h20v1h-20zM860 350h12v1h-12zM860 351h13v1h-13zM860 352h20v1h-20zM860 353h15v1h-15zM860 354h18v1h-18zM860 355h15v1h-15zM860 356h13v1h-13zM860 357h12v1h-12zM860 358h11v1h-11zM860 360h14v1h-14zM860 362h12v1h-12zM860 363h24v1h-24zM860 370h14v1h-14zM860 371h3v1h-3zM860 372h18v1h-18zM860 373h14v1h-14zM860 374h16v1h-16zM860 375h15v1h-15zM860 376h19v1h-19zM860 377h12v1h-12zM860 378h15v1h-15zM860 379h11v1h-11zM860 380h11v1h-11zM860 381h2v1h-2zM860 382h5v1h-5zM860 383h4v1h-4zM860 384h8v1h-8zM860 385h22v1h-22zM860 387h11v1h-11zM860 389h10v1h-10zM860 392h6v1h-6zM860 393h12v1h-12zM860 394h16v1h-16zM860 395h19v1h-19zM860 396h10v1h-10zM860 397h3v1h-3zM860 398h16v1h-16zM860 399h2v1h-2zM860 400h13v1h-13zM860 401h11v1h-11zM860 402h14v1h-14zM860 403h14v1h-14zM860 404h3v1h-3zM860 405h13v1h-13zM860 406h8v1h-8zM860 407h6v1h-6zM860 408h10v1h-10zM860 410h12v1h-12zM860 411h13v1h-13zM860 412h20v1h-20zM860 413h16v1h-16zM860 415h10v1h-10zM860 416h10v1h-10zM860 418h5v1h-5zM860 419h5v1h-5zM860 420h9v1h-9zM860 421h12v1h-12zM860 422h13v1h-13zM860 423h19v1h-19zM860 424h21v1h-21zM860 425h3v1h-3zM860 426h16v1h-16zM860 427h2v1h-2zM860 428h15v1h-15zM860 430h15v1h-15zM860 431h9v1h-9zM860 432h5v1h-5zM860 433h5v1h-5zM860 434h7v1h-7zM860 435h9v1h-9zM860 436h17v1h-17zM860 437h7v1h-7zM860 438h3v1h-3zM860 439h8v1h-8zM860 440h12v1h-12zM860 441h10v1h-10zM860 442h11v1h-11zM860 458h13v1h-13zM860 459h16v1h-16zM860 460h16v1h-16zM860 461h20v1h-20zM860 462h14v1h-14zM860 463h14v1h-14zM860 464h7v1h-7zM860 465h7v1h-7zM860 466h5v1h-5zM860 467h4v1h-4zM860 468h2v1h-2zM860 469h4v1h-4zM860 470h14v1h-14zM860 471h4v1h-4zM860 472h18v1h-18zM860 473h19v1h-19zM860 474h11v1h-11zM860 475h17v1h-17zM860 476h18v1h-18zM860 477h13v1h-13zM860 478h13v1h-13zM860 479h8v1h-8zM860 480h6v1h-6zM860 481h5v1h-5zM860 482h9v1h-9zM860 483h13v1h-13zM860 484h6v1h-6zM860 485h17v1h-17zM860 487h14v1h-14zM860 488h7v1h-7zM860 489h5v1h-5zM860 490h5v1h-5zM860 491h7v1h-7zM860 492h8v1h-8zM860 493h10v1h-10zM860 495h11v1h-11zM860 496h9v1h-9zM860 497h12v1h-12zM860 498h3v1h-3zM860 499h13v1h-13zM860 500h15v1h-15zM860 502h13v1h-13zM860 503h13v1h-13zM860 505h5v1h-5zM860 506h9v1h-9zM860 507h10v1h-10zM860 508h15v1h-15zM860 509h10v1h-10zM860 510h5v1h-5zM860 511h13v1h-13zM860 513h6v1h-6zM860 514h10v1h-10zM860 515h12v1h-12zM860 516h10v1h-10zM860 517h6v1h-6zM860 518h7v1h-7zM860 519h13v1h-13zM860 520h6v1h-6zM860 521h6v1h-6zM860 522h3v1h-3zM860 525h4v1h-4zM860 526h6v1h-6zM860 527h8v1h-8zM860 530h14v1h-14zM860 532h16v1h-16zM860 533h17v1h-17zM860 534h3v1h-3zM860 535h10v1h-10zM860 536h15v1h-15zM860 542h2v1h-2zM860 543h5v1h-5zM860 544h15v1h-15zM860 545h8v1h-8zM860 546h6v1h-6zM860 547h8v1h-8zM860 548h6v1h-6zM860 549h9v1h-9zM860 550h14v1h-14zM860 551h18v1h-18zM860 552h10v1h-10zM860 553h11v1h-11zM860 554h5v1h-5zM860 555h7v1h-7zM860 556h10v1h-10zM860 557h11v1h-11zM860 558h7v1h-7zM860 559h7v1h-7zM860 560h7v1h-7zM860 561h7v1h-7zM860 562h13v1h-13zM860 563h4v1h-4zM860 564h5v1h-5zM860 566h12v1h-12zM860 567h9v1h-9zM860 568h12v1h-12zM860 569h17v1h-17zM860 571h5v1h-5zM860 572h6v1h-6zM860 573h10v1h-10zM860 574h9v1h-9zM860 575h8v1h-8zM860 576h11v1h-11zM860 577h3v1h-3zM860 578h20v1h-20zM860 579h17v1h-17zM860 580h20v1h-20zM860 581h10v1h-10zM860 582h13v1h-13zM860 583h13v1h-13zM860 584h13v1h-13zM860 585h16v1h-16zM860 587h18v1h-18zM860 588h15v1h-15zM860 589h12v1h-12zM860 590h11v1h-11zM860 591h7v1h-7zM860 592h8v1h-8zM860 593h7v1h-7zM860 598h8v1h-8zM860 605h11v1h-11zM860 606h13v1h-13zM860 607h19v1h-19zM860 608h14v1h-14zM860 609h11v1h-11zM860 610h10v1h-10zM860 611h10v1h-10zM860 612h3v1h-3zM860 613h2v1h-2zM860 614h13v1h-13zM860 615h5v1h-5zM860 617h16v1h-16zM860 618h14v1h-14zM860 619h17v1h-17zM860 620h20v1h-20zM860 621h18v1h-18zM860 622h17v1h-17zM860 623h14v1h-14zM860 624h16v1h-16zM860 625h15v1h-15zM860 626h10v1h-10zM860 627h3v1h-3zM860 628h10v1h-10zM860 629h5v1h-5zM860 630h7v1h-7zM860 631h7v1h-7zM860 632h7v1h-7zM860 633h12v1h-12zM860 634h5v1h-5zM860 635h7v1h-7zM860 636h9v1h-9zM860 637h5v1h-5zM860 638h10v1h-10zM860 642h12v1h-12zM860 643h11v1h-11zM860 644h14v1h-14zM860 645h15v1h-15zM860 646h14v1h-14zM860 647h12v1h-12zM860 648h17v1h-17zM860 649h2v1h-2zM860 651h15v1h-15zM860 652h12v1h-12zM860 653h8v1h-8zM860 654h8v1h-8zM860 655h3v1h-3zM860 656h7v1h-7zM860 657h12v1h-12zM860 658h9v1h-9zM860 659h9v1h-9zM860 660h9v1h-9zM860 661h6v1h-6zM860 662h7v1h-7zM860 663h2v1h-2zM860 664h6v1h-6zM860 665h14v1h-14zM860 666h13v1h-13zM860 667h11v1h-11zM860 668h16v1h-16zM860 669h10v1h-10zM860 670h13v1h-13zM860 672h4v1h-4zM860 673h10v1h-10zM860 674h2v1h-2zM860 675h13v1h-13zM860 676h7v1h-7zM860 677h15v1h-15zM860 678h14v1h-14zM860 679h15v1h-15zM860 680h16v1h-16zM860 681h12v1h-12zM860 682h14v1h-14zM860 683h12v1h-12zM860 684h6v1h-6zM860 686h10v1h-10zM860 687h11v1h-11zM860 688h14v1h-14zM860 689h7v1h-7zM860 690h5v1h-5zM860 691h3v1h-3zM860 692h3v1h-3zM860 693h5v1h-5zM860 694h8v1h-8zM860 695h8v1h-8zM860 697h4v1h-4zM860 698h12v1h-12zM860 699h14v1h-14zM860 700h6v1h-6zM860 701h10v1h-10zM860 702h10v1h-10zM860 703h6v1h-6zM860 704h15v1h-15zM860 705h12v1h-12zM860 706h16v1h-16zM860 707h15v1h-15zM860 708h16v1h-16zM860 709h6v1h-6zM860 710h20v1h-20zM860 711h16v1h-16zM860 712h23v1h-23zM860 713h18v1h-18zM860 714h16v1h-16zM860 720h10v1h-10zM860 722h12v1h-12zM860 723h13v1h-13zM860 724h6v1h-6zM860 725h9v1h-9zM860 726h13v1h-13zM860 727h14v1h-14zM860 728h7v1h-7zM860 729h7v1h-7zM860 730h5v1h-5zM860 731h6v1h-6zM860 732h7v1h-7zM860 733h2v1h-2zM860 734h12v1h-12zM860 735h4v1h-4zM860 736h16v1h-16zM860 737h5v1h-5zM860 738h10v1h-10zM860 739h15v1h-15zM860 740h16v1h-16zM860 741h18v1h-18zM860 742h17v1h-17zM860 743h14v1h-14zM860 744h16v1h-16zM860 745h10v1h-10zM860 746h19v1h-19zM860 747h20v1h-20zM860 748h26v1h-26zM860 749h23v1h-23zM860 750h18v1h-18zM860 751h15v1h-15zM860 752h16v1h-16zM860 753h16v1h-16zM860 754h5v1h-5zM860 755h12v1h-12zM860 756h8v1h-8zM860 757h11v1h-11zM860 758h2v1h-2zM860 759h7v1h-7zM860 760h10v1h-10zM860 761h10v1h-10zM860 762h7v1h-7zM860 763h8v1h-8zM860 764h12v1h-12zM860 765h14v1h-14zM860 768h8v1h-8zM860 771h2v1h-2zM860 772h7v1h-7zM860 773h7v1h-7z" fill="#000"/><path d="M860 58h28v1h-28zM860 59h21v1h-21zM860 60h23v1h-23zM860 61h25v1h-25zM860 84h26v1h-26zM860 85h28v1h-28zM860 86h27v1h-27zM860 87h26v1h-26zM860 92h22v1h-22zM860 108h30v1h-30zM860 159h31v1h-31zM860 160h32v1h-32zM860 161h28v1h-28zM860 179h24v1h-24zM860 180h27v1h-27zM860 181h33v1h-33zM860 182h31v1h-31zM860 183h28v1h-28zM860 184h28v1h-28zM860 185h27v1h-27zM860 186h26v1h-26zM860 188h20v1h-20zM860 193h30v1h-30zM860 208h25v1h-25zM860 243h22v1h-22zM860 244h20v1h-20zM860 288h24v1h-24zM860 297h20v1h-20zM860 298h22v1h-22zM860 299h18v1h-18zM860 307h21v1h-21zM860 308h22v1h-22zM860 311h18v1h-18zM860 312h19v1h-19zM860 315h18v1h-18zM860 316h20v1h-20zM860 318h23v1h-23zM860 361h15v1h-15zM860 364h17v1h-17zM860 365h19v1h-19zM860 366h19v1h-19zM860 367h16v1h-16zM860 368h15v1h-15zM860 369h21v1h-21zM860 388h17v1h-17zM860 390h20v1h-20zM860 391h17v1h-17zM860 417h21v1h-21zM860 429h20v1h-20zM860 443h17v1h-17zM860 444h21v1h-21zM860 445h16v1h-16zM860 446h14v1h-14zM860 447h19v1h-19zM860 448h21v1h-21zM860 449h20v1h-20zM860 450h20v1h-20zM860 451h19v1h-19zM860 452h15v1h-15zM860 453h20v1h-20zM860 454h21v1h-21zM860 455h15v1h-15zM860 456h18v1h-18zM860 457h15v1h-15zM860 486h17v1h-17zM860 528h15v1h-15zM860 529h18v1h-18zM860 537h18v1h-18zM860 538h17v1h-17zM860 540h17v1h-17zM860 541h16v1h-16zM860 565h15v1h-15zM860 570h14v1h-14zM860 594h20v1h-20zM860 595h17v1h-17zM860 596h15v1h-15zM860 599h14v1h-14zM860 600h17v1h-17zM860 601h18v1h-18zM860 602h20v1h-20zM860 604h19v1h-19zM860 639h18v1h-18zM860 641h19v1h-19zM860 715h20v1h-20zM860 716h20v1h-20zM860 717h21v1h-21zM860 718h20v1h-20zM860 719h19v1h-19zM860 769h11v1h-11zM860 770h14v1h-14z" fill="#0c0c58"/><clipPath id="pc"><rect x="860" y="3" width="80" height="779"/></clipPath><g clip-path="url(#pc)"><polyline points="861.0,6.5 861.2,7.5 861.4,8.5 861.6,9.5 861.8,10.5 862.0,11.5 864.8,12.5 867.6,13.5 870.4,14.5 873.2,15.5 876.0,16.5 876.1,17.5 876.2,18.5 876.3,19.5 875.5,20.5 876.4,21.5 877.1,22.5 876.3,23.5 876.6,24.5 875.8,25.5 875.4,26.5 877.0,27.5 875.9,28.5 876.8,29.5 879.7,30.5 880.3,31.5 880.3,32.5 880.4,33.5 879.8,34.5 879.4,35.5 881.5,36.5 880.7,37.5 879.9,38.5 880.7,39.5 880.5,40.5 881.6,41.5 880.5,42.5 879.9,43.5 880.0,44.5 881.7,45.5 882.1,46.5 881.8,47.5 881.5,48.5 881.6,49.5 880.6,50.5 881.4,51.5 881.0,52.5 881.4,53.5 881.5,54.5 881.9,55.5 881.7,56.5 882.9,57.5 883.2,58.5 882.5,59.5 883.4,60.5 883.3,61.5 884.0,62.5 884.9,63.5 884.4,64.5 884.7,65.5 885.1,66.5 884.8,67.5 886.2,68.5 885.3,69.5 883.5,70.5 883.5,71.5 882.8,72.5 884.8,73.5 883.1,74.5 881.7,75.5 882.4,76.5 881.6,77.5 881.1,78.5 880.9,79.5 880.2,80.5 880.5,81.5 879.3,82.5 880.6,83.5 882.0,84.5 883.8,85.5 883.4,86.5 883.9,87.5 883.0,88.5 884.5,89.5 886.1,90.5 885.3,91.5 884.5,92.5 884.6,93.5 886.0,94.5 884.5,95.5 886.0,96.5 884.8,97.5 884.3,98.5 885.1,99.5 885.8,100.5 886.5,101.5 887.3,102.5 885.5,103.5 885.7,104.5 886.5,105.5 886.4,106.5 887.2,107.5 886.7,108.5 886.2,109.5 884.3,110.5 883.7,111.5 885.8,112.5 885.2,113.5 886.1,114.5 887.0,115.5 886.8,116.5 887.7,117.5 886.9,118.5 887.6,119.5 887.4,120.5 886.2,121.5 885.3,122.5 886.4,123.5 888.6,124.5 889.4,125.5 889.6,126.5 890.1,127.5 890.7,128.5 890.2,129.5 891.5,130.5 891.4,131.5 891.0,132.5 894.9,133.5 894.4,134.5 893.7,135.5 894.5,136.5 893.4,137.5 893.2,138.5 896.1,139.5 896.7,140.5 895.8,141.5 895.2,142.5 896.5,143.5 896.6,144.5 898.9,145.5 897.6,146.5 900.0,147.5 899.5,148.5 899.3,149.5 900.6,150.5 901.3,151.5 901.9,152.5 902.6,153.5 902.7,154.5 903.5,155.5 904.8,156.5 905.0,157.5 905.7,158.5 906.5,159.5 907.9,160.5 909.6,161.5 911.3,162.5 911.9,163.5 913.5,164.5 914.8,165.5 915.5,166.5 920.3,167.5 928.0,168.5 931.5,169.5 934.9,170.5 937.1,171.5 937.4,172.5 937.3,173.5 936.9,174.5 935.2,175.5 933.4,176.5 932.1,177.5 925.1,178.5 921.4,179.5 918.7,180.5 916.0,181.5 912.8,182.5 911.4,183.5 910.0,184.5 909.0,185.5 907.5,186.5 906.3,187.5 905.0,188.5 904.9,189.5 903.5,190.5 903.9,191.5 902.5,192.5 901.9,193.5 901.1,194.5 900.7,195.5 900.3,196.5 900.5,197.5 899.8,198.5 898.7,199.5 898.2,200.5 897.6,201.5 896.8,202.5 896.6,203.5 896.1,204.5 895.4,205.5 894.7,206.5 894.5,207.5 893.8,208.5 893.6,209.5 893.1,210.5 891.8,211.5 890.6,212.5 890.4,213.5 889.8,214.5 889.0,215.5 888.5,216.5 888.9,217.5 888.3,218.5 888.6,219.5 888.1,220.5 886.9,221.5 886.8,222.5 886.9,223.5 885.7,224.5 885.1,225.5 885.3,226.5 885.2,227.5 885.9,228.5 885.4,229.5 886.0,230.5 885.2,231.5 884.9,232.5 885.2,233.5 885.4,234.5 885.3,235.5 885.7,236.5 886.0,237.5 886.2,238.5 885.3,239.5 885.1,240.5 884.4,241.5 884.6,242.5 883.2,243.5 883.0,244.5 882.9,245.5 882.7,246.5 883.1,247.5 882.2,248.5 881.8,249.5 880.4,250.5 881.1,251.5 880.7,252.5 882.0,253.5 882.6,254.5 880.3,255.5 879.1,256.5 881.0,257.5 881.5,258.5 880.0,259.5 880.6,260.5 879.8,261.5 881.2,262.5 880.0,263.5 879.9,264.5 880.8,265.5 880.9,266.5 881.7,267.5 881.6,268.5 879.8,269.5 880.4,270.5 879.4,271.5 881.2,272.5 882.1,273.5 882.2,274.5 883.1,275.5 882.3,276.5 882.5,277.5 882.1,278.5 881.8,279.5 881.6,280.5 880.9,281.5 881.9,282.5 879.8,283.5 878.3,284.5 878.2,285.5 880.2,286.5 879.6,287.5 878.7,288.5 878.2,289.5 879.1,290.5 879.0,291.5 880.1,292.5 879.2,293.5 879.8,294.5 878.6,295.5 879.1,296.5 881.5,297.5 879.9,298.5 879.1,299.5 879.6,300.5 878.2,301.5 877.9,302.5 877.7,303.5 878.3,304.5 877.2,305.5 879.0,306.5 878.9,307.5 878.8,308.5 878.4,309.5 878.4,310.5 876.4,311.5 878.5,312.5 877.6,313.5 878.7,314.5 878.4,315.5 878.2,316.5 878.7,317.5 879.9,318.5 879.0,319.5 878.1,320.5 878.6,321.5 876.3,322.5 876.5,323.5 876.5,324.5 877.0,325.5 876.4,326.5 878.0,327.5 877.8,328.5 878.1,329.5 878.1,330.5 877.8,331.5 877.4,332.5 878.8,333.5 879.2,334.5 879.9,335.5 878.8,336.5 878.7,337.5 878.6,338.5 878.0,339.5 878.0,340.5 876.6,341.5 876.2,342.5 876.3,343.5 876.1,344.5 877.4,345.5 877.9,346.5 878.3,347.5 877.8,348.5 878.7,349.5 879.1,350.5 878.9,351.5 878.1,352.5 879.3,353.5 877.5,354.5 876.2,355.5 875.8,356.5 877.8,357.5 877.9,358.5 877.3,359.5 875.5,360.5 876.4,361.5 876.2,362.5 875.1,363.5 877.3,364.5 877.5,365.5 878.8,366.5 878.2,367.5 878.4,368.5 877.4,369.5 878.0,370.5 877.4,371.5 878.0,372.5 877.9,373.5 876.8,374.5 877.2,375.5 877.5,376.5 876.9,377.5 877.1,378.5 878.1,379.5 878.8,380.5 878.2,381.5 875.8,382.5 877.3,383.5 878.9,384.5 877.9,385.5 876.9,386.5 877.4,387.5 877.5,388.5 878.2,389.5 877.2,390.5 878.8,391.5 878.8,392.5 877.2,393.5 878.1,394.5 877.6,395.5 878.0,396.5 877.9,397.5 877.6,398.5 877.7,399.5 877.1,400.5 876.5,401.5 876.6,402.5 876.6,403.5 877.2,404.5 877.3,405.5 875.8,406.5 877.2,407.5 877.1,408.5 877.8,409.5 878.0,410.5 877.8,411.5 877.9,412.5 876.2,413.5 877.9,414.5 879.1,415.5 878.6,416.5 877.3,417.5 877.7,418.5 877.0,419.5 878.4,420.5 877.3,421.5 876.1,422.5 875.8,423.5 875.7,424.5 876.9,425.5 876.8,426.5 877.1,427.5 876.6,428.5 877.9,429.5 877.3,430.5 877.2,431.5 878.4,432.5 877.8,433.5 876.8,434.5 876.6,435.5 877.6,436.5 877.5,437.5 876.4,438.5 877.6,439.5 875.8,440.5 874.4,441.5 874.7,442.5 874.0,443.5 875.2,444.5 875.9,445.5 876.0,446.5 875.8,447.5 875.3,448.5 876.8,449.5 875.0,450.5 876.4,451.5 876.7,452.5 876.6,453.5 877.0,454.5 875.4,455.5 876.8,456.5 877.1,457.5 877.8,458.5 875.4,459.5 876.2,460.5 876.2,461.5 874.4,462.5 875.1,463.5 875.9,464.5 875.5,465.5 876.3,466.5 876.9,467.5 876.3,468.5 876.1,469.5 876.9,470.5 875.8,471.5 876.6,472.5 877.6,473.5 877.0,474.5 877.0,475.5 876.7,476.5 877.3,477.5 875.5,478.5 874.5,479.5 874.7,480.5 875.0,481.5 876.5,482.5 877.6,483.5 877.5,484.5 878.0,485.5 876.8,486.5 876.1,487.5 874.9,488.5 876.6,489.5 876.9,490.5 876.6,491.5 875.3,492.5 874.9,493.5 876.0,494.5 876.1,495.5 877.1,496.5 876.9,497.5 875.9,498.5 875.1,499.5 875.6,500.5 877.4,501.5 878.5,502.5 876.7,503.5 876.9,504.5 875.9,505.5 876.3,506.5 873.8,507.5 874.4,508.5 873.7,509.5 876.2,510.5 875.8,511.5 876.4,512.5 876.3,513.5 875.1,514.5 876.1,515.5 877.1,516.5 876.8,517.5 876.9,518.5 877.5,519.5 877.3,520.5 876.6,521.5 874.9,522.5 874.8,523.5 874.8,524.5 876.1,525.5 877.2,526.5 876.7,527.5 877.2,528.5 874.6,529.5 875.6,530.5 874.8,531.5 876.2,532.5 877.2,533.5 877.6,534.5 877.5,535.5 877.8,536.5 878.5,537.5 876.8,538.5 877.8,539.5 876.6,540.5 875.2,541.5 876.1,542.5 876.7,543.5 876.7,544.5 875.8,545.5 876.4,546.5 876.0,547.5 878.2,548.5 877.4,549.5 877.1,550.5 876.1,551.5 876.6,552.5 877.7,553.5 876.3,554.5 875.8,555.5 874.3,556.5 875.1,557.5 876.9,558.5 875.4,559.5 875.3,560.5 875.0,561.5 875.2,562.5 874.9,563.5 875.1,564.5 874.5,565.5 875.4,566.5 876.5,567.5 876.8,568.5 874.7,569.5 876.4,570.5 876.8,571.5 877.3,572.5 875.8,573.5 875.3,574.5 876.1,575.5 877.5,576.5 875.8,577.5 876.1,578.5 876.3,579.5 875.8,580.5 876.1,581.5 875.5,582.5 876.7,583.5 874.9,584.5 875.6,585.5 875.2,586.5 875.4,587.5 874.8,588.5 872.7,589.5 875.5,590.5 876.3,591.5 876.4,592.5 876.0,593.5 876.2,594.5 875.7,595.5 875.8,596.5 877.0,597.5 875.8,598.5 875.0,599.5 877.0,600.5 875.9,601.5 876.0,602.5 875.7,603.5 876.2,604.5 876.5,605.5 876.2,606.5 875.1,607.5 874.6,608.5 875.2,609.5 877.0,610.5 874.8,611.5 875.2,612.5 875.8,613.5 875.2,614.5 875.7,615.5 875.6,616.5 876.3,617.5 877.4,618.5 876.2,619.5 876.2,620.5 876.3,621.5 876.1,622.5 875.9,623.5 873.9,624.5 874.8,625.5 874.3,626.5 874.6,627.5 875.4,628.5 876.0,629.5 875.4,630.5 875.1,631.5 875.1,632.5 874.4,633.5 876.3,634.5 877.4,635.5 876.3,636.5 877.3,637.5 877.1,638.5 875.3,639.5 876.2,640.5 876.4,641.5 876.1,642.5 874.5,643.5 874.5,644.5 873.0,645.5 874.2,646.5 874.6,647.5 874.0,648.5 873.7,649.5 875.7,650.5 874.2,651.5 875.5,652.5 875.5,653.5 876.5,654.5 874.6,655.5 875.1,656.5 876.3,657.5 875.7,658.5 874.3,659.5 873.2,660.5 873.7,661.5 875.4,662.5 876.7,663.5 876.1,664.5 876.5,665.5 876.8,666.5 876.6,667.5 875.2,668.5 875.9,669.5 874.8,670.5 875.1,671.5 875.9,672.5 876.5,673.5 875.8,674.5 876.5,675.5 877.2,676.5 877.1,677.5 876.2,678.5 876.0,679.5 875.7,680.5 875.5,681.5 876.0,682.5 876.6,683.5 876.0,684.5 876.3,685.5 876.0,686.5 875.8,687.5 874.7,688.5 875.3,689.5 875.2,690.5 875.6,691.5 876.4,692.5 876.6,693.5 876.7,694.5 875.8,695.5 874.4,696.5 874.8,697.5 875.3,698.5 875.8,699.5 877.1,700.5 876.9,701.5 877.7,702.5 876.7,703.5 875.6,704.5 876.7,705.5 875.6,706.5 874.7,707.5 875.2,708.5 876.2,709.5 877.4,710.5 877.1,711.5 877.8,712.5 877.3,713.5 875.8,714.5 875.5,715.5 874.9,716.5 875.9,717.5 874.8,718.5 874.9,719.5 875.4,720.5 876.6,721.5 876.5,722.5 875.4,723.5 875.0,724.5 874.2,725.5 876.0,726.5 872.8,727.5 870.6,728.5 870.6,729.5 871.3,730.5 872.9,731.5 875.1,732.5 875.5,733.5 876.0,734.5 876.7,735.5 877.3,736.5 876.8,737.5 878.0,738.5 878.1,739.5 878.6,740.5 879.2,741.5 879.7,742.5 883.5,743.5 885.7,744.5 889.6,745.5 891.6,746.5 890.1,747.5 886.8,748.5 883.7,749.5 880.1,750.5 879.3,751.5 878.8,752.5 875.9,753.5 874.9,754.5 874.2,755.5 873.9,756.5 874.7,757.5 875.3,758.5 875.4,759.5 875.2,760.5 877.0,761.5 876.0,762.5 875.5,763.5 876.2,764.5 877.1,765.5 875.3,766.5 874.0,767.5 873.0,768.5 872.0,769.5 871.0,770.5 870.0,771.5 869.0,772.5 868.0,773.5 866.9,774.5 865.9,775.5 864.8,776.5 863.7,777.5 862.6,778.5 861.6,779.5 860.5,780.5" fill="none" stroke="#b82c2c" stroke-width="1.5"/><polyline points="861.0,6.5 870.5,7.5 880.0,8.5 880.9,9.5 881.9,10.5 882.8,11.5 885.1,12.5 887.7,13.5 887.5,14.5 887.2,15.5 884.6,16.5 895.2,17.5 894.3,18.5 894.1,19.5 891.6,20.5 889.3,21.5 887.9,22.5 890.3,23.5 893.8,24.5 892.8,25.5 891.2,26.5 891.7,27.5 891.7,28.5 891.1,29.5 894.1,30.5 895.0,31.5 896.2,32.5 901.4,33.5 901.3,34.5 902.4,35.5 899.8,36.5 899.4,37.5 897.1,38.5 894.2,39.5 893.6,40.5 896.2,41.5 899.2,42.5 904.4,43.5 901.5,44.5 897.6,45.5 899.1,46.5 901.8,47.5 899.5,48.5 900.4,49.5 903.2,50.5 902.8,51.5 903.0,52.5 902.0,53.5 901.2,54.5 903.7,55.5 903.3,56.5 901.4,57.5 901.1,58.5 899.4,59.5 898.6,60.5 899.0,61.5 899.2,62.5 905.4,63.5 903.2,64.5 903.5,65.5 908.1,66.5 903.7,67.5 905.2,68.5 907.4,69.5 905.6,70.5 904.2,71.5 901.7,72.5 902.4,73.5 900.8,74.5 903.8,75.5 903.5,76.5 901.3,77.5 903.4,78.5 899.1,79.5 897.7,80.5 901.7,81.5 902.6,82.5 900.3,83.5 900.9,84.5 902.8,85.5 903.0,86.5 905.5,87.5 906.2,88.5 907.4,89.5 906.5,90.5 907.0,91.5 905.4,92.5 906.6,93.5 906.8,94.5 907.6,95.5 907.0,96.5 905.1,97.5 905.1,98.5 908.0,99.5 905.5,100.5 905.3,101.5 909.7,102.5 909.9,103.5 910.8,104.5 908.4,105.5 908.3,106.5 910.7,107.5 915.8,108.5 909.3,109.5 907.4,110.5 911.9,111.5 913.0,112.5 910.9,113.5 914.5,114.5 914.4,115.5 913.1,116.5 913.7,117.5 913.2,118.5 915.0,119.5 913.7,120.5 912.5,121.5 913.2,122.5 916.0,123.5 918.9,124.5 915.3,125.5 912.9,126.5 914.5,127.5 916.5,128.5 913.5,129.5 916.2,130.5 914.6,131.5 919.0,132.5 917.5,133.5 911.2,134.5 913.1,135.5 914.9,136.5 917.2,137.5 918.3,138.5 921.8,139.5 923.1,140.5 925.6,141.5 927.3,142.5 928.6,143.5 929.5,144.5 930.3,145.5 930.8,146.5 931.2,147.5 931.3,148.5 932.5,149.5 932.1,150.5 932.4,151.5 931.5,152.5 932.5,153.5 933.5,154.5 932.9,155.5 933.5,156.5 933.0,157.5 933.1,158.5 933.9,159.5 933.5,160.5 936.0,161.5 937.7,162.5 939.1,163.5 941.1,164.5 942.0,165.5 941.7,166.5 940.8,167.5 942.8,168.5 940.8,169.5 940.7,170.5 940.6,171.5 941.5,172.5 941.4,173.5 941.5,174.5 940.0,175.5 940.3,176.5 941.4,177.5 940.8,178.5 940.1,179.5 940.8,180.5 940.6,181.5 940.8,182.5 941.2,183.5 940.4,184.5 938.8,185.5 937.8,186.5 935.1,187.5 932.9,188.5 931.8,189.5 931.4,190.5 930.9,191.5 929.3,192.5 928.8,193.5 929.1,194.5 926.5,195.5 926.8,196.5 926.5,197.5 924.4,198.5 923.1,199.5 921.0,200.5 925.2,201.5 921.8,202.5 921.6,203.5 921.3,204.5 920.4,205.5 924.1,206.5 921.6,207.5 917.3,208.5 918.8,209.5 919.8,210.5 916.2,211.5 917.5,212.5 916.0,213.5 913.7,214.5 913.5,215.5 919.5,216.5 923.3,217.5 924.3,218.5 925.0,219.5 920.8,220.5 911.4,221.5 910.1,222.5 904.7,223.5 907.8,224.5 916.5,225.5 918.0,226.5 914.7,227.5 911.2,228.5 909.3,229.5 909.7,230.5 912.1,231.5 915.2,232.5 913.8,233.5 916.0,234.5 913.8,235.5 907.9,236.5 910.5,237.5 912.5,238.5 911.7,239.5 912.0,240.5 907.1,241.5 906.7,242.5 906.9,243.5 907.4,244.5 907.8,245.5 908.6,246.5 905.5,247.5 902.7,248.5 903.5,249.5 904.4,250.5 904.3,251.5 903.4,252.5 907.2,253.5 908.8,254.5 909.6,255.5 909.1,256.5 908.2,257.5 905.6,258.5 904.6,259.5 905.6,260.5 902.0,261.5 904.2,262.5 901.0,263.5 906.4,264.5 906.0,265.5 903.5,266.5 903.5,267.5 902.5,268.5 905.7,269.5 905.8,270.5 904.0,271.5 902.1,272.5 903.2,273.5 902.9,274.5 902.1,275.5 900.8,276.5 898.4,277.5 897.8,278.5 898.5,279.5 897.0,280.5 897.5,281.5 902.4,282.5 900.8,283.5 901.3,284.5 899.1,285.5 901.5,286.5 900.1,287.5 900.6,288.5 901.2,289.5 900.1,290.5 902.2,291.5 897.7,292.5 897.0,293.5 898.1,294.5 897.3,295.5 897.8,296.5 900.9,297.5 897.5,298.5 897.1,299.5 895.4,300.5 894.4,301.5 892.0,302.5 895.4,303.5 898.2,304.5 896.7,305.5 898.3,306.5 894.3,307.5 894.9,308.5 895.2,309.5 896.8,310.5 896.1,311.5 896.7,312.5 898.6,313.5 894.6,314.5 895.0,315.5 896.0,316.5 894.4,317.5 895.7,318.5 892.3,319.5 892.5,320.5 893.8,321.5 891.5,322.5 897.7,323.5 899.3,324.5 898.8,325.5 897.8,326.5 897.6,327.5 895.4,328.5 894.7,329.5 891.2,330.5 895.2,331.5 894.6,332.5 891.2,333.5 892.0,334.5 894.6,335.5 891.8,336.5 892.7,337.5 890.0,338.5 892.1,339.5 893.5,340.5 889.8,341.5 891.4,342.5 894.1,343.5 893.5,344.5 896.6,345.5 896.6,346.5 897.0,347.5 893.0,348.5 892.0,349.5 893.9,350.5 894.9,351.5 893.3,352.5 893.3,353.5 892.0,354.5 892.3,355.5 894.0,356.5 896.4,357.5 895.7,358.5 896.0,359.5 894.6,360.5 894.9,361.5 895.8,362.5 892.7,363.5 895.0,364.5 895.1,365.5 895.8,366.5 895.1,367.5 892.8,368.5 892.4,369.5 893.0,370.5 888.7,371.5 890.2,372.5 891.1,373.5 891.4,374.5 890.8,375.5 890.4,376.5 891.6,377.5 891.4,378.5 894.7,379.5 893.5,380.5 892.9,381.5 894.3,382.5 893.1,383.5 892.8,384.5 894.8,385.5 895.1,386.5 893.1,387.5 890.5,388.5 890.7,389.5 892.9,390.5 889.7,391.5 890.9,392.5 891.8,393.5 889.5,394.5 893.4,395.5 892.3,396.5 889.6,397.5 889.5,398.5 892.0,399.5 894.5,400.5 893.5,401.5 892.9,402.5 892.0,403.5 894.8,404.5 895.2,405.5 890.3,406.5 891.4,407.5 892.7,408.5 891.8,409.5 892.6,410.5 893.2,411.5 890.7,412.5 893.6,413.5 892.6,414.5 893.8,415.5 892.8,416.5 891.8,417.5 894.0,418.5 893.0,419.5 894.7,420.5 893.6,421.5 896.0,422.5 891.6,423.5 891.5,424.5 890.0,425.5 888.9,426.5 890.7,427.5 888.4,428.5 890.0,429.5 892.9,430.5 892.6,431.5 890.6,432.5 890.4,433.5 892.0,434.5 894.0,435.5 891.5,436.5 891.2,437.5 891.8,438.5 890.8,439.5 891.3,440.5 891.4,441.5 893.2,442.5 890.5,443.5 890.7,444.5 891.2,445.5 889.6,446.5 889.6,447.5 890.2,448.5 887.9,449.5 888.8,450.5 887.9,451.5 888.7,452.5 888.7,453.5 889.0,454.5 891.2,455.5 892.8,456.5 892.7,457.5 889.8,458.5 890.8,459.5 888.3,460.5 890.6,461.5 891.7,462.5 890.2,463.5 890.4,464.5 891.7,465.5 892.1,466.5 889.9,467.5 888.9,468.5 886.9,469.5 888.5,470.5 888.6,471.5 889.6,472.5 891.0,473.5 888.0,474.5 888.1,475.5 888.8,476.5 886.9,477.5 888.6,478.5 888.7,479.5 890.2,480.5 891.3,481.5 891.7,482.5 890.2,483.5 890.5,484.5 890.5,485.5 892.0,486.5 887.5,487.5 888.7,488.5 888.2,489.5 889.5,490.5 891.6,491.5 890.8,492.5 890.5,493.5 888.9,494.5 890.1,495.5 890.3,496.5 888.3,497.5 890.4,498.5 889.2,499.5 885.9,500.5 888.1,501.5 890.0,502.5 890.6,503.5 890.2,504.5 889.8,505.5 890.9,506.5 891.1,507.5 887.0,508.5 887.5,509.5 889.0,510.5 889.3,511.5 890.9,512.5 891.8,513.5 890.6,514.5 889.3,515.5 892.4,516.5 889.1,517.5 889.2,518.5 892.9,519.5 891.8,520.5 891.3,521.5 890.1,522.5 891.8,523.5 895.3,524.5 892.1,525.5 890.0,526.5 891.6,527.5 893.5,528.5 891.5,529.5 888.7,530.5 889.8,531.5 888.2,532.5 890.6,533.5 889.4,534.5 890.3,535.5 889.8,536.5 890.9,537.5 886.4,538.5 888.9,539.5 889.5,540.5 889.8,541.5 887.0,542.5 890.8,543.5 888.7,544.5 889.8,545.5 888.5,546.5 888.6,547.5 888.2,548.5 886.0,549.5 886.9,550.5 890.6,551.5 887.7,552.5 888.8,553.5 886.0,554.5 889.9,555.5 887.0,556.5 886.3,557.5 887.8,558.5 889.6,559.5 886.9,560.5 888.1,561.5 889.6,562.5 889.2,563.5 887.7,564.5 889.3,565.5 891.0,566.5 893.7,567.5 892.8,568.5 887.3,569.5 890.6,570.5 891.3,571.5 890.2,572.5 890.6,573.5 891.4,574.5 889.3,575.5 886.8,576.5 887.7,577.5 889.6,578.5 888.1,579.5 887.4,580.5 886.1,581.5 888.7,582.5 886.9,583.5 887.7,584.5 887.1,585.5 890.4,586.5 891.0,587.5 893.5,588.5 889.1,589.5 887.1,590.5 888.5,591.5 886.2,592.5 886.9,593.5 889.2,594.5 888.9,595.5 890.1,596.5 887.8,597.5 887.4,598.5 887.9,599.5 889.7,600.5 890.8,601.5 891.4,602.5 889.6,603.5 887.6,604.5 887.4,605.5 888.0,606.5 885.6,607.5 885.7,608.5 884.4,609.5 887.4,610.5 888.4,611.5 886.7,612.5 889.4,613.5 888.8,614.5 888.2,615.5 889.4,616.5 889.2,617.5 886.7,618.5 886.5,619.5 885.1,620.5 888.1,621.5 887.9,622.5 889.6,623.5 887.4,624.5 885.8,625.5 889.2,626.5 889.9,627.5 886.1,628.5 889.2,629.5 887.2,630.5 890.3,631.5 889.7,632.5 887.5,633.5 887.4,634.5 887.4,635.5 882.6,636.5 887.2,637.5 887.1,638.5 888.9,639.5 883.3,640.5 887.5,641.5 887.7,642.5 885.8,643.5 890.5,644.5 890.1,645.5 886.9,646.5 886.0,647.5 888.1,648.5 891.0,649.5 889.7,650.5 887.6,651.5 890.8,652.5 887.7,653.5 889.9,654.5 889.6,655.5 888.1,656.5 886.7,657.5 886.3,658.5 887.1,659.5 889.8,660.5 888.2,661.5 886.2,662.5 889.4,663.5 889.9,664.5 888.5,665.5 890.0,666.5 888.6,667.5 891.0,668.5 888.5,669.5 886.5,670.5 886.3,671.5 887.2,672.5 887.5,673.5 886.4,674.5 886.1,675.5 884.6,676.5 885.4,677.5 889.4,678.5 887.7,679.5 885.7,680.5 885.5,681.5 885.2,682.5 886.3,683.5 885.3,684.5 888.5,685.5 886.1,686.5 886.3,687.5 889.3,688.5 887.8,689.5 889.5,690.5 887.6,691.5 888.6,692.5 891.4,693.5 887.1,694.5 888.1,695.5 885.6,696.5 886.6,697.5 885.9,698.5 887.0,699.5 885.1,700.5 882.9,701.5 886.8,702.5 887.4,703.5 889.7,704.5 888.6,705.5 888.1,706.5 886.3,707.5 884.7,708.5 886.9,709.5 885.3,710.5 889.3,711.5 890.8,712.5 889.8,713.5 890.6,714.5 888.7,715.5 887.2,716.5 891.9,717.5 888.9,718.5 890.6,719.5 887.5,720.5 889.0,721.5 890.5,722.5 886.9,723.5 886.2,724.5 887.7,725.5 889.1,726.5 890.6,727.5 887.8,728.5 885.8,729.5 883.5,730.5 883.7,731.5 886.5,732.5 886.2,733.5 885.4,734.5 885.2,735.5 886.1,736.5 885.3,737.5 890.0,738.5 893.3,739.5 892.7,740.5 895.2,741.5 893.2,742.5 892.9,743.5 897.6,744.5 904.2,745.5 909.5,746.5 909.9,747.5 905.2,748.5 907.2,749.5 900.7,750.5 896.2,751.5 892.8,752.5 886.7,753.5 886.6,754.5 889.7,755.5 889.6,756.5 891.6,757.5 890.4,758.5 891.1,759.5 890.6,760.5 890.9,761.5 890.5,762.5 891.5,763.5 888.7,764.5 888.1,765.5 886.9,766.5 887.5,767.5 887.0,768.5 885.2,769.5 879.9,770.5 879.2,771.5 878.2,772.5 877.3,773.5 875.4,774.5 874.3,775.5 875.2,776.5 874.0,777.5 874.0,778.5 867.7,779.5 865.5,780.5" fill="none" stroke="#22dd22" stroke-width="1"/></g><circle cx="924.4" cy="298.2" r="2.6" fill="#000" stroke="#c00" stroke-width="1"/><path d="M937 782 Q938 778 941 777" stroke="#5c5" stroke-width="1" fill="none"/></svg>
</body></html>
